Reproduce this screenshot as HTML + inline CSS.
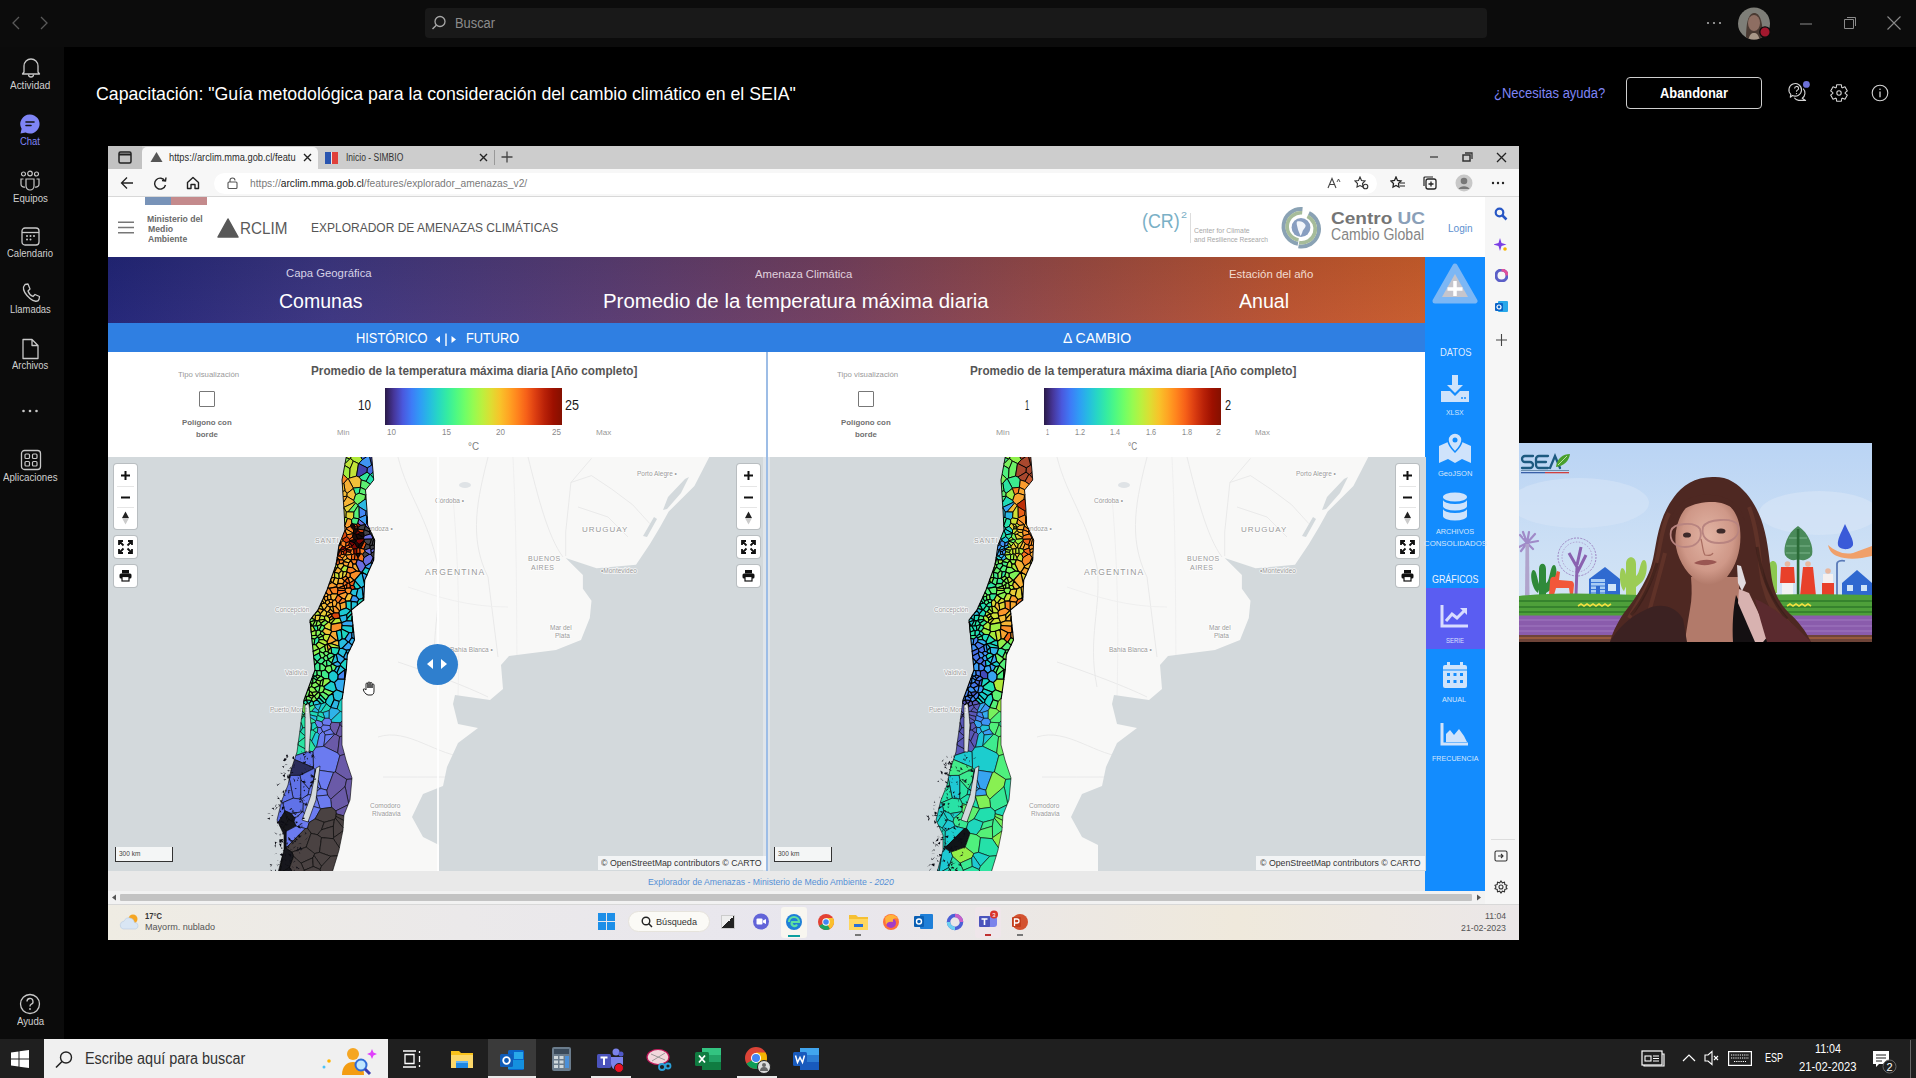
<!DOCTYPE html>
<html><head><meta charset="utf-8">
<style>
*{margin:0;padding:0;box-sizing:border-box}
html,body{width:1916px;height:1078px;overflow:hidden;background:#000;font-family:"Liberation Sans",sans-serif;position:relative}
.a{position:absolute}
#titlebar{left:0;top:0;width:1916px;height:47px;background:#0c0c0c}
#search{left:425px;top:8px;width:1062px;height:30px;background:#191919;border-radius:4px}
#rail{left:0;top:47px;width:64px;height:993px;background:#0b0b0b}
.ri{position:absolute;left:0;width:64px;text-align:center;color:#d6d6d6;font-size:10px}
#taskbar{left:0;top:1039px;width:1916px;height:39px;background:#1f1f1f}
#browser{left:108px;top:146px;width:1411px;height:794px;background:#fff}
#video{left:1519px;top:443px;width:353px;height:199px;overflow:hidden}
.legbar{background:linear-gradient(90deg,#2a1a48 0%,#463699 5%,#4a58dd 10%,#3e7bf7 15%,#2f9df5 20%,#26bce1 25%,#27d7c4 30%,#34eba3 35%,#4df884 40%,#6efe68 45%,#95fb51 50%,#bbf03f 55%,#dedd32 60%,#f8c32a 65%,#ffa423 70%,#ff821d 75%,#f65f18 80%,#db3d11 85%,#ba2208 90%,#9d1000 95%,#841000 100%)}
.tx{line-height:1;white-space:nowrap;transform-origin:0 0}
</style></head><body>
<div id="titlebar" class="a"></div>
<!-- nav arrows -->
<svg class="a" style="left:10px;top:15px" width="44" height="16" viewBox="0 0 44 16"><path d="M9 2 L3 8 L9 14" fill="none" stroke="#5a5a5a" stroke-width="1.3"/><path d="M31 2 L37 8 L31 14" fill="none" stroke="#5a5a5a" stroke-width="1.3"/></svg>
<div id="search" class="a"></div>
<svg class="a" style="left:1706px;top:21px" width="16" height="4"><circle cx="2" cy="2" r="1.1" fill="#aaa"/><circle cx="8" cy="2" r="1.1" fill="#aaa"/><circle cx="14" cy="2" r="1.1" fill="#aaa"/></svg>
<svg class="a" style="left:431px;top:15px" width="16" height="16" viewBox="0 0 16 16"><circle cx="9" cy="6.5" r="5" fill="none" stroke="#a8a8a8" stroke-width="1.3"/><path d="M5.3 10.2 L1.5 14" stroke="#a8a8a8" stroke-width="1.4"/></svg>
<svg class="a" style="left:1737px;top:6px" width="36" height="36" viewBox="0 0 36 36"><defs><clipPath id="avc"><circle cx="17" cy="17.5" r="16"/></clipPath></defs><g clip-path="url(#avc)"><rect width="36" height="36" fill="#7e7e78"/><path d="M9 36 C9 20 10 8 17 7 C24 7 26 18 26 36Z" fill="#4a3a32"/><ellipse cx="17" cy="17" rx="6" ry="8" fill="#8e6e62"/><path d="M11 36 C12 29 14 27 17 27 C20 27 22 29 23 36Z" fill="#a89888"/></g><circle cx="28" cy="26" r="5.2" fill="#a3182e" stroke="#0c0c0c" stroke-width="1.3"/></svg>

<svg class="a" style="left:1798px;top:16px" width="16" height="16"><path d="M2 8 H14" stroke="#8a8a8a" stroke-width="1"/></svg>
<svg class="a" style="left:1841px;top:14px" width="18" height="18"><path d="M3.5 5.5 h9 v9 h-9z M6 3.5 h8.5 v8.5" fill="none" stroke="#8a8a8a" stroke-width="1"/></svg>
<svg class="a" style="left:1886px;top:15px" width="16" height="16"><path d="M1.5 1.5 L14.5 14.5 M14.5 1.5 L1.5 14.5" stroke="#8a8a8a" stroke-width="1.1"/></svg>

<div id="rail" class="a"></div>
<!-- Actividad -->
<svg class="a" style="left:20px;top:57px" width="22" height="22" viewBox="0 0 22 22"><path d="M4 15 V9 a7 7 0 0 1 14 0 V15 L19.5 17 H2.5 Z" fill="none" stroke="#c8c8c8" stroke-width="1.3" stroke-linejoin="round"/><path d="M8.5 17.5 a2.5 2.5 0 0 0 5 0" fill="none" stroke="#c8c8c8" stroke-width="1.3"/></svg>
<!-- Chat -->
<svg class="a" style="left:19px;top:113px" width="22" height="22" viewBox="0 0 22 22"><path d="M11 1.5 a9.5 9.5 0 1 1 -4.4 17.9 L1.5 20.5 L2.6 15.8 A9.5 9.5 0 0 1 11 1.5z" fill="#7f85f5"/><path d="M7 9 H15 M7 12.5 H12" stroke="#141414" stroke-width="1.6" stroke-linecap="round"/></svg>
<!-- Equipos -->
<svg class="a" style="left:19px;top:170px" width="22" height="22" viewBox="0 0 22 22"><circle cx="4.5" cy="4" r="2" fill="none" stroke="#c8c8c8" stroke-width="1.2"/><circle cx="11" cy="3.5" r="2.3" fill="none" stroke="#c8c8c8" stroke-width="1.2"/><circle cx="17.5" cy="4" r="2" fill="none" stroke="#c8c8c8" stroke-width="1.2"/><path d="M7 9 h8 v7 a4 4 0 0 1 -8 0z" fill="none" stroke="#c8c8c8" stroke-width="1.2"/><path d="M4.5 9 H2 v5 a3 3 0 0 0 4 3 M17.5 9 H20 v5 a3 3 0 0 1 -4 3" fill="none" stroke="#c8c8c8" stroke-width="1.2"/></svg>
<!-- Calendario -->
<svg class="a" style="left:20px;top:226px" width="22" height="22" viewBox="0 0 22 22"><rect x="2" y="2" width="17" height="17" rx="3" fill="none" stroke="#c8c8c8" stroke-width="1.3"/><path d="M2 6.5 H19" stroke="#c8c8c8" stroke-width="1.3"/><g fill="#c8c8c8"><circle cx="7" cy="10" r="1"/><circle cx="10.5" cy="10" r="1"/><circle cx="14" cy="10" r="1"/><circle cx="7" cy="13.5" r="1"/><circle cx="10.5" cy="13.5" r="1"/></g></svg>
<!-- Llamadas -->
<svg class="a" style="left:20px;top:282px" width="22" height="22" viewBox="0 0 22 22"><path d="M5 2.5 L8 2 L10 7 L8 9 C9 12 10.5 13.5 13 14.5 L15 12.5 L19.5 14.5 L19 17.5 C18 20 14 20 10 16.5 C5 12 3 8 3.5 5 Z" fill="none" stroke="#c8c8c8" stroke-width="1.3" stroke-linejoin="round"/></svg>
<!-- Archivos -->
<svg class="a" style="left:21px;top:338px" width="20" height="22" viewBox="0 0 20 22"><path d="M2 1.5 H11 L17 7.5 V20.5 H2 Z M11 1.5 V7.5 H17" fill="none" stroke="#c8c8c8" stroke-width="1.3" stroke-linejoin="round"/></svg>
<svg class="a" style="left:21px;top:408px" width="20" height="6"><circle cx="2.5" cy="3" r="1.3" fill="#c8c8c8"/><circle cx="9" cy="3" r="1.3" fill="#c8c8c8"/><circle cx="15.5" cy="3" r="1.3" fill="#c8c8c8"/></svg>
<!-- Aplicaciones -->
<svg class="a" style="left:20px;top:449px" width="22" height="22" viewBox="0 0 22 22"><rect x="1.5" y="1.5" width="19" height="19" rx="3" fill="none" stroke="#c8c8c8" stroke-width="1.3"/><rect x="5" y="5" width="4.5" height="4.5" rx="1" fill="none" stroke="#c8c8c8" stroke-width="1.2"/><rect x="12.5" y="5" width="4.5" height="4.5" rx="1" fill="none" stroke="#c8c8c8" stroke-width="1.2"/><rect x="5" y="12.5" width="4.5" height="4.5" rx="1" fill="none" stroke="#c8c8c8" stroke-width="1.2"/><rect x="12.5" y="12.5" width="4.5" height="4.5" rx="1" fill="none" stroke="#c8c8c8" stroke-width="1.2"/></svg>
<!-- Ayuda -->
<svg class="a" style="left:19px;top:993px" width="22" height="22" viewBox="0 0 22 22"><circle cx="11" cy="11" r="9.5" fill="none" stroke="#c8c8c8" stroke-width="1.3"/><path d="M8 8.5 a3 3 0 1 1 4 2.8 c-1 0.5 -1 1 -1 2.2" fill="none" stroke="#c8c8c8" stroke-width="1.3"/><circle cx="11" cy="16" r="0.9" fill="#c8c8c8"/></svg>

<!-- meeting header -->
<div class="a" style="left:1626px;top:77px;width:136px;height:32px;border:1.5px solid #cfcfcf;border-radius:4px"></div>
<svg class="a" style="left:1786px;top:79px" width="26" height="26" viewBox="0 0 26 26"><path d="M6.5 16.5 L4.3 18.2 L4.8 15.3 A6.3 6.3 0 1 1 6.5 16.5Z" fill="none" stroke="#d4d4d4" stroke-width="1.1" stroke-linejoin="round"/><path d="M17.2 9.6 A6.3 6.3 0 0 1 16.2 19.2 L19.6 21.4 L12.6 21.4 A6.3 6.3 0 0 1 8.3 18.8" fill="none" stroke="#d4d4d4" stroke-width="1.1" stroke-linejoin="round"/><path d="M8.6 9.4 a2 2 0 1 1 2.7 1.9 c-0.6 0.3 -0.8 0.6 -0.8 1.4" fill="none" stroke="#d4d4d4" stroke-width="1.1"/><circle cx="10.5" cy="14.6" r="0.7" fill="#d4d4d4"/><circle cx="20.4" cy="5.4" r="3.4" fill="#6d71d8"/></svg>
<svg class="a" style="left:1828px;top:82px" width="22" height="22" viewBox="0 0 22 22"><path d="M8.63 2.73 L13.37 2.73 L13.72 5.43 L14.47 5.86 L16.97 4.81 L19.34 8.92 L17.18 10.57 L17.18 11.43 L19.34 13.08 L16.97 17.19 L14.47 16.14 L13.72 16.57 L13.37 19.27 L8.63 19.27 L8.28 16.57 L7.53 16.14 L5.03 17.19 L2.66 13.08 L4.82 11.43 L4.82 10.57 L2.66 8.92 L5.03 4.81 L7.53 5.86 L8.28 5.43Z" fill="none" stroke="#d4d4d4" stroke-width="1.1" stroke-linejoin="round"/><circle cx="11" cy="11" r="2.2" fill="none" stroke="#d4d4d4" stroke-width="1.1"/></svg>
<svg class="a" style="left:1871px;top:84px" width="18" height="18" viewBox="0 0 18 18"><circle cx="9" cy="9" r="7.8" fill="none" stroke="#d4d4d4" stroke-width="1.1"/><path d="M9 7.6 V13.2" stroke="#d4d4d4" stroke-width="1.3"/><circle cx="9" cy="5.3" r="0.8" fill="#d4d4d4"/></svg>
<div id="taskbar" class="a"></div>
<svg class="a" style="left:11px;top:1050px" width="18" height="18" viewBox="0 0 18 18"><g fill="#fff"><path d="M0 2.5 L7.5 1.4 V8.5 H0Z"/><path d="M8.5 1.2 L18 0 V8.5 H8.5Z"/><path d="M0 9.5 H7.5 V16.6 L0 15.5Z"/><path d="M8.5 9.5 H18 V18 L8.5 16.8Z"/></g></svg>
<div class="a" style="left:44px;top:1039px;width:344px;height:39px;background:#f0f0f0"></div>
<svg class="a" style="left:54px;top:1050px" width="20" height="20" viewBox="0 0 20 20"><circle cx="12" cy="7.5" r="5.5" fill="none" stroke="#222" stroke-width="1.4"/><path d="M8 11.5 L2 17.5" stroke="#222" stroke-width="1.6"/></svg>
<!-- search illustration -->
<svg class="a" style="left:320px;top:1043px" width="60" height="34" viewBox="0 0 60 34"><circle cx="4" cy="24" r="1.5" fill="#4fc3f7"/><circle cx="9" cy="18" r="1.8" fill="#ffb300"/><path d="M52 6 l1.5 3.5 3.5 1.5 -3.5 1.5 -1.5 3.5 -1.5 -3.5 -3.5 -1.5 3.5 -1.5z" fill="#e040fb"/><circle cx="33" cy="11" r="6" fill="#f5a623"/><path d="M22 32 c0 -9 5 -13 11 -13 s11 4 11 13z" fill="#f39c12"/><circle cx="41" cy="22" r="5.5" fill="#bfe6ff" stroke="#2f6bd8" stroke-width="2"/><path d="M45 26 L50 31" stroke="#3b3bb0" stroke-width="3"/></svg>
<!-- task view -->
<svg class="a" style="left:402px;top:1050px" width="20" height="18" viewBox="0 0 20 18"><path d="M1 1 H14 M1 17 H14 M3 4.5 H12 V13.5 H3Z" fill="none" stroke="#fff" stroke-width="1.3"/><path d="M17.5 1 V3 M17.5 6 V12 M17.5 15 V17" stroke="#fff" stroke-width="1.3"/></svg>
<!-- explorer -->
<svg class="a" style="left:451px;top:1049px" width="23" height="20" viewBox="0 0 23 20"><path d="M0 2 H8 L10 4 H22 V19 H0Z" fill="#f9c21b"/><path d="M0 6 H22 V19 H0Z" fill="#fcd86a"/><path d="M5 12 H17 V19 H5Z" fill="#1e88e5"/><path d="M5 12 H17 V14 H5Z" fill="#64b5f6"/></svg>
<!-- outlook active -->
<div class="a" style="left:488px;top:1039px;width:48px;height:39px;background:#3a3a3a"></div>
<div class="a" style="left:488px;top:1076px;width:48px;height:2px;background:#e8e8e8"></div>
<svg class="a" style="left:500px;top:1049px" width="25" height="22" viewBox="0 0 25 22"><rect x="8" y="1" width="16" height="20" rx="1.5" fill="#0a64c8"/><rect x="14" y="3" width="9" height="7" fill="#28a8ea"/><path d="M8 11 L24 11 V20 H8Z" fill="#1490df"/><rect x="0" y="5" width="13" height="13" rx="1.5" fill="#0f5cb8"/><circle cx="6.5" cy="11.5" r="3.3" fill="none" stroke="#fff" stroke-width="1.8"/></svg>
<!-- calculator -->
<svg class="a" style="left:552px;top:1047px" width="19" height="24" viewBox="0 0 19 24"><rect x="0" y="0" width="19" height="24" rx="2" fill="#6b7c8c"/><rect x="2" y="2" width="15" height="5" fill="#3a4a5a"/><g fill="#cfd8dc"><rect x="2" y="9" width="4" height="3"/><rect x="7.5" y="9" width="4" height="3"/><rect x="2" y="13.5" width="4" height="3"/><rect x="7.5" y="13.5" width="4" height="3"/><rect x="2" y="18" width="4" height="3"/><rect x="7.5" y="18" width="4" height="3"/></g><rect x="13" y="9" width="4" height="12" fill="#4a90d9"/></svg>
<!-- teams -->
<svg class="a" style="left:597px;top:1047px" width="28" height="26" viewBox="0 0 28 26"><circle cx="19" cy="5" r="3.5" fill="#7b83eb"/><circle cx="24" cy="7" r="2.5" fill="#5059c9"/><path d="M13 10 H26 V17 a6 6 0 0 1 -12 0z" fill="#7b83eb"/><rect x="0" y="7" width="14" height="14" rx="1.5" fill="#4b53bc"/><path d="M3.5 10.5 H10.5 M7 10.5 V18" stroke="#fff" stroke-width="2"/><circle cx="22" cy="21" r="4.5" fill="#e81123" stroke="#1f1f1f" stroke-width="1"/></svg>
<div class="a" style="left:591px;top:1076px;width:40px;height:2px;background:#e8e8e8"></div>
<!-- snip -->
<svg class="a" style="left:646px;top:1048px" width="26" height="24" viewBox="0 0 26 24"><ellipse cx="12" cy="9" rx="11" ry="7.5" fill="#f2d7dc" stroke="#c2185b" stroke-width="1.2"/><path d="M5 6 L19 12 M19 5 L6 13" stroke="#888" stroke-width="0.8"/><circle cx="16" cy="19" r="3" fill="none" stroke="#2a9fd8" stroke-width="1.8"/><circle cx="22" cy="18" r="2.5" fill="none" stroke="#2a9fd8" stroke-width="1.8"/></svg>
<!-- excel -->
<svg class="a" style="left:695px;top:1048px" width="26" height="22" viewBox="0 0 26 22"><rect x="7" y="0" width="19" height="22" rx="1.5" fill="#21a366"/><rect x="7" y="0" width="19" height="7" fill="#33c481"/><rect x="7" y="14" width="19" height="8" fill="#107c41"/><rect x="0" y="4" width="14" height="14" rx="1.5" fill="#107c41"/><path d="M4 7.5 L10 14.5 M10 7.5 L4 14.5" stroke="#fff" stroke-width="1.8"/></svg>
<!-- chrome -->
<svg class="a" style="left:744px;top:1046px" width="28" height="28" viewBox="0 0 28 28"><circle cx="12" cy="12" r="11" fill="#db4437"/><path d="M12 12 L2.5 17.5 A11 11 0 0 0 17.5 21.5Z" fill="#0f9d58"/><path d="M12 12 L17.5 21.5 A11 11 0 0 0 21.5 6.5 L12 6.5Z" fill="#f4b400"/><circle cx="12" cy="12" r="5" fill="#fff"/><circle cx="12" cy="12" r="4" fill="#4285f4"/><circle cx="20" cy="21" r="6.5" fill="#dcdcdc" stroke="#1f1f1f" stroke-width="1"/><circle cx="20" cy="19" r="2" fill="#666"/><path d="M16 25 a4 4 0 0 1 8 0" fill="#666"/></svg>
<div class="a" style="left:737px;top:1076px;width:40px;height:2px;background:#e8e8e8"></div>
<!-- word -->
<svg class="a" style="left:793px;top:1048px" width="26" height="22" viewBox="0 0 26 22"><rect x="7" y="0" width="19" height="22" rx="1.5" fill="#2b7cd3"/><rect x="7" y="0" width="19" height="7" fill="#41a5ee"/><rect x="7" y="14" width="19" height="8" fill="#185abd"/><rect x="0" y="4" width="14" height="14" rx="1.5" fill="#185abd"/><path d="M2.5 7.5 L4.5 14.5 L7 9.5 L9.5 14.5 L11.5 7.5" fill="none" stroke="#fff" stroke-width="1.5"/></svg>
<!-- tray -->
<svg class="a" style="left:1641px;top:1050px" width="24" height="17" viewBox="0 0 24 17"><rect x="1" y="1" width="20" height="14" fill="none" stroke="#fff" stroke-width="1.2"/><path d="M21 4 H23 V16 H3 V15" fill="none" stroke="#fff" stroke-width="1.2"/><rect x="4" y="6" width="6" height="5" fill="none" stroke="#fff" stroke-width="1.1"/><path d="M12 6 H18 M12 8.5 H18 M12 11 H18" stroke="#fff" stroke-width="1.1"/></svg>
<svg class="a" style="left:1682px;top:1053px" width="14" height="9"><path d="M1 8 L7 2 L13 8" fill="none" stroke="#fff" stroke-width="1.2"/></svg>
<svg class="a" style="left:1704px;top:1050px" width="16" height="16" viewBox="0 0 16 16"><path d="M1 5 H4 L8 1.5 V14.5 L4 11 H1Z" fill="none" stroke="#fff" stroke-width="1.1"/><path d="M10 6 L14 10 M14 6 L10 10" stroke="#fff" stroke-width="1.1"/></svg>
<svg class="a" style="left:1728px;top:1051px" width="24" height="15" viewBox="0 0 24 15"><rect x="0.6" y="0.6" width="22.8" height="13.8" fill="none" stroke="#fff" stroke-width="1.2"/><path d="M3 4 H21 M3 7 H21 M6 10.5 H18" stroke="#fff" stroke-width="1" stroke-dasharray="1.2 1"/></svg>
<svg class="a" style="left:1872px;top:1050px" width="26" height="24" viewBox="0 0 26 24"><path d="M1 1 H17 V14 H7 L4 17 V14 H1Z" fill="#fff"/><path d="M4 5 H14 M4 8 H14 M4 11 H10" stroke="#1f1f1f" stroke-width="1"/><circle cx="17.5" cy="16.5" r="6.5" fill="#1f1f1f" stroke="#666" stroke-width="1"/><text x="17.5" y="20.5" font-size="11" fill="#fff" text-anchor="middle" font-family="Liberation Sans">2</text></svg>
<div class="a" style="left:1910px;top:1040px;width:1px;height:38px;background:#666"></div>
<div id="browser" class="a"></div>
<!-- tab strip -->
<div class="a" style="left:108px;top:146px;width:1411px;height:23px;background:#cdcdcd"></div>
<div class="a" style="left:108px;top:146px;width:34px;height:23px;background:#c2c2c2"></div>
<svg class="a" style="left:118px;top:151px" width="14" height="13"><rect x="1" y="1" width="12" height="11" rx="1.5" fill="none" stroke="#222" stroke-width="1.5"/><path d="M1 3.5 H13" stroke="#222" stroke-width="2"/></svg>
<div class="a" style="left:142px;top:147px;width:176px;height:22px;background:#f7f7f7;border-radius:5px 5px 0 0"></div>
<svg class="a" style="left:150px;top:151px" width="13" height="12"><path d="M6.5 1 L12.5 11 H0.5Z" fill="#555"/></svg>
<svg class="a" style="left:303px;top:153px" width="9" height="9"><path d="M1 1 L8 8 M8 1 L1 8" stroke="#222" stroke-width="1.4"/></svg>
<div class="a" style="left:325px;top:152px;width:13px;height:12px;background:linear-gradient(90deg,#2a55b0 0 45%,#e8e8ee 45% 52%,#e0403a 52%)"></div>
<svg class="a" style="left:479px;top:153px" width="9" height="9"><path d="M1 1 L8 8 M8 1 L1 8" stroke="#222" stroke-width="1.4"/></svg>
<div class="a" style="left:494px;top:150px;width:1px;height:15px;background:#999"></div>
<svg class="a" style="left:501px;top:151px" width="12" height="12"><path d="M6 0.5 V11.5 M0.5 6 H11.5" stroke="#444" stroke-width="1.3"/></svg>
<svg class="a" style="left:1429px;top:153px" width="10" height="8"><path d="M1 4 H9" stroke="#333" stroke-width="1.2"/></svg>
<svg class="a" style="left:1462px;top:152px" width="11" height="10"><rect x="1" y="3" width="7" height="6" fill="none" stroke="#333" stroke-width="1.5"/><path d="M3 1 H10 V7" fill="none" stroke="#333" stroke-width="1.3"/></svg>
<svg class="a" style="left:1496px;top:152px" width="11" height="11"><path d="M1 1 L10 10 M10 1 L1 10" stroke="#222" stroke-width="1.3"/></svg>
<!-- toolbar -->
<div class="a" style="left:108px;top:169px;width:1411px;height:28px;background:#f7f7f7;border-bottom:1px solid #d8d8d8"></div>
<svg class="a" style="left:120px;top:176px" width="14" height="14"><path d="M7 1.5 L1.5 7 L7 12.5 M1.5 7 H13" fill="none" stroke="#222" stroke-width="1.3"/></svg>
<svg class="a" style="left:153px;top:176px" width="15" height="14"><path d="M12 5 A5.5 5.5 0 1 0 12.5 9" fill="none" stroke="#222" stroke-width="1.4"/><path d="M9 4.5 L12.5 5 L13 1.5" fill="none" stroke="#222" stroke-width="1.4"/></svg>
<svg class="a" style="left:186px;top:176px" width="14" height="14"><path d="M1.5 6.5 L7 1.5 L12.5 6.5 V12.5 H9 V8.5 H5 V12.5 H1.5Z" fill="none" stroke="#222" stroke-width="1.4" stroke-linejoin="round"/></svg>
<div class="a" style="left:214px;top:173px;width:1163px;height:21px;background:#fff;border-radius:11px"></div>
<svg class="a" style="left:227px;top:177px" width="11" height="12"><rect x="1" y="5" width="9" height="6.5" rx="1" fill="none" stroke="#555" stroke-width="1.1"/><path d="M3 5 V3.5 a2.5 2.5 0 0 1 5 0" fill="none" stroke="#555" stroke-width="1.1"/></svg>
<svg class="a" style="left:1354px;top:176px" width="15" height="14"><path d="M6 1 L7.5 4.5 L11 5 L8.5 7.5 L9 11 L6 9.5 L3 11 L3.5 7.5 L1 5 L4.5 4.5Z" fill="none" stroke="#333" stroke-width="1.1"/><circle cx="11.5" cy="10.5" r="2.3" fill="#f7f7f7" stroke="#333" stroke-width="1.1"/></svg>
<svg class="a" style="left:1390px;top:176px" width="16" height="14"><path d="M6 1 L7.5 4.5 L11 5 L8.5 7.5 L9 11 L6 9.5 L3 11 L3.5 7.5 L1 5 L4.5 4.5Z" fill="none" stroke="#222" stroke-width="1.3"/><path d="M10 7 H15 M10 10 H15" stroke="#222" stroke-width="1.2"/></svg>
<svg class="a" style="left:1423px;top:176px" width="15" height="15"><rect x="3" y="3" width="10" height="10" rx="2" fill="none" stroke="#222" stroke-width="1.3"/><path d="M1 10 V2 a1 1 0 0 1 1 -1 H10" fill="none" stroke="#222" stroke-width="1.2"/><path d="M8 5.5 V10.5 M5.5 8 H10.5" stroke="#222" stroke-width="1.3"/></svg>
<svg class="a" style="left:1455px;top:174px" width="18" height="18"><circle cx="9" cy="9" r="8.5" fill="#c8c8c8"/><circle cx="9" cy="7" r="3.3" fill="#777"/><path d="M3.5 15 a6 4.5 0 0 1 11 0" fill="#777"/></svg>
<svg class="a" style="left:1491px;top:181px" width="14" height="4"><circle cx="2" cy="2" r="1.2" fill="#222"/><circle cx="7" cy="2" r="1.2" fill="#222"/><circle cx="12" cy="2" r="1.2" fill="#222"/></svg>
<!-- edge sidebar -->
<div class="a" style="left:1485px;top:197px;width:34px;height:707px;background:#f6f6f6"></div>
<svg class="a" style="left:1494px;top:207px" width="14" height="14"><circle cx="5.5" cy="5.5" r="3.8" fill="none" stroke="#2857c5" stroke-width="2.2"/><path d="M8.5 8.5 L12.5 12.5" stroke="#2857c5" stroke-width="2.5"/></svg>
<svg class="a" style="left:1494px;top:238px" width="14" height="14"><path d="M6 0 L7.5 5 L12.5 6.5 L7.5 8 L6 13 L4.5 8 L-0.5 6.5 L4.5 5Z" fill="#7b3fe4"/><circle cx="11" cy="11" r="1.8" fill="#f5b400"/></svg>
<svg class="a" style="left:1495px;top:269px" width="13" height="13"><circle cx="6.5" cy="6.5" r="5.5" fill="none" stroke="#5b5fc7" stroke-width="3"/><path d="M6.5 1 A5.5 5.5 0 0 1 12 6.5" fill="none" stroke="#e0509a" stroke-width="3"/></svg>
<svg class="a" style="left:1495px;top:300px" width="13" height="13"><rect x="3" y="1" width="10" height="11" rx="1" fill="#28a8ea"/><rect x="0" y="3" width="8" height="8" rx="1" fill="#0a64c8"/><circle cx="4" cy="7" r="2" fill="none" stroke="#fff" stroke-width="1.2"/></svg>
<svg class="a" style="left:1496px;top:334px" width="11" height="12"><path d="M5.5 0 V12 M0 6 H11" stroke="#444" stroke-width="1.1"/></svg>
<div class="a" style="left:1491px;top:839px;width:24px;height:1px;background:#ddd"></div>
<svg class="a" style="left:1494px;top:850px" width="14" height="12"><rect x="1" y="1" width="12" height="10" rx="1.5" fill="none" stroke="#333" stroke-width="1.1"/><path d="M4 6 H9 M7 4 L9 6 L7 8" fill="none" stroke="#333" stroke-width="1.1"/></svg>
<svg class="a" style="left:1494px;top:880px" width="14" height="14"><path d="M7 1 L8.3 2.8 L10.5 2.2 L10.8 4.5 L13 5.3 L12 7 L13 8.7 L10.8 9.5 L10.5 11.8 L8.3 11.2 L7 13 L5.7 11.2 L3.5 11.8 L3.2 9.5 L1 8.7 L2 7 L1 5.3 L3.2 4.5 L3.5 2.2 L5.7 2.8Z" fill="none" stroke="#333" stroke-width="1.1"/><circle cx="7" cy="7" r="2" fill="none" stroke="#333" stroke-width="1.1"/></svg>

<!-- site header -->
<div class="a" style="left:108px;top:198px;width:1377px;height:59px;background:#fff"></div>
<div class="a" style="left:145px;top:197px;width:26px;height:8px;background:#7893b8"></div>
<div class="a" style="left:171px;top:197px;width:36px;height:8px;background:#c48a8c"></div>
<svg class="a" style="left:118px;top:221px" width="16" height="13"><path d="M0 1.2 H16 M0 6.5 H16 M0 11.8 H16" stroke="#777" stroke-width="1.6"/></svg>
<svg class="a" style="left:217px;top:218px" width="22" height="20"><path d="M11 1 L21 19 H1Z" fill="#585858" stroke="#585858" stroke-linejoin="round" stroke-width="1.5"/></svg>
<div class="a" style="left:1190px;top:213px;width:1px;height:30px;background:#ddd"></div>
<svg class="a" style="left:1280px;top:206px" width="42" height="44" viewBox="0 0 42 44">
<path d="M22.53 3.07 A17.50 17.50 0 0 0 17.96 37.73" fill="none" stroke="#8aa2b4" stroke-width="4"/><path d="M22.20 6.75 A13.80 13.80 0 0 0 18.60 34.09" fill="none" stroke="#a6bc9a" stroke-width="3.6"/>
<path d="M28.90 7.14 A17.50 17.50 0 0 1 18.46 40.23" fill="none" stroke="#8aa2b4" stroke-width="4"/><path d="M27.33 10.49 A13.80 13.80 0 0 1 19.10 36.59" fill="none" stroke="#a6bc9a" stroke-width="3.6"/>
<circle cx="21" cy="21.5" r="9.4" fill="#889ec0"/>
<path d="M17 15.5 C20 14.5 24 15.5 25.5 19 C26 21.5 23.5 23 22.5 25.5 C22 27.5 21 29 20.5 30 C19.5 27 18 24.5 17.5 21.5 C17 19 16.2 17 17 15.5Z" fill="#f2f5fa"/>
</svg>

<!-- gradient band -->
<div class="a" style="left:108px;top:257px;width:1317px;height:66px;background:linear-gradient(90deg,#24287a 0%,#403a84 17%,#5e4074 38%,#7a4460 55%,#a65040 75%,#c85a2e 90%,#d5632a 100%)"></div>
<div class="a" style="left:108px;top:257px;width:1317px;height:66px;background:linear-gradient(180deg,rgba(0,0,30,0.12),rgba(60,40,120,0.08))"></div>
<!-- blue bar -->
<div class="a" style="left:108px;top:323px;width:1317px;height:29px;background:#2f7fe2"></div>

<svg class="a" style="left:434px;top:332px" width="28" height="15"><path d="M6 4 L1.5 7.5 L6 11Z" fill="#fff"/><path d="M12 1.5 V14" stroke="#fff" stroke-width="1.4"/><path d="M17.5 4 L22 7.5 L17.5 11Z" fill="#fff"/></svg>
<svg class="a" style="left:1327px;top:177px" width="14" height="12"><path d="M1 11 L5 1.5 L9 11 M2.6 7.5 H7.4" fill="none" stroke="#444" stroke-width="1.1"/><path d="M10 5 L11.5 2 L13 5" fill="none" stroke="#444" stroke-width="0.9"/></svg>
<!-- blue right panel -->
<div class="a" style="left:1425px;top:257px;width:60px;height:634px;background:#138cfe"></div>
<div class="a" style="left:1425px;top:588px;width:60px;height:61px;background:#5a5df2"></div>
<svg class="a" style="left:1432px;top:263px" width="46" height="42" viewBox="0 0 46 42"><path d="M23 3 L43 38 H3Z" fill="#7cb7f5" stroke="#7cb7f5" stroke-width="5" stroke-linejoin="round"/><path d="M23 11 L36 34 H10Z" fill="#c5c5cc"/><path d="M23 18 V33 M15.5 26 H30.5" stroke="#fff" stroke-width="3.5"/></svg>
<svg class="a" style="left:1440px;top:374px" width="30" height="30" viewBox="0 0 30 30"><path d="M12 1 H18 V11 H23 L15 19 L7 11 H12Z" fill="#cfe3fb"/><path d="M1 17 H10 L15 22 L20 17 H29 V28 H1Z" fill="#cfe3fb"/><circle cx="22" cy="24" r="1" fill="#138cfe"/><circle cx="25" cy="24" r="1" fill="#138cfe"/></svg>
<svg class="a" style="left:1438px;top:432px" width="34" height="32" viewBox="0 0 34 32"><path d="M1 14 L10 10 L17 15 L24 10 L33 14 V31 L24 27 L17 31 L10 27 L1 31Z" fill="#cfe3fb"/><path d="M17 1 a7 7 0 0 1 7 7 c0 5 -7 12 -7 12 s-7 -7 -7 -12 a7 7 0 0 1 7 -7z" fill="#cfe3fb" stroke="#138cfe" stroke-width="1.5"/><circle cx="17" cy="8" r="2.5" fill="#138cfe"/></svg>
<svg class="a" style="left:1442px;top:492px" width="26" height="30" viewBox="0 0 26 30"><ellipse cx="13" cy="5" rx="12" ry="4.5" fill="#cfe3fb"/><path d="M1 7.5 a12 4.5 0 0 0 24 0 V14 a12 4.5 0 0 1 -24 0Z" fill="#cfe3fb"/><path d="M1 16.5 a12 4.5 0 0 0 24 0 V24 a12 4.5 0 0 1 -24 0Z" fill="#cfe3fb"/></svg>
<svg class="a" style="left:1440px;top:604px" width="30" height="24" viewBox="0 0 30 24"><path d="M2 1 V22 H28" fill="none" stroke="#d8dcff" stroke-width="3"/><path d="M6 17 L12 10 L17 14 L25 6" fill="none" stroke="#d8dcff" stroke-width="3"/><path d="M20 4 H27 V11Z" fill="#d8dcff"/></svg>
<svg class="a" style="left:1442px;top:661px" width="26" height="28" viewBox="0 0 26 28"><rect x="1" y="4" width="24" height="23" rx="2" fill="#cfe3fb"/><rect x="5" y="1" width="3" height="6" fill="#cfe3fb"/><rect x="18" y="1" width="3" height="6" fill="#cfe3fb"/><path d="M1 9 H25" stroke="#138cfe" stroke-width="1"/><g fill="#138cfe"><rect x="5" y="12" width="3" height="3"/><rect x="11.5" y="12" width="3" height="3"/><rect x="18" y="12" width="3" height="3"/><rect x="5" y="19" width="3" height="3"/><rect x="11.5" y="19" width="3" height="3"/><rect x="18" y="19" width="3" height="3"/></g></svg>
<svg class="a" style="left:1440px;top:722px" width="30" height="24" viewBox="0 0 30 24"><path d="M2 1 V22 H28" fill="none" stroke="#cfe3fb" stroke-width="3"/><path d="M6 20 V12 L10 8 L14 13 L19 7 L24 14 L27 20Z" fill="#cfe3fb"/></svg>

<!-- legend area -->
<div class="a" style="left:108px;top:352px;width:1317px;height:105px;background:#fff"></div>

<!-- left legend -->
<div class="a" style="left:199px;top:391px;width:16px;height:16px;border:1.5px solid #777;border-radius:1px"></div>
<div class="a legbar" style="left:385px;top:388px;width:177px;height:37px"></div>
<!-- right legend -->
<div class="a" style="left:858px;top:391px;width:16px;height:16px;border:1.5px solid #777;border-radius:1px"></div>
<div class="a legbar" style="left:1044px;top:388px;width:177px;height:37px"></div>

<!-- footer, scrollbar -->
<div class="a" style="left:108px;top:871px;width:1317px;height:20px;background:#e9e9e9"></div>
<div class="a" style="left:108px;top:891px;width:1377px;height:13px;background:#f2f2f2"></div>
<div class="a" style="left:120px;top:894px;width:1352px;height:7px;background:#c3c3c3;border-radius:1px"></div>
<svg class="a" style="left:111px;top:894px" width="6" height="7"><path d="M5 0.5 L1 3.5 L5 6.5Z" fill="#555"/></svg>
<svg class="a" style="left:1476px;top:894px" width="6" height="7"><path d="M1 0.5 L5 3.5 L1 6.5Z" fill="#555"/></svg>

<!-- inner win11 taskbar -->
<div class="a" style="left:108px;top:904px;width:1411px;height:36px;background:linear-gradient(90deg,#efece3 0%,#ebe9ea 25%,#e8e6ee 50%,#efe9dc 80%,#ebe7e8 100%);border-top:1px solid #d8d8d8"></div>
<svg class="a" style="left:119px;top:913px" width="22" height="17" viewBox="0 0 22 17"><circle cx="14" cy="6" r="4.5" fill="#f5a623"/><path d="M4 16 a4 4 0 0 1 1 -7.8 a5.5 5.5 0 0 1 10.5 1.3 a3.3 3.3 0 0 1 1 6.5Z" fill="#d9e6f4" stroke="#b8cbe0" stroke-width="0.6"/></svg>
<svg class="a" style="left:598px;top:913px" width="17" height="17"><g fill="#1d8fe8"><rect x="0" y="0" width="8" height="8"/><rect x="9" y="0" width="8" height="8"/><rect x="0" y="9" width="8" height="8"/><rect x="9" y="9" width="8" height="8"/></g></svg>
<div class="a" style="left:628px;top:911px;width:82px;height:21px;background:#fbfaf6;border-radius:11px;border:1px solid #e6e3dc"></div>
<svg class="a" style="left:641px;top:916px" width="12" height="12"><circle cx="5" cy="5" r="3.8" fill="none" stroke="#222" stroke-width="1.4"/><path d="M7.8 7.8 L11 11" stroke="#222" stroke-width="1.5"/></svg>
<div class="a" style="left:721px;top:915px;width:14px;height:14px;background:linear-gradient(135deg,#eee 50%,#222 50%);border:1px solid #ccc"></div>
<svg class="a" style="left:752px;top:913px" width="18" height="17"><circle cx="9" cy="8.5" r="8" fill="#6264d8"/><rect x="4.5" y="5.5" width="6" height="6" rx="1" fill="#fff"/><path d="M11 7.5 L14 6 V11 L11 9.5Z" fill="#fff"/></svg>
<div class="a" style="left:781px;top:907px;width:26px;height:31px;background:#f8f6f0;border-radius:3px"></div>
<svg class="a" style="left:785px;top:913px" width="18" height="18"><circle cx="9" cy="9" r="8" fill="#1e7fd8"/><path d="M4 9 a5 5 0 0 1 10 0 H7 a2.5 2.5 0 0 0 5 2.5" fill="none" stroke="#5ee0a0" stroke-width="2.2"/></svg>
<div class="a" style="left:788px;top:935px;width:12px;height:2px;background:#0b9fa0"></div>
<svg class="a" style="left:817px;top:913px" width="18" height="18"><circle cx="9" cy="9" r="8" fill="#e34133"/><path d="M9 9 L2.1 13 A8 8 0 0 0 13 15.9Z" fill="#1ea362"/><path d="M9 9 L13 15.9 A8 8 0 0 0 16 5 H9Z" fill="#fbc02d"/><circle cx="9" cy="9" r="3.7" fill="#fff"/><circle cx="9" cy="9" r="2.8" fill="#4285f4"/></svg>
<svg class="a" style="left:849px;top:914px" width="19" height="16"><path d="M0 1 H7 L9 3 H19 V16 H0Z" fill="#f6c033"/><path d="M0 5 H19 V16 H0Z" fill="#ffd75e"/><rect x="5" y="10" width="9" height="3" fill="#2a6fd6"/></svg>
<div class="a" style="left:855px;top:934px;width:6px;height:2px;background:#777"></div>
<svg class="a" style="left:882px;top:913px" width="18" height="18"><circle cx="9" cy="9" r="8" fill="#ff7139"/><circle cx="9" cy="10" r="5" fill="#a33cc8"/><path d="M3 5 C5 1 13 0 16 6 C13 4 10 6 11 9 C8 8 5 9 4 12Z" fill="#ffb23a"/></svg>
<svg class="a" style="left:914px;top:913px" width="19" height="17"><rect x="6" y="1" width="13" height="15" rx="1" fill="#1e7fd8"/><rect x="0" y="3" width="10" height="11" rx="1" fill="#0a5fb4"/><circle cx="5" cy="8.5" r="2.5" fill="none" stroke="#fff" stroke-width="1.4"/></svg>
<svg class="a" style="left:946px;top:913px" width="18" height="18"><circle cx="9" cy="9" r="6.5" fill="none" stroke="#4b5fd6" stroke-width="3.5"/><path d="M9 2.5 A6.5 6.5 0 0 1 15.5 9" fill="none" stroke="#c860c8" stroke-width="3.5"/><path d="M2.5 9 A6.5 6.5 0 0 0 9 15.5" fill="none" stroke="#6cd0f0" stroke-width="3.5"/></svg>
<div class="a" style="left:975px;top:907px;width:26px;height:31px;background:#efe6ea;border-radius:3px"></div>
<svg class="a" style="left:978px;top:910px" width="22" height="20"><rect x="8" y="6" width="11" height="11" rx="3" fill="#7b83eb"/><rect x="1" y="6" width="11" height="11" rx="1" fill="#4b53bc"/><path d="M3.5 9 H9.5 M6.5 9 V15" stroke="#fff" stroke-width="1.6"/><circle cx="16" cy="4.5" r="4" fill="#d9342b"/><text x="16" y="7" font-size="6" fill="#fff" text-anchor="middle" font-family="Liberation Sans">3</text></svg>
<div class="a" style="left:985px;top:934px;width:6px;height:2px;background:#c03030"></div>
<svg class="a" style="left:1011px;top:913px" width="18" height="18"><circle cx="9" cy="9" r="8" fill="#d35230"/><rect x="1" y="4" width="9" height="10" rx="1" fill="#c43e1c"/><path d="M3.5 13 V6 H6 a2 2 0 0 1 0 4 H3.5" fill="none" stroke="#fff" stroke-width="1.3"/></svg>
<div class="a" style="left:1017px;top:934px;width:6px;height:2px;background:#777"></div>
<svg class="a" style="left:108px;top:457px" width="659" height="414" viewBox="0 0 659 414">
<rect x="-1" y="-1" width="662" height="418" fill="#f8f8f7"/>
<g fill="none" stroke="#e8e8e8" stroke-width="0.9">
<path d="M290 0 C300 40 320 60 330 110 C335 150 320 180 330 230 M380 0 C370 40 360 80 380 120 L390 200 M483.5 1.4 L462.9 25.5 L457.7 75.1 L457.7 99 M462.9 25.5 L483.5 18.6 L504 32.3 L524.6 47.7 L541.8 66.6 M470 50 L500 60 L520 80 M290 205 C320 215 360 230 380 240 M270 280 C300 270 330 300 360 300 M275 320 C300 320 320 320 340 320 M420 0 C430 40 440 80 455 100"/>
<path d="M345 40 C350 100 352 160 350 240 M405 0 C410 100 408 200 410 300 M300 130 C330 140 360 150 400 150" stroke="#eeeeee"/>
</g>
<path d="M-1 -1 L238.6 -2.0 L234.0 23.0 L236.0 53.0 L237.0 73.0 L231.0 88.0 L228.0 108.0 L219.0 133.0 L210.0 153.0 L202.0 163.0 L205.0 193.0 L207.0 213.0 L196.0 243.0 L192.0 273.0 L189.0 295.0 L183.0 313.0 L180.0 328.0 L174.0 343.0 L169.0 363.0 L176.0 378.0 L176.0 393.0 L170.0 416.0 L-1 416Z" fill="#d3d9dc"/>
<path d="M601.8 -1.0 L586.4 28.9 L560.7 54.6 L552.1 70.0 L541.8 87.2 L528.0 107.8 L488.6 111.2 L457.7 101.0 L474.9 118.1 L474.9 131.8 L483.5 143.8 L481.8 161.0 L473.0 183.0 L448.0 193.0 L401.0 199.0 L393.0 208.0 L395.0 232.0 L382.0 243.0 L347.0 238.0 L345.0 247.0 L350.0 267.0 L370.0 271.0 L350.0 286.0 L339.0 310.0 L335.0 329.0 L315.0 337.0 L304.0 360.0 L315.0 380.0 L331.0 388.0 L331.0 416.0 L660 416 L660 -1Z" fill="#d3d9dc"/>
<path d="M577 22 L581 20 L573 36 L559 52 L555 53 L560 40Z M546 60 L549 62 L539 80 L535 79Z" fill="#d3d9dc"/>
<ellipse cx="357" cy="28" rx="6" ry="3" fill="#dfe3e6"/>
<circle cx="82" cy="89" r="1.3" fill="#222"/><circle cx="114" cy="87" r="1.3" fill="#222"/>
<path d="M-1 -1 L262.6 -2.0 L264.7 23.0 L256.5 33.0 L258.0 53.0 L258.6 68.0 L265.7 83.0 L264.7 103.0 L255.7 123.0 L254.7 143.0 L242.4 153.0 L245.5 183.0 L238.3 198.0 L237.3 213.0 L233.0 243.0 L233.0 273.0 L233.0 288.0 L237.0 303.0 L243.0 321.0 L241.0 343.0 L235.0 358.0 L234.0 373.0 L230.0 393.0 L223.0 416.0 L-1 416Z" fill="#d3d9dc"/>
<g font-family="Liberation Sans" fill="#9a9a9a" stroke="#ffffff" stroke-width="1.6" stroke-opacity="0.75" paint-order="stroke">
<text x="529" y="19" font-size="6.5" letter-spacing="0">Porto Alegre •</text>
<text x="327" y="46" font-size="6.5" letter-spacing="0">Córdoba •</text>
<text x="474" y="75" font-size="8" letter-spacing="1">URUGUAY</text>
<text x="317" y="118" font-size="8.5" letter-spacing="1.2">ARGENTINA</text>
<text x="420" y="104" font-size="7" letter-spacing="0.5">BUENOS</text>
<text x="423" y="113" font-size="7" letter-spacing="0.5">AIRES</text>
<text x="493" y="116" font-size="6.5" letter-spacing="0">•Montevideo</text>
<text x="442" y="173" font-size="6.5" letter-spacing="0">Mar del</text>
<text x="447" y="181" font-size="6.5" letter-spacing="0">Plata</text>
<text x="342" y="195" font-size="6.5" letter-spacing="0">Bahía Blanca •</text>
<text x="207" y="86" font-size="7" letter-spacing="0.8">SANTIAGO</text>
<text x="254" y="74" font-size="6.5" letter-spacing="0">Mendoza •</text>
<text x="167" y="155" font-size="6.5" letter-spacing="0">Concepción</text>
<text x="177" y="218" font-size="6.5" letter-spacing="0">Valdivia</text>
<text x="162" y="255" font-size="6.5" letter-spacing="0">Puerto Montt</text>
<text x="262" y="351" font-size="6.5" letter-spacing="0">Comodoro</text>
<text x="264" y="359" font-size="6.5" letter-spacing="0">Rivadavia</text>
</g>
<g stroke="#000" stroke-linejoin="round">
<path fill="#a0ed41" stroke-width="0.9" d="M243.2 -1.3 243.5 -2.0 242.0 -2.0Z"/>
<path fill="#bae639" stroke-width="0.9" d="M242.0 -2.0 238.6 -2.0 238.1 0.7 241.7 2.0 242.7 1.7 243.2 -1.3Z"/>
<path fill="#4677e9" stroke-width="0.9" d="M254.3 2.7 261.1 -1.9 261.1 -2.0 251.8 -2.0Z"/>
<path fill="#b0e93a" stroke-width="0.9" d="M243.2 -1.3 242.7 1.7 245.3 4.0 250.5 6.6 250.8 6.5 254.3 2.7 251.8 -2.0 243.5 -2.0Z"/>
<path fill="#88f052" stroke-width="0.9" d="M241.7 2.0 238.1 0.7 237.0 6.7Z"/>
<path fill="#434fbf" stroke-width="0.9" d="M261.1 -1.9 263.6 8.2 264.5 8.5 263.6 -2.0 261.1 -2.0Z"/>
<path fill="#3f94f3" stroke-width="0.9" d="M261.1 -1.9 254.3 2.7 250.8 6.5 259.4 10.9 263.6 8.2Z"/>
<path fill="#bfe438" stroke-width="0.9" d="M242.1 11.7 245.3 4.0 242.7 1.7 241.7 2.0 237.0 6.7 236.7 8.5Z"/>
<path fill="#a1ed40" stroke-width="0.9" d="M239.7 21.8 240.3 21.8 241.5 21.1 242.1 11.7 236.7 8.5 235.1 17.3Z"/>
<path fill="#c2e338" stroke-width="0.9" d="M250.5 6.6 245.3 4.0 242.1 11.7 241.5 21.1 248.5 19.1Z"/>
<path fill="#4242ae" stroke-width="0.9" d="M259.4 10.9 250.8 6.5 250.5 6.6 248.5 19.1 251.0 20.0 259.1 15.2Z"/>
<path fill="#466ce0" stroke-width="0.9" d="M263.6 8.2 259.4 10.9 259.1 15.2 261.9 17.4 262.4 17.5 265.1 15.4 264.5 8.5Z"/>
<path fill="#21dfae" stroke-width="0.9" d="M262.4 17.5 265.5 21.1 265.1 15.4Z"/>
<path fill="#33e69b" stroke-width="0.9" d="M258.1 24.4 261.9 17.4 259.1 15.2 251.0 20.0 253.3 23.0Z"/>
<path fill="#f88626" stroke-width="0.9" d="M239.7 21.8 235.1 17.3 234.0 23.0 234.3 26.9 235.8 26.3Z"/>
<path fill="#23e0ac" stroke-width="0.9" d="M262.4 17.5 261.9 17.4 258.1 24.4 262.2 27.3 265.7 23.0 265.5 21.1Z"/>
<path fill="#f2c039" stroke-width="0.9" d="M253.3 23.0 251.0 20.0 248.5 19.1 241.5 21.1 240.3 21.8 245.3 31.1 252.4 30.3Z"/>
<path fill="#5df072" stroke-width="0.9" d="M258.1 24.4 253.3 23.0 252.4 30.3 252.5 30.4 257.7 32.8 262.2 27.3Z"/>
<path fill="#f6af34" stroke-width="0.9" d="M245.3 31.5 245.3 31.1 240.3 21.8 239.7 21.8 235.8 26.3 237.0 33.6 239.0 36.5Z"/>
<path fill="#f3bf39" stroke-width="0.9" d="M235.8 26.3 234.3 26.9 234.8 34.6 237.0 33.6Z"/>
<path fill="#37e896" stroke-width="0.9" d="M251.2 36.2 252.5 30.4 252.4 30.3 245.3 31.1 245.3 31.5 247.6 37.8Z"/>
<path fill="#5bf074" stroke-width="0.9" d="M252.5 30.4 251.2 36.2 257.6 38.2 257.9 37.7 257.5 33.0 257.7 32.8Z"/>
<path fill="#f3bc38" stroke-width="0.9" d="M239.1 39.3 239.0 36.5 237.0 33.6 234.8 34.6 235.1 39.6Z"/>
<path fill="#f3bf39" stroke-width="0.9" d="M245.7 43.5 247.6 37.8 245.3 31.5 239.0 36.5 239.1 39.3 239.3 39.5Z"/>
<path fill="#6ef165" stroke-width="0.9" d="M245.7 43.5 246.5 45.3 247.5 46.1 249.6 47.7 257.1 42.2 257.6 38.2 251.2 36.2 247.6 37.8Z"/>
<path fill="#87f052" stroke-width="0.9" d="M257.1 42.2 258.2 42.8 257.9 37.7 257.6 38.2Z"/>
<path fill="#f7ab33" stroke-width="0.9" d="M239.3 39.5 239.1 39.3 235.1 39.6 235.5 45.4Z"/>
<path fill="#f5b335" stroke-width="0.9" d="M246.5 45.3 245.7 43.5 239.3 39.5 235.5 45.4 235.8 50.4Z"/>
<path fill="#2bb8e3" stroke-width="0.9" d="M257.1 42.2 249.6 47.7 250.0 48.8 251.1 49.8 258.1 54.2 259.0 53.8 259.0 53.0 258.2 42.8Z"/>
<path fill="#e2cf37" stroke-width="0.9" d="M238.3 55.1 240.0 54.9 247.5 46.1 246.5 45.3 235.8 50.4 235.8 50.7Z"/>
<path fill="#62f06e" stroke-width="0.9" d="M250.0 48.8 249.6 47.7 247.5 46.1 240.0 54.9 246.0 55.1Z"/>
<path fill="#dad736" stroke-width="0.9" d="M238.0 60.4 238.3 55.1 235.8 50.7 236.0 53.0 236.4 60.7Z"/>
<path fill="#e1d137" stroke-width="0.9" d="M238.0 60.4 239.5 61.4 243.5 62.6 245.6 61.0 246.0 55.1 240.0 54.9 238.3 55.1Z"/>
<path fill="#54f079" stroke-width="0.9" d="M250.5 61.7 251.3 60.9 251.1 49.8 250.0 48.8 246.0 55.1 245.6 61.0Z"/>
<path fill="#4488f4" stroke-width="0.9" d="M257.9 58.0 258.1 54.2 251.1 49.8 251.3 60.9Z"/>
<path fill="#3d98f2" stroke-width="0.9" d="M258.1 54.2 257.9 58.0 258.8 59.9 259.3 59.9 259.0 53.8Z"/>
<path fill="#3b9cf2" stroke-width="0.9" d="M257.5 67.6 258.5 66.8 258.8 59.9 257.9 58.0 251.3 60.9 250.5 61.7 250.7 62.1Z"/>
<path fill="#2fb2e8" stroke-width="1.0" d="M259.6 66.8 259.3 59.9 258.8 59.9 258.5 66.8Z"/>
<path fill="#a7ec3c" stroke-width="1.0" d="M236.8 68.8 239.5 61.4 238.0 60.4 236.4 60.7 236.8 68.8Z"/>
<path fill="#fa9f2f" stroke-width="1.0" d="M239.5 61.4 236.8 68.8 238.7 71.2 242.1 69.3 243.9 66.3 243.5 62.6Z"/>
<path fill="#49ee83" stroke-width="1.0" d="M243.9 66.3 245.6 67.1 248.3 67.4 249.9 66.4 250.7 62.1 250.5 61.7 245.6 61.0 243.5 62.6Z"/>
<path fill="#6a6ee0" stroke-width="1.0" d="M249.9 66.4 252.8 68.4 257.5 67.7 257.5 67.6 250.7 62.1Z"/>
<path fill="#e85b16" stroke-width="1.0" d="M245.6 67.1 247.0 69.8 250.1 70.4 250.2 70.3 248.3 67.4Z"/>
<path fill="#a82106" stroke-width="1.0" d="M248.3 67.4 250.2 70.3 252.8 68.4 249.9 66.4Z"/>
<path fill="#f57a22" stroke-width="1.0" d="M237.2 74.1 238.4 72.2 238.7 71.2 236.8 68.8 236.8 68.8 237.0 73.0 236.5 74.2Z"/>
<path fill="#1a0a08" stroke-width="1.0" d="M242.1 69.3 245.5 73.0 246.8 72.0 247.0 69.8 245.6 67.1 243.9 66.3Z"/>
<path fill="#ec6218" stroke-width="1.0" d="M250.0 71.8 250.1 70.4 247.0 69.8 246.8 72.0Z"/>
<path fill="#45444a" stroke-width="1.0" d="M250.2 72.2 256.2 73.0 256.3 72.8 257.4 68.9 257.5 67.7 252.8 68.4 250.2 70.3 250.1 70.4 250.0 71.8Z"/>
<path fill="#6a6ee0" stroke-width="1.0" d="M257.5 67.7 257.4 68.9 261.8 72.6 259.6 68.0 259.6 66.8 258.5 66.8 257.5 67.6Z"/>
<path fill="#f67e23" stroke-width="1.0" d="M238.4 72.2 245.5 76.3 245.5 73.0 242.1 69.3 238.7 71.2Z"/>
<path fill="#1a0a08" stroke-width="1.0" d="M250.2 72.2 250.0 71.8 246.8 72.0 245.5 73.0 245.5 76.3 245.6 76.5 247.0 76.7 249.9 73.7Z"/>
<path fill="#d43f0b" stroke-width="1.0" d="M252.0 75.4 255.7 75.5 256.2 73.0 250.2 72.2 249.9 73.7Z"/>
<path fill="#45444a" stroke-width="1.0" d="M257.4 68.9 256.3 72.8 261.4 74.9 262.0 73.2 261.8 72.6Z"/>
<path fill="#45444a" stroke-width="1.0" d="M261.4 74.9 262.1 77.1 263.2 77.5 263.8 76.8 262.0 73.2Z"/>
<path fill="#f9a12f" stroke-width="1.0" d="M237.2 74.1 238.8 77.8 245.4 76.7 245.6 76.5 245.5 76.3 238.4 72.2Z"/>
<path fill="#7a0403" stroke-width="1.0" d="M247.0 76.7 247.8 77.3 250.1 77.3 252.0 75.4 249.9 73.7Z"/>
<path fill="#1a0a08" stroke-width="1.0" d="M250.1 77.3 255.7 80.7 256.3 78.8 255.7 75.5 252.0 75.4Z"/>
<path fill="#45444a" stroke-width="1.0" d="M256.2 73.0 255.7 75.5 256.3 78.8 262.1 77.1 261.4 74.9 256.3 72.8Z"/>
<path fill="#45444a" stroke-width="1.0" d="M263.2 77.5 265.0 81.3 265.7 80.8 263.8 76.8Z"/>
<path fill="#db4a0f" stroke-width="1.0" d="M238.8 77.8 237.2 74.1 236.5 74.2 233.7 81.3 234.8 82.3 238.7 79.6Z"/>
<path fill="#f26c1d" stroke-width="1.0" d="M244.3 80.1 245.4 76.7 238.8 77.8 238.7 79.6 241.6 82.1Z"/>
<path fill="#1a0a08" stroke-width="1.0" d="M247.8 77.3 249.6 82.3 255.6 81.7 255.7 80.7 250.1 77.3Z"/>
<path fill="#6a6ee0" stroke-width="1.0" d="M265.0 81.3 263.2 77.5 262.1 77.1 256.3 78.8 255.7 80.7 255.6 81.7 255.9 82.3 263.6 82.1 265.0 81.5Z"/>
<path fill="#e65915" stroke-width="1.0" d="M247.0 82.5 244.3 80.1 241.6 82.1 241.8 83.7Z"/>
<path fill="#1a0a08" stroke-width="1.0" d="M247.0 76.7 245.6 76.5 245.4 76.7 244.3 80.1 247.0 82.5 248.4 83.3 249.6 82.3 247.8 77.3Z"/>
<path fill="#45444a" stroke-width="1.0" d="M265.0 81.3 265.0 81.5 265.6 82.3 266.6 83.2 266.7 83.2 266.7 83.0 265.7 80.8Z"/>
<path fill="#fb992d" stroke-width="1.0" d="M233.0 85.8 234.8 83.6 234.8 82.3 233.7 81.3 232.0 85.6Z"/>
<path fill="#c93609" stroke-width="1.0" d="M241.8 83.7 241.6 82.1 238.7 79.6 234.8 82.3 234.8 83.6 238.1 85.7 241.3 84.8 241.7 84.2Z"/>
<path fill="#1a0a08" stroke-width="1.0" d="M246.6 85.9 248.0 84.4 248.4 83.3 247.0 82.5 241.8 83.7 241.7 84.2Z"/>
<path fill="#45444a" stroke-width="1.0" d="M255.9 82.3 256.1 83.7 256.4 84.4 258.2 86.8 261.5 88.3 263.6 82.1Z"/>
<path fill="#1a0a08" stroke-width="1.0" d="M233.1 87.6 233.0 85.8 232.0 85.6 231.0 88.0 230.8 89.2Z"/>
<path fill="#f78425" stroke-width="1.0" d="M234.8 83.6 233.0 85.8 233.1 87.6 234.5 89.2 237.3 90.2 237.7 89.3 238.1 85.7Z"/>
<path fill="#ed6319" stroke-width="1.0" d="M241.3 84.8 238.1 85.7 237.7 89.3 240.7 88.2 241.5 85.7Z"/>
<path fill="#7a0403" stroke-width="1.0" d="M246.6 86.2 246.6 85.9 241.7 84.2 241.3 84.8 241.5 85.7 244.1 89.2Z"/>
<path fill="#1a0a08" stroke-width="1.0" d="M246.6 86.2 249.7 91.2 250.6 91.0 251.2 87.4 248.0 84.4 246.6 85.9Z"/>
<path fill="#7a0403" stroke-width="1.0" d="M248.0 84.4 251.2 87.4 256.1 83.7 255.9 82.3 255.6 81.7 249.6 82.3 248.4 83.3Z"/>
<path fill="#45444a" stroke-width="1.0" d="M265.0 81.5 263.6 82.1 261.5 88.3 262.1 89.0 264.1 88.3 265.6 82.3Z"/>
<path fill="#45444a" stroke-width="1.0" d="M265.6 82.3 264.1 88.3 266.4 88.3 266.7 83.4 266.6 83.2Z"/>
<path fill="#f1691b" stroke-width="1.0" d="M240.7 88.2 237.7 89.3 237.3 90.2 237.8 91.5 238.1 91.9 242.2 90.2Z"/>
<path fill="#a72006" stroke-width="1.0" d="M241.5 85.7 240.7 88.2 242.2 90.2 243.9 90.3 244.1 89.2Z"/>
<path fill="#840a03" stroke-width="1.0" d="M243.9 90.3 244.8 91.8 245.7 92.1 248.9 91.7 249.7 91.2 246.6 86.2 244.1 89.2Z"/>
<path fill="#1a0a08" stroke-width="1.0" d="M251.9 91.5 252.8 91.4 256.4 84.4 256.1 83.7 251.2 87.4 250.6 91.0Z"/>
<path fill="#e15212" stroke-width="1.0" d="M255.9 92.2 258.2 86.8 256.4 84.4 252.8 91.4Z"/>
<path fill="#f57921" stroke-width="1.0" d="M232.0 93.2 234.5 89.2 233.1 87.6 230.8 89.2 230.3 92.4Z"/>
<path fill="#7a0403" stroke-width="1.0" d="M234.5 89.2 232.0 93.2 232.1 93.3 232.5 93.5 237.8 91.5 237.3 90.2Z"/>
<path fill="#f57b22" stroke-width="1.0" d="M242.2 90.2 238.1 91.9 238.2 92.4 243.4 93.3 244.8 91.8 243.9 90.3Z"/>
<path fill="#45444a" stroke-width="1.0" d="M261.5 88.3 258.2 86.8 255.9 92.2 256.7 93.0 262.1 91.1 262.1 89.0Z"/>
<path fill="#45444a" stroke-width="1.0" d="M262.1 89.0 262.1 91.1 262.9 92.6 266.3 91.7 266.4 88.3 264.1 88.3Z"/>
<path fill="#1a0a08" stroke-width="1.0" d="M229.4 99.4 229.7 99.3 232.1 93.3 232.0 93.2 230.3 92.4 229.4 99.0Z"/>
<path fill="#d8450d" stroke-width="1.0" d="M237.8 91.5 232.5 93.5 233.1 94.2 235.0 94.7 238.2 92.5 238.2 92.4 238.1 91.9Z"/>
<path fill="#bb2d08" stroke-width="1.0" d="M237.5 98.0 237.7 98.0 238.7 94.8 238.2 92.5 235.0 94.7 236.2 97.6Z"/>
<path fill="#931405" stroke-width="1.0" d="M238.2 92.4 238.2 92.5 238.7 94.8 242.5 95.5 243.4 93.3Z"/>
<path fill="#f57a22" stroke-width="1.0" d="M243.7 97.8 246.1 96.9 245.7 92.1 244.8 91.8 243.4 93.3 242.5 95.5 243.3 97.5Z"/>
<path fill="#8c0f04" stroke-width="1.0" d="M248.2 97.1 248.8 96.5 248.9 91.7 245.7 92.1 246.1 96.9 247.2 97.1Z"/>
<path fill="#d6420c" stroke-width="1.0" d="M248.9 91.7 248.8 96.5 252.2 96.3 251.9 91.5 250.6 91.0 249.7 91.2Z"/>
<path fill="#f67d23" stroke-width="1.0" d="M252.2 96.3 252.7 96.8 254.6 97.3 256.9 94.5 256.7 93.0 255.9 92.2 252.8 91.4 251.9 91.5Z"/>
<path fill="#6a6ee0" stroke-width="1.0" d="M261.2 97.4 263.0 97.5 263.4 96.0 262.9 92.6 262.1 91.1 256.7 93.0 256.9 94.5Z"/>
<path fill="#6a6ee0" stroke-width="1.0" d="M263.4 96.0 266.1 94.7 266.3 91.7 262.9 92.6Z"/>
<path fill="#d13b09" stroke-width="1.0" d="M233.1 94.2 232.5 93.5 232.1 93.3 229.7 99.3 231.2 99.1 233.8 97.5Z"/>
<path fill="#f1681b" stroke-width="1.0" d="M235.0 94.7 233.1 94.2 233.8 97.5 236.2 97.6Z"/>
<path fill="#fb9b2e" stroke-width="1.0" d="M243.3 97.5 242.5 95.5 238.7 94.8 237.7 98.0 237.9 98.2Z"/>
<path fill="#45444a" stroke-width="1.0" d="M256.0 100.7 261.2 97.4 256.9 94.5 254.6 97.3Z"/>
<path fill="#45444a" stroke-width="1.0" d="M263.4 96.0 263.0 97.5 265.2 100.9 265.8 100.9 266.1 94.7Z"/>
<path fill="#f98e29" stroke-width="1.0" d="M233.8 97.5 231.2 99.1 234.6 101.2 237.5 98.0 236.2 97.6Z"/>
<path fill="#fa922a" stroke-width="1.0" d="M242.9 103.2 243.5 102.7 243.7 97.8 243.3 97.5 237.9 98.2 239.4 101.4Z"/>
<path fill="#ee6419" stroke-width="1.0" d="M243.5 102.7 246.4 102.6 247.2 97.1 246.1 96.9 243.7 97.8Z"/>
<path fill="#e85c16" stroke-width="1.0" d="M249.2 103.0 250.2 102.7 250.1 100.9 248.2 97.1 247.2 97.1 246.4 102.6Z"/>
<path fill="#1a0a08" stroke-width="1.0" d="M250.1 100.9 252.7 96.8 252.2 96.3 248.8 96.5 248.2 97.1Z"/>
<path fill="#f47520" stroke-width="1.0" d="M255.0 104.7 256.0 100.7 254.6 97.3 252.7 96.8 250.1 100.9 250.2 102.7Z"/>
<path fill="#f67c23" stroke-width="1.0" d="M229.8 101.4 231.1 102.9 235.0 103.0 234.6 101.2 231.2 99.1 229.7 99.3 229.4 99.4 229.3 99.5 229.2 100.2Z"/>
<path fill="#f6ae34" stroke-width="1.0" d="M237.9 98.2 237.7 98.0 237.5 98.0 234.6 101.2 235.0 103.0 235.6 103.9 239.4 101.4Z"/>
<path fill="#6a6ee0" stroke-width="1.0" d="M257.5 109.1 262.8 105.8 265.2 100.9 263.0 97.5 261.2 97.4 256.0 100.7 255.0 104.7Z"/>
<path fill="#f78124" stroke-width="1.1" d="M228.2 107.0 229.8 101.4 229.2 100.2 228.1 107.0Z"/>
<path fill="#ee641a" stroke-width="1.1" d="M231.6 106.6 231.1 102.9 229.8 101.4 228.2 107.0 229.7 108.1Z"/>
<path fill="#f88726" stroke-width="1.1" d="M234.8 106.4 235.6 104.6 235.6 103.9 235.0 103.0 231.1 102.9 231.6 106.6Z"/>
<path fill="#f3be39" stroke-width="1.1" d="M242.8 103.4 242.9 103.2 239.4 101.4 235.6 103.9 235.6 104.6 240.9 105.8Z"/>
<path fill="#f8a832" stroke-width="1.1" d="M240.9 105.8 235.6 104.6 234.8 106.4 236.0 108.4 239.7 109.6Z"/>
<path fill="#f78124" stroke-width="1.1" d="M245.0 107.1 247.9 107.0 249.2 103.0 246.4 102.6 243.5 102.7 242.9 103.2 242.8 103.4Z"/>
<path fill="#6a6ee0" stroke-width="1.1" d="M251.4 114.5 253.5 115.4 253.8 115.3 253.9 115.3 257.2 110.4 257.5 109.1 255.0 104.7 250.2 102.7 249.2 103.0 247.9 107.0Z"/>
<path fill="#6a6ee0" stroke-width="1.1" d="M265.2 100.9 262.8 105.8 264.1 106.5 265.7 103.0 265.8 100.9Z"/>
<path fill="#c9e137" stroke-width="1.1" d="M228.6 111.2 229.8 110.4 229.7 108.1 228.2 107.0 228.1 107.0 228.0 108.0 227.0 110.8Z"/>
<path fill="#eec439" stroke-width="1.1" d="M232.9 112.6 236.0 108.4 234.8 106.4 231.6 106.6 229.7 108.1 229.8 110.4Z"/>
<path fill="#fb9b2e" stroke-width="1.1" d="M244.7 110.7 245.0 107.1 242.8 103.4 240.9 105.8 239.7 109.6 239.9 110.1Z"/>
<path fill="#f7ab33" stroke-width="1.1" d="M248.6 114.1 251.4 114.5 247.9 107.0 245.0 107.1 244.7 110.7Z"/>
<path fill="#ddd437" stroke-width="1.1" d="M226.5 115.1 228.6 111.2 227.0 110.8 225.5 115.0Z"/>
<path fill="#b2e83a" stroke-width="1.1" d="M239.7 109.6 236.0 108.4 232.9 112.6 233.4 113.8 235.3 114.7 238.7 114.7 239.9 110.1Z"/>
<path fill="#3a9ef1" stroke-width="1.1" d="M262.8 105.8 257.5 109.1 257.2 110.4 261.5 112.3 264.1 106.5Z"/>
<path fill="#f6b135" stroke-width="1.1" d="M228.6 111.2 226.5 115.1 226.6 115.2 230.7 116.6 233.4 113.8 232.9 112.6 229.8 110.4Z"/>
<path fill="#f68024" stroke-width="1.1" d="M238.7 114.7 239.0 115.1 242.2 116.5 248.6 114.1 244.7 110.7 239.9 110.1Z"/>
<path fill="#e4ce38" stroke-width="1.1" d="M234.0 121.4 234.3 121.0 235.3 114.7 233.4 113.8 230.7 116.6 231.0 121.5Z"/>
<path fill="#1dd0c9" stroke-width="1.1" d="M253.9 115.3 259.0 117.9 261.5 112.3 257.2 110.4Z"/>
<path fill="#f3bb38" stroke-width="1.1" d="M223.8 120.5 226.7 120.6 226.6 115.2 226.5 115.1 225.5 115.0 223.6 120.3Z"/>
<path fill="#c8e137" stroke-width="1.1" d="M231.0 121.5 230.7 116.6 226.6 115.2 226.7 120.6 227.0 120.8 230.6 121.8Z"/>
<path fill="#e1d137" stroke-width="1.1" d="M237.8 119.2 239.0 115.1 238.7 114.7 235.3 114.7 234.3 121.0Z"/>
<path fill="#fb982d" stroke-width="1.1" d="M242.3 119.9 242.2 116.5 239.0 115.1 237.8 119.2 239.8 121.0 240.3 121.1Z"/>
<path fill="#fa8f29" stroke-width="1.1" d="M246.1 123.3 246.7 123.3 253.5 115.4 251.4 114.5 248.6 114.1 242.2 116.5 242.3 119.9Z"/>
<path fill="#f7ab33" stroke-width="1.1" d="M222.8 122.9 223.8 120.5 223.6 120.3 222.6 122.9Z"/>
<path fill="#f98c28" stroke-width="1.1" d="M236.7 124.1 239.8 121.0 237.8 119.2 234.3 121.0 234.0 121.4 236.6 124.0Z"/>
<path fill="#fb9c2e" stroke-width="1.1" d="M241.5 126.1 246.1 123.3 242.3 119.9 240.3 121.1Z"/>
<path fill="#39a0f1" stroke-width="1.1" d="M253.9 115.3 253.8 115.3 256.5 127.4 256.7 123.0 259.0 117.9Z"/>
<path fill="#f5b737" stroke-width="1.1" d="M223.6 125.6 222.8 122.9 222.6 122.9 221.1 127.2Z"/>
<path fill="#f4b937" stroke-width="1.1" d="M223.6 125.6 224.8 125.8 227.0 120.8 226.7 120.6 223.8 120.5 222.8 122.9Z"/>
<path fill="#f3bf39" stroke-width="1.1" d="M227.0 120.8 224.8 125.8 228.8 128.3 229.9 126.4 230.6 121.8Z"/>
<path fill="#f8a832" stroke-width="1.1" d="M234.0 121.4 231.0 121.5 230.6 121.8 229.9 126.4 234.9 126.6 236.6 124.0Z"/>
<path fill="#e95d17" stroke-width="1.1" d="M241.4 126.2 241.5 126.1 240.3 121.1 239.8 121.0 236.7 124.1 239.7 126.2Z"/>
<path fill="#26bedd" stroke-width="1.1" d="M253.8 115.3 253.5 115.4 246.7 123.3 246.9 123.8 252.8 130.5 254.1 130.5 256.4 129.0 256.5 127.4Z"/>
<path fill="#f4731f" stroke-width="1.1" d="M239.7 126.2 236.7 124.1 236.6 124.0 234.9 126.6 235.4 128.9 235.8 129.1 238.8 127.3Z"/>
<path fill="#ea5f17" stroke-width="1.1" d="M241.4 126.2 242.3 128.7 245.7 128.3 246.9 123.8 246.7 123.3 246.1 123.3 241.5 126.1Z"/>
<path fill="#fa9d2e" stroke-width="1.1" d="M224.8 125.8 223.6 125.6 221.1 127.2 219.8 130.8 221.3 131.4 228.8 129.9 228.8 128.3Z"/>
<path fill="#fb962c" stroke-width="1.1" d="M234.9 126.6 229.9 126.4 228.8 128.3 228.8 129.9 229.6 131.2 230.8 130.8 235.4 128.9Z"/>
<path fill="#f88726" stroke-width="1.1" d="M235.8 129.1 237.2 131.7 237.4 132.0 238.7 131.3 238.8 127.3Z"/>
<path fill="#f1691b" stroke-width="1.1" d="M238.7 131.3 242.3 130.9 242.3 128.7 241.4 126.2 239.7 126.2 238.8 127.3Z"/>
<path fill="#d33e0b" stroke-width="1.1" d="M242.3 128.7 242.3 130.9 243.8 132.8 247.6 131.9 245.7 128.3Z"/>
<path fill="#1dd1c8" stroke-width="1.1" d="M247.6 131.9 249.9 132.1 252.8 130.5 246.9 123.8 245.7 128.3Z"/>
<path fill="#f78425" stroke-width="1.1" d="M230.8 130.8 229.6 131.2 229.9 133.4 237.1 133.5 237.4 132.0 237.2 131.7Z"/>
<path fill="#f1691b" stroke-width="1.1" d="M235.4 128.9 230.8 130.8 237.2 131.7 235.8 129.1Z"/>
<path fill="#f78224" stroke-width="1.1" d="M229.9 133.4 229.6 131.2 228.8 129.9 221.3 131.4 224.3 136.6 229.3 137.0Z"/>
<path fill="#ef661a" stroke-width="1.1" d="M237.8 135.2 237.1 133.5 229.9 133.4 229.3 137.0 229.7 137.9 230.0 138.0Z"/>
<path fill="#f98e29" stroke-width="1.1" d="M237.4 132.0 237.1 133.5 237.8 135.2 239.6 137.0 242.3 136.4 243.8 132.8 242.3 130.9 238.7 131.3Z"/>
<path fill="#f88726" stroke-width="1.1" d="M220.2 138.0 222.5 138.0 224.3 136.6 221.3 131.4 219.8 130.8 219.0 133.0 217.9 135.4Z"/>
<path fill="#fa9e2f" stroke-width="1.1" d="M234.2 141.2 237.0 142.2 239.6 137.0 237.8 135.2 230.0 138.0Z"/>
<path fill="#24c0db" stroke-width="1.1" d="M243.8 132.8 242.3 136.4 244.5 138.4 248.2 139.2 249.9 132.1 247.6 131.9Z"/>
<path fill="#29bae1" stroke-width="1.1" d="M250.9 142.5 254.6 141.5 255.4 140.1 254.1 130.5 252.8 130.5 249.9 132.1 248.2 139.2Z"/>
<path fill="#38a3f1" stroke-width="1.1" d="M255.4 140.1 255.9 140.0 256.4 129.0 254.1 130.5Z"/>
<path fill="#f9a130" stroke-width="1.1" d="M215.6 141.5 216.0 141.5 216.5 140.0 216.2 139.2 215.3 141.2Z"/>
<path fill="#f7ad33" stroke-width="1.1" d="M220.2 138.0 217.9 135.4 216.2 139.2 216.5 140.0 219.5 139.3Z"/>
<path fill="#f5b536" stroke-width="1.1" d="M229.3 137.0 224.3 136.6 222.5 138.0 223.0 142.3 225.2 143.5 227.2 142.8 229.7 137.9Z"/>
<path fill="#f9a531" stroke-width="1.1" d="M219.5 139.3 216.5 140.0 216.0 141.5 217.7 144.2 219.9 142.7Z"/>
<path fill="#f6af34" stroke-width="1.1" d="M220.8 142.7 223.0 142.3 222.5 138.0 220.2 138.0 219.5 139.3 219.9 142.7Z"/>
<path fill="#f0c239" stroke-width="1.1" d="M238.0 144.2 242.4 143.9 244.5 138.4 242.3 136.4 239.6 137.0 237.0 142.2Z"/>
<path fill="#3d99f2" stroke-width="1.1" d="M243.3 144.4 249.4 145.2 250.9 142.5 248.2 139.2 244.5 138.4 242.4 143.9Z"/>
<path fill="#1fc8d4" stroke-width="1.1" d="M254.6 141.5 255.7 142.9 255.9 140.0 255.4 140.1Z"/>
<path fill="#f3bf39" stroke-width="1.1" d="M213.5 147.0 216.2 146.2 214.3 143.4 212.9 146.5Z"/>
<path fill="#f0c239" stroke-width="1.1" d="M216.2 146.2 217.2 146.0 217.7 144.2 216.0 141.5 215.6 141.5 215.1 141.7 214.3 143.4Z"/>
<path fill="#f5b536" stroke-width="1.1" d="M221.8 145.9 220.8 142.7 219.9 142.7 217.7 144.2 217.2 146.0 219.1 148.1Z"/>
<path fill="#faa02f" stroke-width="1.1" d="M224.4 145.2 225.2 143.5 223.0 142.3 220.8 142.7 221.8 145.9Z"/>
<path fill="#f57821" stroke-width="1.1" d="M229.7 137.9 227.2 142.8 229.2 145.7 230.6 145.8 234.2 141.2 230.0 138.0Z"/>
<path fill="#f67e23" stroke-width="1.1" d="M237.8 144.7 238.0 144.2 237.0 142.2 234.2 141.2 230.6 145.8 232.0 146.8Z"/>
<path fill="#f7ad34" stroke-width="1.1" d="M219.3 148.8 222.2 150.3 224.8 149.3 224.4 145.2 221.8 145.9 219.1 148.1Z"/>
<path fill="#f7aa32" stroke-width="1.1" d="M224.9 149.3 227.7 149.6 229.2 145.7 227.2 142.8 225.2 143.5 224.4 145.2 224.8 149.3Z"/>
<path fill="#1dd1c7" stroke-width="1.1" d="M243.3 144.4 242.4 143.9 238.0 144.2 237.8 144.7 238.2 150.9 242.9 153.7 243.3 153.8Z"/>
<path fill="#23c2da" stroke-width="1.1" d="M249.4 145.2 243.3 144.4 243.3 153.8 243.5 153.8 243.4 153.0 249.4 148.1Z"/>
<path fill="#1fd8bc" stroke-width="1.1" d="M254.6 141.5 250.9 142.5 249.4 145.2 249.4 148.1 255.7 143.0 255.7 142.9Z"/>
<path fill="#f6b135" stroke-width="1.1" d="M213.2 148.2 213.5 147.0 212.9 146.5 211.4 149.8Z"/>
<path fill="#f3bc38" stroke-width="1.1" d="M217.2 146.0 216.2 146.2 213.5 147.0 213.2 148.2 215.6 152.9 215.7 152.9 216.4 152.9 219.3 148.8 219.1 148.1Z"/>
<path fill="#f9a531" stroke-width="1.1" d="M231.6 153.9 232.8 153.0 232.0 146.8 230.6 145.8 229.2 145.7 227.7 149.6Z"/>
<path fill="#f8a932" stroke-width="1.1" d="M232.8 153.0 238.2 150.9 237.8 144.7 232.0 146.8Z"/>
<path fill="#d9d836" stroke-width="1.1" d="M215.6 152.9 213.2 148.2 211.4 149.8 210.7 151.5Z"/>
<path fill="#f5b636" stroke-width="1.1" d="M216.4 152.9 218.8 155.2 220.3 154.7 222.2 152.2 222.2 150.3 219.3 148.8Z"/>
<path fill="#e7ca38" stroke-width="1.1" d="M222.2 152.2 225.9 155.7 224.9 149.3 224.8 149.3 222.2 150.3Z"/>
<path fill="#fb982d" stroke-width="1.1" d="M225.9 155.7 226.1 155.8 230.8 156.0 231.6 153.9 227.7 149.6 224.9 149.3Z"/>
<path fill="#b6e739" stroke-width="1.1" d="M209.9 153.8 209.7 153.3 207.6 156.1Z"/>
<path fill="#f5b235" stroke-width="1.1" d="M209.9 153.8 212.4 156.8 215.7 152.9 215.6 152.9 210.7 151.5 210.0 153.0 209.7 153.3Z"/>
<path fill="#f9a230" stroke-width="1.1" d="M222.2 152.2 220.3 154.7 223.0 156.9 224.1 157.1 226.1 155.8 225.9 155.7Z"/>
<path fill="#bae639" stroke-width="1.1" d="M207.6 158.5 212.4 158.1 212.4 156.8 209.9 153.8 207.6 156.1 206.3 157.6Z"/>
<path fill="#e5cd38" stroke-width="1.1" d="M212.4 158.1 212.6 158.4 216.4 159.6 218.1 158.7 218.8 155.2 216.4 152.9 215.7 152.9 212.4 156.8Z"/>
<path fill="#e5cd38" stroke-width="1.1" d="M218.8 155.2 218.1 158.7 219.2 159.1 223.0 156.9 220.3 154.7Z"/>
<path fill="#1dcad2" stroke-width="1.1" d="M238.2 150.9 232.8 153.0 231.6 153.9 230.8 156.0 231.7 159.3 238.7 157.7 242.9 153.7Z"/>
<path fill="#cce036" stroke-width="1.1" d="M203.9 161.2 205.2 159.0 203.4 161.3Z"/>
<path fill="#fb942b" stroke-width="1.1" d="M223.8 159.2 224.1 157.1 223.0 156.9 219.2 159.1 221.4 161.0Z"/>
<path fill="#d9460d" stroke-width="1.1" d="M231.7 159.3 230.8 156.0 226.1 155.8 224.1 157.1 223.8 159.2 225.6 161.2 227.2 161.7 231.7 161.1Z"/>
<path fill="#2bb7e4" stroke-width="1.1" d="M238.7 157.7 231.7 159.3 231.7 161.1 233.5 165.6 233.6 165.8 238.8 163.7 239.2 161.6Z"/>
<path fill="#1ed3c4" stroke-width="1.1" d="M243.3 153.8 242.9 153.7 238.7 157.7 239.2 161.6 243.8 156.6 243.5 153.8Z"/>
<path fill="#ddd437" stroke-width="1.1" d="M207.6 158.5 206.3 157.6 205.2 159.0 203.9 161.2 207.1 162.9Z"/>
<path fill="#e7cb38" stroke-width="1.1" d="M207.3 163.2 207.6 163.5 209.3 163.9 210.9 163.8 211.1 163.1 212.6 158.4 212.4 158.1 207.6 158.5 207.1 162.9Z"/>
<path fill="#b9e639" stroke-width="1.1" d="M216.8 162.3 216.4 159.6 212.6 158.4 211.1 163.1Z"/>
<path fill="#cbe037" stroke-width="1.1" d="M219.2 159.1 218.1 158.7 216.4 159.6 216.8 162.3 217.0 163.2 220.2 165.3 221.3 165.3 221.7 163.5 221.4 161.0Z"/>
<path fill="#fb962c" stroke-width="1.1" d="M221.7 163.5 225.6 161.2 223.8 159.2 221.4 161.0Z"/>
<path fill="#1ed4c2" stroke-width="1.1" d="M239.2 161.6 238.8 163.7 243.7 164.0 244.1 159.5 243.8 156.6Z"/>
<path fill="#39e894" stroke-width="1.1" d="M243.7 164.0 244.6 165.0 244.1 159.5Z"/>
<path fill="#74f160" stroke-width="1.1" d="M207.3 163.2 207.1 162.9 203.9 161.2 203.4 161.3 202.0 163.0 202.2 165.1Z"/>
<path fill="#8fef4c" stroke-width="1.1" d="M203.8 168.9 204.4 169.0 207.6 163.5 207.3 163.2 202.2 165.1 202.2 165.2Z"/>
<path fill="#c2e338" stroke-width="1.1" d="M210.9 163.8 213.0 166.3 217.0 163.2 216.8 162.3 211.1 163.1Z"/>
<path fill="#bde539" stroke-width="1.1" d="M221.3 165.3 222.9 166.7 227.2 161.7 225.6 161.2 221.7 163.5Z"/>
<path fill="#bae639" stroke-width="1.1" d="M227.2 161.7 222.9 166.7 223.3 167.4 233.5 165.6 231.7 161.1Z"/>
<path fill="#93ef4a" stroke-width="1.1" d="M202.7 169.7 203.8 168.9 202.2 165.2 202.7 169.7Z"/>
<path fill="#84f154" stroke-width="1.1" d="M204.9 169.3 208.0 168.7 209.3 163.9 207.6 163.5 204.4 169.0Z"/>
<path fill="#91ef4b" stroke-width="1.1" d="M209.3 163.9 208.0 168.7 209.4 169.1 213.2 167.5 213.0 166.3 210.9 163.8Z"/>
<path fill="#7ff158" stroke-width="1.1" d="M213.2 167.5 213.6 167.9 215.8 169.1 220.2 165.3 217.0 163.2 213.0 166.3Z"/>
<path fill="#36a6f0" stroke-width="1.1" d="M234.0 168.5 244.4 169.3 244.9 167.9 244.6 165.0 243.7 164.0 238.8 163.7 233.6 165.8Z"/>
<path fill="#dad836" stroke-width="1.1" d="M221.3 165.3 220.2 165.3 215.8 169.1 216.7 171.0 223.0 173.6 223.3 167.4 222.9 166.7Z"/>
<path fill="#fa912a" stroke-width="1.1" d="M233.1 172.6 233.6 172.1 234.0 168.5 233.6 165.8 233.5 165.6 223.3 167.4 223.0 173.6 223.6 174.7 228.5 174.3Z"/>
<path fill="#1dd1c8" stroke-width="1.1" d="M244.4 169.3 244.9 175.0 245.7 175.1 244.9 167.9Z"/>
<path fill="#2fe59f" stroke-width="1.1" d="M209.4 169.1 208.0 168.7 204.9 169.3 207.2 173.5 208.2 174.1 210.0 173.3Z"/>
<path fill="#73f161" stroke-width="1.1" d="M213.6 167.9 213.2 167.5 209.4 169.1 210.0 173.3 211.1 173.3Z"/>
<path fill="#5bf074" stroke-width="1.1" d="M214.2 174.3 216.7 171.0 215.8 169.1 213.6 167.9 211.1 173.3 213.1 174.4Z"/>
<path fill="#1ecad2" stroke-width="1.1" d="M244.9 175.0 244.4 169.3 234.0 168.5 233.6 172.1 241.1 175.7 243.9 175.7Z"/>
<path fill="#90ef4c" stroke-width="1.1" d="M202.7 169.7 202.7 169.7 203.2 175.2 203.4 175.0Z"/>
<path fill="#bce539" stroke-width="1.1" d="M203.8 168.9 202.7 169.7 203.4 175.0 207.2 173.5 204.9 169.3 204.4 169.0Z"/>
<path fill="#f2c039" stroke-width="1.1" d="M223.0 173.6 216.7 171.0 214.2 174.3 217.0 177.2 222.1 177.7 223.6 174.7Z"/>
<path fill="#99ee46" stroke-width="1.1" d="M208.1 178.2 208.2 174.1 207.2 173.5 203.4 175.0 203.2 175.2 203.6 178.7Z"/>
<path fill="#80f157" stroke-width="1.1" d="M213.1 174.4 211.1 173.3 210.0 173.3 208.2 174.1 208.1 178.2 209.4 179.6 212.4 176.8Z"/>
<path fill="#83f155" stroke-width="1.1" d="M214.9 178.9 217.0 177.2 214.2 174.3 213.1 174.4 212.4 176.8 214.7 178.9Z"/>
<path fill="#88f051" stroke-width="1.1" d="M214.7 178.9 212.4 176.8 209.4 179.6 209.5 179.8 210.5 180.9Z"/>
<path fill="#bfe438" stroke-width="1.1" d="M222.1 178.1 222.1 177.7 217.0 177.2 214.9 178.9 215.8 182.8 219.2 184.7Z"/>
<path fill="#f7aa33" stroke-width="1.1" d="M223.6 174.7 222.1 177.7 222.1 178.1 228.3 183.4 230.2 183.9 228.5 174.3Z"/>
<path fill="#1cccd0" stroke-width="1.1" d="M230.2 183.9 230.7 184.2 234.3 181.7 233.1 172.6 228.5 174.3Z"/>
<path fill="#1ed5c1" stroke-width="1.1" d="M234.3 181.7 236.9 182.1 241.1 175.7 233.6 172.1 233.1 172.6Z"/>
<path fill="#85f154" stroke-width="1.1" d="M208.1 178.2 203.6 178.7 203.8 181.4 206.8 182.2 209.5 179.8 209.4 179.6Z"/>
<path fill="#88f052" stroke-width="1.1" d="M214.9 178.9 214.7 178.9 210.5 180.9 211.2 182.6 215.8 182.8Z"/>
<path fill="#39a0f1" stroke-width="1.1" d="M241.1 175.7 236.9 182.1 240.1 185.2 240.8 185.2 243.9 180.5 243.9 175.7Z"/>
<path fill="#35aaf0" stroke-width="1.1" d="M244.9 175.0 243.9 175.7 243.9 180.5 246.4 182.1 245.7 175.1Z"/>
<path fill="#6df166" stroke-width="1.1" d="M206.8 182.2 203.8 181.4 204.4 187.4 204.6 187.6 206.1 187.5Z"/>
<path fill="#2ee4a0" stroke-width="1.1" d="M210.5 180.9 209.5 179.8 206.8 182.2 206.1 187.5 207.8 187.8 210.6 184.9 211.2 182.6Z"/>
<path fill="#b1e93a" stroke-width="1.1" d="M219.4 186.8 219.2 184.7 215.8 182.8 211.2 182.6 210.6 184.9 217.4 188.2 219.0 187.2Z"/>
<path fill="#f8a832" stroke-width="1.1" d="M219.7 186.9 222.7 186.4 228.3 183.4 222.1 178.1 219.2 184.7 219.4 186.8Z"/>
<path fill="#31b0eb" stroke-width="1.1" d="M243.9 180.5 240.8 185.2 244.0 188.2 246.5 183.0 246.4 182.1Z"/>
<path fill="#a7ec3c" stroke-width="1.1" d="M210.6 184.9 207.8 187.8 210.8 191.7 211.5 192.1 216.8 188.9 217.4 188.2Z"/>
<path fill="#f4ba38" stroke-width="1.1" d="M228.3 183.4 222.7 186.4 231.0 189.3 230.7 184.2 230.2 183.9Z"/>
<path fill="#27bdde" stroke-width="1.1" d="M231.7 191.5 234.1 191.3 240.1 185.2 236.9 182.1 234.3 181.7 230.7 184.2 231.0 189.3 231.5 191.2Z"/>
<path fill="#b5e73a" stroke-width="1.1" d="M231.5 191.2 231.0 189.3 222.7 186.4 219.7 186.9 222.8 190.2Z"/>
<path fill="#37a5f0" stroke-width="1.1" d="M240.1 185.2 234.1 191.3 238.4 193.3 241.9 192.6 244.0 188.2 240.8 185.2Z"/>
<path fill="#91ef4b" stroke-width="1.1" d="M210.8 191.7 207.8 187.8 206.1 187.5 204.6 187.6 204.5 187.8 205.0 193.0 205.1 194.4Z"/>
<path fill="#fa9f2f" stroke-width="1.1" d="M220.2 194.0 222.9 190.7 222.8 190.2 219.7 186.9 219.4 186.8 219.0 187.2Z"/>
<path fill="#1fd9ba" stroke-width="1.1" d="M228.2 197.7 229.9 196.5 231.7 191.5 231.5 191.2 222.8 190.2 222.9 190.7 223.7 196.4 226.9 197.9Z"/>
<path fill="#8af050" stroke-width="1.1" d="M211.3 196.1 212.0 194.8 211.5 192.1 210.8 191.7 205.1 194.4 205.6 199.1Z"/>
<path fill="#75f160" stroke-width="1.1" d="M216.8 188.9 211.5 192.1 212.0 194.8 215.2 195.9 217.7 194.2Z"/>
<path fill="#b7e639" stroke-width="1.1" d="M220.2 194.0 219.0 187.2 217.4 188.2 216.8 188.9 217.7 194.2 220.3 195.2Z"/>
<path fill="#84f154" stroke-width="1.1" d="M221.4 196.4 223.7 196.4 222.9 190.7 220.2 194.0 220.3 195.2Z"/>
<path fill="#67f16a" stroke-width="1.1" d="M217.7 194.2 215.2 195.9 217.2 198.6 219.0 198.6 221.4 196.4 220.3 195.2Z"/>
<path fill="#26bedd" stroke-width="1.1" d="M235.6 200.6 238.5 194.5 238.4 193.3 234.1 191.3 231.7 191.5 229.9 196.5Z"/>
<path fill="#35a9f0" stroke-width="1.1" d="M238.5 194.5 235.6 200.6 236.9 202.1 239.0 202.4 239.3 198.0 239.7 197.1Z"/>
<path fill="#2fb2e9" stroke-width="1.1" d="M238.4 193.3 238.5 194.5 239.7 197.1 241.9 192.6Z"/>
<path fill="#2ce4a2" stroke-width="1.1" d="M209.1 204.9 212.9 200.8 211.3 196.1 205.6 199.1 205.8 201.0Z"/>
<path fill="#6af168" stroke-width="1.1" d="M215.2 195.9 212.0 194.8 211.3 196.1 212.9 200.8 215.2 201.0 217.2 198.6Z"/>
<path fill="#4bef80" stroke-width="1.1" d="M219.0 198.6 220.3 202.5 226.8 198.1 226.9 197.9 223.7 196.4 221.4 196.4Z"/>
<path fill="#59f075" stroke-width="1.1" d="M217.2 198.6 215.2 201.0 216.7 203.6 218.5 203.7 220.2 203.1 220.3 202.5 219.0 198.6Z"/>
<path fill="#63f06e" stroke-width="1.1" d="M220.3 202.5 220.2 203.1 223.7 206.2 226.8 198.1Z"/>
<path fill="#34abef" stroke-width="1.1" d="M232.5 206.9 236.9 202.1 235.6 200.6 229.9 196.5 228.2 197.7 229.7 204.4Z"/>
<path fill="#56f077" stroke-width="1.1" d="M205.8 201.0 206.5 208.3 209.2 205.3 209.1 204.9Z"/>
<path fill="#42ec8a" stroke-width="1.1" d="M209.1 204.9 209.2 205.3 211.9 206.8 214.2 206.9 216.7 203.6 215.2 201.0 212.9 200.8Z"/>
<path fill="#23c2d9" stroke-width="1.1" d="M223.7 206.2 224.0 206.9 224.0 206.9 229.7 204.4 228.2 197.7 226.9 197.9 226.8 198.1Z"/>
<path fill="#50f07c" stroke-width="1.1" d="M218.5 203.7 216.7 203.6 214.2 206.9 217.8 210.0 219.0 209.3Z"/>
<path fill="#40eb8c" stroke-width="1.1" d="M223.7 206.2 220.2 203.1 218.5 203.7 219.0 209.3 222.9 208.4 224.0 206.9Z"/>
<path fill="#33aded" stroke-width="1.1" d="M232.5 208.7 232.5 206.9 229.7 204.4 224.0 206.9 228.7 209.6 231.9 209.0Z"/>
<path fill="#1dd2c5" stroke-width="1.1" d="M236.9 202.1 232.5 206.9 232.5 208.7 237.0 212.6 237.0 212.6 238.3 212.4 239.0 202.4Z"/>
<path fill="#39e993" stroke-width="1.1" d="M208.9 213.8 212.0 213.5 211.9 206.8 209.2 205.3 206.5 208.3 207.0 213.0 206.9 213.2Z"/>
<path fill="#5af075" stroke-width="1.1" d="M214.2 206.9 211.9 206.8 212.0 213.5 213.4 214.2 217.1 212.9 217.8 210.0Z"/>
<path fill="#71f163" stroke-width="1.1" d="M222.9 208.4 219.0 209.3 217.8 210.0 217.1 212.9 220.7 216.5 224.3 213.6Z"/>
<path fill="#5bf073" stroke-width="1.1" d="M224.0 206.9 224.0 206.9 222.9 208.4 224.3 213.6 226.3 213.9 228.7 209.6Z"/>
<path fill="#2cb6e5" stroke-width="1.1" d="M228.7 209.6 226.3 213.9 228.9 216.0 231.9 209.0Z"/>
<path fill="#23c2d9" stroke-width="1.1" d="M228.9 216.0 230.2 218.2 237.0 212.6 232.5 208.7 231.9 209.0Z"/>
<path fill="#47ee84" stroke-width="1.1" d="M206.2 219.2 207.7 219.2 209.2 217.9 208.9 213.8 206.9 213.2 205.2 217.8Z"/>
<path fill="#53f07a" stroke-width="1.1" d="M212.0 213.5 208.9 213.8 209.2 217.9 212.6 219.4 213.5 219.3 213.4 214.2Z"/>
<path fill="#41ec8b" stroke-width="1.1" d="M217.1 212.9 213.4 214.2 213.5 219.3 216.0 221.5 220.7 221.8 220.7 216.5Z"/>
<path fill="#1ccbd1" stroke-width="1.1" d="M226.3 213.9 224.3 213.6 220.7 216.5 220.7 221.8 222.8 224.2 226.4 225.7 229.9 222.1 230.2 218.2 228.9 216.0Z"/>
<path fill="#49ef82" stroke-width="1.1" d="M204.9 221.6 205.6 221.1 206.2 219.2 205.2 217.8 203.9 221.5Z"/>
<path fill="#80f157" stroke-width="1.1" d="M209.2 217.9 207.7 219.2 209.5 221.7 212.6 219.4Z"/>
<path fill="#4586f4" stroke-width="1.1" d="M229.9 222.1 236.4 222.3 237.0 212.6 237.0 212.6 230.2 218.2Z"/>
<path fill="#2cb5e5" stroke-width="1.1" d="M236.4 222.3 236.9 222.5 238.3 213.0 238.3 212.4 237.0 212.6Z"/>
<path fill="#3feb8e" stroke-width="1.1" d="M209.5 221.7 207.7 219.2 206.2 219.2 205.6 221.1 208.7 223.3 209.1 223.0Z"/>
<path fill="#70f164" stroke-width="1.1" d="M216.0 221.5 213.5 219.3 212.6 219.4 209.5 221.7 209.1 223.0 212.6 224.3 215.7 221.8Z"/>
<path fill="#4bef80" stroke-width="1.1" d="M204.1 227.0 204.7 226.5 204.9 221.6 203.9 221.5 202.5 225.2Z"/>
<path fill="#64f06d" stroke-width="1.1" d="M208.7 223.3 205.6 221.1 204.9 221.6 204.7 226.5 207.7 225.3Z"/>
<path fill="#94ee49" stroke-width="1.1" d="M212.6 224.3 209.1 223.0 208.7 223.3 207.7 225.3 211.5 228.4 211.9 228.5Z"/>
<path fill="#78f15d" stroke-width="1.1" d="M202.5 225.2 200.6 230.5 201.3 230.9 203.4 229.6 204.1 227.0Z"/>
<path fill="#87f053" stroke-width="1.1" d="M214.3 229.0 215.7 221.8 212.6 224.3 211.9 228.5 212.2 228.7Z"/>
<path fill="#92ef4a" stroke-width="1.1" d="M220.7 221.8 216.0 221.5 215.7 221.8 214.3 229.0 216.1 229.5 222.8 224.2Z"/>
<path fill="#34abef" stroke-width="1.1" d="M236.4 222.3 229.9 222.1 226.4 225.7 228.4 232.8 235.1 235.5 236.9 222.5Z"/>
<path fill="#7ef159" stroke-width="1.1" d="M207.7 225.3 204.7 226.5 204.1 227.0 203.4 229.6 206.3 230.9 211.5 228.4Z"/>
<path fill="#72f162" stroke-width="1.1" d="M201.3 230.9 200.6 230.5 199.5 233.5 201.0 232.6Z"/>
<path fill="#5cf073" stroke-width="1.1" d="M211.9 228.5 211.5 228.4 206.3 230.9 208.8 234.7 210.0 235.6 210.8 235.6 212.2 228.7Z"/>
<path fill="#7cf15a" stroke-width="1.1" d="M214.3 229.0 212.2 228.7 210.8 235.6 211.8 236.2 215.0 235.0 216.5 231.8 216.1 229.5Z"/>
<path fill="#1ccecc" stroke-width="1.1" d="M222.8 224.2 216.1 229.5 216.5 231.8 225.6 235.2 228.4 232.8 226.4 225.7Z"/>
<path fill="#8cf04f" stroke-width="1.1" d="M203.8 235.5 208.8 234.7 206.3 230.9 203.4 229.6 201.3 230.9 201.0 232.6 201.7 234.3Z"/>
<path fill="#77f15e" stroke-width="1.1" d="M215.0 235.0 220.9 238.7 224.7 236.3 225.6 235.2 216.5 231.8Z"/>
<path fill="#6ff164" stroke-width="1.1" d="M201.0 232.6 199.5 233.5 197.4 239.2 198.4 240.0 200.3 239.0 200.9 238.1 201.7 234.3Z"/>
<path fill="#9fed41" stroke-width="1.1" d="M200.9 238.1 205.5 238.9 203.8 235.5 201.7 234.3Z"/>
<path fill="#8fef4d" stroke-width="1.1" d="M205.5 238.9 205.8 239.2 206.4 239.2 210.0 235.6 208.8 234.7 203.8 235.5Z"/>
<path fill="#99ee46" stroke-width="1.1" d="M200.3 239.0 203.8 241.6 205.8 239.2 205.5 238.9 200.9 238.1Z"/>
<path fill="#7bf15b" stroke-width="1.1" d="M210.8 235.6 210.0 235.6 206.4 239.2 208.8 242.7 211.0 240.5 212.1 237.5 211.8 236.2Z"/>
<path fill="#5ff070" stroke-width="1.1" d="M212.1 237.5 218.0 243.3 220.9 238.7 215.0 235.0 211.8 236.2Z"/>
<path fill="#76f15f" stroke-width="1.1" d="M198.3 243.1 198.3 243.0 198.4 240.0 197.4 239.2 196.0 243.0 195.8 244.2Z"/>
<path fill="#75f160" stroke-width="1.1" d="M198.4 240.0 198.3 243.0 203.5 243.5 203.8 241.6 200.3 239.0Z"/>
<path fill="#82f155" stroke-width="1.1" d="M206.4 239.2 205.8 239.2 203.8 241.6 203.5 243.5 203.7 243.7 205.3 245.1 208.8 242.8 208.8 242.7Z"/>
<path fill="#20dbb5" stroke-width="1.1" d="M208.8 242.7 208.8 242.8 212.8 246.7 213.4 246.8 216.3 246.0 211.0 240.5Z"/>
<path fill="#2ae3a4" stroke-width="1.1" d="M211.0 240.5 216.3 246.0 217.5 245.9 218.0 243.3 212.1 237.5Z"/>
<path fill="#25bfdc" stroke-width="1.1" d="M228.4 232.8 225.6 235.2 224.7 236.3 226.1 242.8 231.4 244.5 234.2 241.3 235.1 235.5Z"/>
<path fill="#20dbb6" stroke-width="1.1" d="M203.7 243.7 203.5 243.5 198.3 243.0 198.3 243.1 199.4 245.8 200.3 246.3 201.0 246.0 201.1 246.6Z"/>
<path fill="#1ec8d3" stroke-width="1.1" d="M217.5 245.9 218.4 246.9 222.6 250.4 226.1 242.8 224.7 236.3 220.9 238.7 218.0 243.3Z"/>
<path fill="#2db5e6" stroke-width="1.1" d="M222.6 250.4 222.8 250.7 229.2 251.9 231.4 244.5 226.1 242.8Z"/>
<path fill="#22e0ad" stroke-width="1.1" d="M199.4 245.8 198.3 243.1 195.8 244.2 195.6 246.0 197.4 247.8 198.7 247.2Z"/>
<path fill="#31e59d" stroke-width="0.6" d="M202.3 249.4 201.1 247.0 201.4 250.6ZM199.4 245.8 198.7 247.2 200.3 246.3Z"/>
<path fill="#24e1aa" stroke-width="1.1" d="M202.3 249.4 205.6 248.0 205.3 245.1 203.7 243.7 201.1 246.6 201.1 247.0Z"/>
<path fill="#23c2d9" stroke-width="1.1" d="M208.8 242.8 205.3 245.1 205.6 248.0 206.3 248.3 212.8 246.7Z"/>
<path fill="#1dd2c5" stroke-width="0.6" d="M231.4 244.5 229.2 251.9 232.3 254.4 234.0 255.1 234.0 243.0 234.2 241.3Z"/>
<path fill="#7af15c" stroke-width="0.6" d="M195.6 246.0 194.5 254.2 196.7 256.9 196.7 256.9 197.0 256.7 197.0 248.0 197.4 247.8Z"/>
<path fill="#2ab9e2" stroke-width="0.6" d="M206.3 248.3 207.0 250.4 210.5 253.7 213.4 246.8 212.8 246.7Z"/>
<path fill="#40eb8c" stroke-width="0.6" d="M207.0 250.4 206.3 248.3 205.6 248.0 202.3 249.4 201.4 250.6 201.8 254.7 203.7 254.4Z"/>
<path fill="#1ccecc" stroke-width="0.6" d="M218.4 246.9 217.5 245.9 216.3 246.0 213.4 246.8 210.5 253.7 210.8 255.2 212.6 255.2Z"/>
<path fill="#20dab8" stroke-width="0.6" d="M221.3 253.5 222.8 250.7 222.6 250.4 218.4 246.9 212.6 255.2 214.8 255.6Z"/>
<path fill="#2de4a1" stroke-width="0.6" d="M196.2 257.7 196.7 256.9 194.5 254.2 194.1 257.2Z"/>
<path fill="#2ab8e3" stroke-width="0.6" d="M210.8 255.2 210.5 253.7 207.0 250.4 203.7 254.4 210.4 255.8Z"/>
<path fill="#4ff07d" stroke-width="0.6" d="M195.4 259.3 195.8 258.9 196.2 257.7 194.1 257.2 193.8 259.3Z"/>
<path fill="#20d9b8" stroke-width="0.6" d="M203.7 254.4 201.8 254.7 202.1 257.9 209.1 259.6 209.8 258.5 210.4 255.8Z"/>
<path fill="#2ab9e2" stroke-width="0.6" d="M221.2 261.3 221.3 253.5 214.8 255.6 216.8 261.3Z"/>
<path fill="#1fd8bb" stroke-width="0.6" d="M216.8 261.3 214.8 255.6 212.6 255.2 210.8 255.2 210.4 255.8 209.8 258.5 216.7 261.4Z"/>
<path fill="#2fb2e9" stroke-width="0.6" d="M223.0 263.3 232.3 254.4 229.2 251.9 222.8 250.7 221.3 253.5 221.2 261.3Z"/>
<path fill="#26e1a9" stroke-width="0.6" d="M195.4 259.3 193.8 259.3 193.4 262.5Z"/>
<path fill="#31e59c" stroke-width="0.6" d="M202.3 260.4 202.8 266.1 203.8 266.3 207.0 265.4 207.9 263.9ZM196.7 256.9 196.7 256.9 196.2 257.7 195.8 258.9 197.0 260.4 197.0 257.1Z"/>
<path fill="#27bdde" stroke-width="0.6" d="M207.9 263.9 208.6 263.2 209.1 259.6 202.1 257.9 202.3 260.4ZM196.7 256.9 197.0 257.1 197.0 256.7Z"/>
<path fill="#20dbb6" stroke-width="0.6" d="M209.8 258.5 209.1 259.6 208.6 263.2 213.9 264.9 216.7 261.4Z"/>
<path fill="#21c6d6" stroke-width="0.6" d="M234.0 264.2 234.0 255.1 232.3 254.4 223.0 263.3 223.6 265.3 232.1 265.8Z"/>
<path fill="#6b7bf0" stroke-width="0.6" d="M213.9 264.9 215.0 268.1 222.0 268.6 223.6 265.3 223.0 263.3 221.2 261.3 216.8 261.3 216.7 261.4Z"/>
<path fill="#29e2a5" stroke-width="0.6" d="M195.8 258.9 195.4 259.3 193.4 262.5 193.0 265.5 194.7 270.9 197.0 270.6 197.0 260.4Z"/>
<path fill="#6b7bf0" stroke-width="0.6" d="M208.6 263.2 207.9 263.9 207.0 265.4 209.2 270.1 209.8 270.4 213.0 270.7 215.0 268.1 213.9 264.9Z"/>
<path fill="#1dd1c8" stroke-width="0.6" d="M191.9 275.0 192.4 274.9 194.7 270.9 193.0 265.5 192.0 273.0 191.7 275.0Z"/>
<path fill="#21ddb2" stroke-width="0.6" d="M202.8 266.1 203.0 268.0 202.6 273.8 202.6 273.8 203.4 273.3 203.8 266.3Z"/>
<path fill="#1ed3c4" stroke-width="0.6" d="M207.0 265.4 203.8 266.3 203.4 273.3 204.8 273.1 209.2 270.1Z"/>
<path fill="#6a5aa8" stroke-width="0.6" d="M222.5 272.0 226.2 277.0 226.5 277.3 228.2 277.6 232.0 267.5 232.1 265.8 223.6 265.3 222.0 268.6Z"/>
<path fill="#6a5aa8" stroke-width="0.6" d="M234.0 270.0 234.0 264.2 232.1 265.8 232.0 267.5Z"/>
<path fill="#6b7bf0" stroke-width="0.6" d="M214.5 274.7 215.7 275.0 222.5 272.0 222.0 268.6 215.0 268.1 213.0 270.7Z"/>
<path fill="#6a5aa8" stroke-width="0.6" d="M232.0 267.5 228.2 277.6 231.6 279.8 234.0 279.2 234.0 273.0 234.0 270.0Z"/>
<path fill="#21ddb2" stroke-width="0.6" d="M202.6 273.8 202.6 273.8 202.6 274.0ZM194.7 270.9 192.4 274.9 197.0 278.8 197.0 270.6Z"/>
<path fill="#23e0ac" stroke-width="0.6" d="M204.8 273.1 207.7 275.3 209.4 275.5 209.8 270.4 209.2 270.1Z"/>
<path fill="#6b7bf0" stroke-width="0.6" d="M209.4 275.5 211.4 277.5 214.5 274.7 213.0 270.7 209.8 270.4Z"/>
<path fill="#21deb0" stroke-width="0.6" d="M202.6 273.8 202.6 274.0 202.0 282.0 203.6 284.2 207.7 275.3 204.8 273.1 203.4 273.3Z"/>
<path fill="#23c3d9" stroke-width="0.6" d="M207.7 275.3 203.6 284.2 207.6 290.8 208.6 290.3 211.4 277.5 209.4 275.5Z"/>
<path fill="#6b7bf0" stroke-width="0.6" d="M217.2 278.0 226.2 277.0 222.5 272.0 215.7 275.0Z"/>
<path fill="#6b7bf0" stroke-width="0.6" d="M211.4 277.5 208.6 290.3 215.7 289.3 215.9 288.8 217.2 278.0 215.7 275.0 214.5 274.7Z"/>
<path fill="#6b7bf0" stroke-width="0.6" d="M217.2 278.0 215.9 288.8 226.5 277.3 226.2 277.0Z"/>
<path fill="#25e1aa" stroke-width="0.6" d="M190.4 285.3 197.0 280.3 197.0 278.8 192.4 274.9 191.9 275.0 191.7 275.5 190.3 285.2Z"/>
<path fill="#27bdde" stroke-width="0.6" d="M190.2 288.1 190.4 285.3 190.3 285.2 189.9 288.3Z"/>
<path fill="#2ce4a2" stroke-width="0.6" d="M197.0 291.8 197.0 280.3 190.4 285.3 190.2 288.1ZM201.2 294.1 204.9 294.8 207.6 290.8 203.6 284.2 202.0 282.0 201.1 294.0Z"/>
<path fill="#6a5aa8" stroke-width="0.6" d="M226.5 277.3 215.9 288.8 215.7 289.3 229.7 296.0 231.6 279.8 228.2 277.6Z"/>
<path fill="#6a5aa8" stroke-width="0.6" d="M231.6 279.8 229.7 296.0 231.8 298.8 236.5 297.3 234.0 288.0 234.0 279.2Z"/>
<path fill="#29e2a6" stroke-width="0.6" d="M190.2 288.1 189.9 288.3 189.0 295.0 187.8 298.5 198.4 295.0 197.0 295.0 197.0 291.8ZM201.2 294.1 201.1 294.0 201.1 294.1Z"/>
<path fill="#6b7bf0" stroke-width="0.6" d="M225.6 315.4 227.4 315.0 231.8 298.8 229.7 296.0 215.7 289.3 208.6 290.3 207.6 290.8 204.9 294.8 205.5 310.5 205.8 311.6 207.2 312.6 207.7 312.7 208.0 311.0 212.0 309.0 211.5 313.3Z"/>
<path fill="#6072e8" stroke-width="0.6" d="M205.5 310.5 204.9 294.8 201.2 294.1 201.1 294.1 201.0 295.0 198.4 295.0 187.8 298.5 186.5 302.5Z"/>
<path fill="#6a5aa8" stroke-width="0.6" d="M231.8 298.8 227.4 315.0 238.7 322.4 243.9 322.0 244.0 321.0 238.0 303.0 236.5 297.3Z"/>
<path fill="#2a2c5a" stroke-width="0.6" d="M192.0 318.4 205.8 311.6 205.5 310.5 186.5 302.5 183.0 313.0 181.9 318.5Z"/>
<path fill="#6072e8" stroke-width="0.6" d="M207.2 312.6 205.8 311.6 192.0 318.4 192.9 322.9 201.3 332.4 205.3 324.3 207.1 313.5Z"/>
<path fill="#6072e8" stroke-width="0.6" d="M185.2 341.2 192.8 342.1 192.9 322.9 192.0 318.4 181.9 318.5 181.3 321.5Z"/>
<path fill="#6072e8" stroke-width="0.6" d="M201.3 332.4 192.9 322.9 192.8 342.1 193.2 342.3 200.1 337.7Z"/>
<path fill="#6b7bf0" stroke-width="0.6" d="M213.3 331.7 210.3 323.1 209.5 329.9 211.9 331.9ZM207.1 313.5 205.3 324.3 205.5 324.6 207.4 314.3Z"/>
<path fill="#6b7bf0" stroke-width="0.6" d="M207.2 312.6 207.1 313.5 207.4 314.3 207.7 312.7ZM213.3 331.7 218.9 333.2 225.6 315.4 211.5 313.3 210.3 323.1Z"/>
<path fill="#6072e8" stroke-width="0.6" d="M174.7 345.7 185.2 341.2 181.3 321.5 180.0 328.0 174.0 343.0 173.4 345.3Z"/>
<path fill="#6b7bf0" stroke-width="0.6" d="M205.3 324.3 201.3 332.4 200.1 337.7 203.0 337.8 205.5 324.6Z"/>
<path fill="#6b7bf0" stroke-width="0.6" d="M211.9 331.9 209.5 329.9 209.0 334.2Z"/>
<path fill="#6b7bf0" stroke-width="0.6" d="M219.6 338.1 218.9 333.2 213.3 331.7 211.9 331.9 209.0 334.2 208.5 339.1Z"/>
<path fill="#6a5aa8" stroke-width="0.6" d="M219.6 338.1 222.6 342.3 237.1 329.6 238.7 322.4 227.4 315.0 225.6 315.4 218.9 333.2Z"/>
<path fill="#6a5aa8" stroke-width="0.6" d="M240.6 346.4 242.0 343.0 243.9 322.0 238.7 322.4 237.1 329.6Z"/>
<path fill="#6a5aa8" stroke-width="0.6" d="M223.6 350.3 227.9 353.9 240.0 347.9 240.6 346.4 237.1 329.6 222.6 342.3Z"/>
<path fill="#6b7bf0" stroke-width="0.6" d="M212.0 351.3 212.7 351.8 223.6 350.3 222.6 342.3 219.6 338.1 208.5 339.1 208.4 339.7Z"/>
<path fill="#6b7bf0" stroke-width="0.6" d="M200.1 337.7 193.2 342.3 195.3 346.7 199.5 347.8 203.0 338.0 203.0 337.8ZM212.0 351.3 208.4 339.7 208.0 343.0 205.6 349.5Z"/>
<path fill="#6072e8" stroke-width="0.6" d="M193.2 342.3 192.8 342.1 185.2 341.2 174.7 345.7 176.6 353.6 183.3 356.6 194.8 354.7 195.1 354.5 195.3 346.7Z"/>
<path fill="#6b7bf0" stroke-width="0.6" d="M201.1 365.5 207.1 361.8 212.7 351.8 212.0 351.3 205.6 349.5 200.3 364.1ZM195.3 346.7 195.1 354.5 196.3 356.7 199.5 347.8Z"/>
<path fill="#6072e8" stroke-width="0.6" d="M176.4 355.2 176.6 353.6 174.7 345.7 173.4 345.3 169.0 363.0 170.2 365.6Z"/>
<path fill="#6b7bf0" stroke-width="0.6" d="M194.8 354.7 183.3 356.6 186.8 361.6Z"/>
<path fill="#6a5aa8" stroke-width="0.6" d="M228.2 356.8 235.9 358.9 236.0 358.0 240.0 347.9 227.9 353.9Z"/>
<path fill="#16161c" stroke-width="0.6" d="M186.8 361.6 183.3 356.6 176.6 353.6 176.4 355.2 180.7 362.8 186.1 365.1Z"/>
<path fill="#6b7bf0" stroke-width="0.6" d="M195.1 354.5 194.8 354.7 186.8 361.6 186.1 365.1 188.0 369.1 197.3 371.5 199.5 371.3 201.1 365.5 200.3 364.1 200.0 365.0 194.0 363.0 196.3 356.7Z"/>
<path fill="#4a4242" stroke-width="0.6" d="M216.2 365.3 226.5 362.5 227.4 361.2 228.0 359.5 228.2 356.8 227.9 353.9 223.6 350.3 212.7 351.8 207.1 361.8Z"/>
<path fill="#4a4242" stroke-width="0.6" d="M228.2 356.8 228.0 359.5 235.6 363.4 235.9 358.9Z"/>
<path fill="#16161c" stroke-width="0.6" d="M175.3 371.1 180.7 362.8 176.4 355.2 170.2 365.6 171.8 369.0Z"/>
<path fill="#16161c" stroke-width="0.6" d="M180.7 362.8 175.3 371.1 178.3 374.3 188.0 369.1 186.1 365.1Z"/>
<path fill="#4a4242" stroke-width="0.6" d="M216.2 365.3 207.1 361.8 201.1 365.5 199.5 371.3 203.1 376.3 209.4 377.8 213.5 372.8Z"/>
<path fill="#4a4242" stroke-width="0.6" d="M225.3 369.2 226.5 362.5 216.2 365.3 213.5 372.8Z"/>
<path fill="#4a4242" stroke-width="0.6" d="M228.0 359.5 227.4 361.2 235.1 370.8 235.6 363.4Z"/>
<path fill="#4a4242" stroke-width="0.6" d="M225.6 380.7 234.8 374.1 235.0 373.0 235.1 370.8 227.4 361.2 226.5 362.5 225.3 369.2Z"/>
<path fill="#4a4242" stroke-width="0.6" d="M209.4 377.8 213.5 380.7 225.3 381.7 225.6 380.7 225.3 369.2 213.5 372.8Z"/>
<path fill="#16161c" stroke-width="0.6" d="M178.0 391.3 178.2 390.8 178.3 374.3 175.3 371.1 171.8 369.0 176.0 378.0 176.0 391.7Z"/>
<path fill="#6b7bf0" stroke-width="0.6" d="M178.3 374.3 178.2 390.8 197.3 371.5 188.0 369.1Z"/>
<path fill="#4a4242" stroke-width="0.6" d="M225.6 380.7 225.3 381.7 231.4 390.8 234.8 374.1Z"/>
<path fill="#4a4242" stroke-width="0.6" d="M199.5 371.3 197.3 371.5 178.2 390.8 178.0 391.3 184.0 395.1 198.2 390.1 203.1 376.3Z"/>
<path fill="#4a4242" stroke-width="0.6" d="M203.1 376.3 198.2 390.1 206.7 396.6 211.5 395.3 213.5 380.7 209.4 377.8Z"/>
<path fill="#4a4242" stroke-width="0.6" d="M225.3 381.7 213.5 380.7 211.5 395.3 222.7 399.3 229.3 398.7 231.0 393.0 231.4 390.8Z"/>
<path fill="#4a4242" stroke-width="0.6" d="M206.7 396.6 198.2 390.1 184.0 395.1 185.6 399.5 193.1 406.1 204.7 400.9 206.1 398.6Z"/>
<path fill="#4a4242" stroke-width="0.6" d="M213.5 409.3 222.7 399.3 211.5 395.3 206.7 396.6 206.1 398.6Z"/>
<path fill="#16161c" stroke-width="0.6" d="M174.8 397.4 170.0 416.0 172.0 416.0Z"/>
<path fill="#4a4242" stroke-width="0.6" d="M193.1 406.1 196.2 413.4 205.3 409.5 204.7 400.9Z"/>
<path fill="#4a4242" stroke-width="0.6" d="M204.7 400.9 205.3 409.5 212.1 412.5 213.5 409.3 206.1 398.6Z"/>
<path fill="#16161c" stroke-width="0.6" d="M178.0 391.3 176.0 391.7 176.0 393.0 174.8 397.4 172.0 416.0 172.1 416.0 181.6 410.7 185.6 399.5 184.0 395.1Z"/>
<path fill="#4a4242" stroke-width="0.6" d="M181.6 410.7 184.4 414.8 196.0 415.2 196.2 413.4 193.1 406.1 185.6 399.5Z"/>
<path fill="#4a4242" stroke-width="0.6" d="M213.5 409.3 212.1 412.5 213.1 416.0 224.0 416.0 229.3 398.7 222.7 399.3Z"/>
<path fill="#4a4242" stroke-width="0.6" d="M212.1 412.5 205.3 409.5 196.2 413.4 196.0 415.2 196.1 416.0 213.1 416.0Z"/>
<path fill="#16161c" stroke-width="0.6" d="M184.4 414.8 181.6 410.7 172.1 416.0 184.3 416.0Z"/>
<path fill="#4a4242" stroke-width="0.6" d="M184.3 416.0 196.1 416.0 196.0 415.2 184.4 414.8Z"/>
</g>
<path fill="#0c0c14" d="M202.6 323.7 203.3 323.9 204.7 323.4 205.7 326.7ZM192.8 294.3 194.1 295.1 194.4 297.2 193.4 294.0ZM198.7 377.1 195.0 377.4 197.5 377.1 196.5 374.2ZM188.5 388.8 185.7 391.3 185.2 392.1 185.7 390.6ZM174.0 346.5 177.3 346.3 175.9 346.2 175.6 345.5ZM171.0 405.7 174.1 403.6 173.5 404.8 174.2 401.9ZM179.1 403.6 179.9 402.5 178.4 404.6 180.8 401.0ZM193.9 345.6 191.1 345.3 193.1 341.6 191.0 342.2ZM196.4 305.1 195.4 305.9 198.1 305.5 197.7 304.1ZM202.9 318.3 202.8 316.4 205.3 319.9 204.2 319.5ZM183.0 397.2 180.2 396.8 179.6 396.3 182.8 399.9ZM199.8 302.7 198.6 301.8 199.5 300.7 199.7 300.5ZM203.6 297.9 203.4 297.1 203.7 301.1 206.2 298.8ZM202.6 297.3 202.7 293.9 200.8 297.1 201.5 294.3ZM172.5 345.4 173.3 346.3 171.7 343.2 175.1 343.8ZM179.6 389.0 179.2 387.5 180.3 385.3 178.3 386.2ZM198.9 294.6 198.2 293.3 198.2 296.8 196.6 296.0ZM172.4 376.6 173.6 377.4 171.6 377.0 172.1 380.1ZM178.4 368.6 180.6 367.7 176.5 366.9 176.3 366.9ZM171.7 369.3 168.5 368.6 170.9 369.5 168.8 368.5ZM173.4 336.8 174.4 334.5 176.1 336.4 176.2 332.7ZM183.9 415.8 183.9 416.2 182.8 412.8 182.9 412.4ZM175.8 338.4 178.4 338.8 177.3 338.2 175.1 336.3ZM180.7 390.7 179.5 391.0 181.7 387.6 180.4 391.3ZM169.1 327.7 168.8 325.5 169.0 328.9 172.6 325.9ZM182.3 363.7 185.2 362.8 184.1 363.3 185.6 361.1ZM205.4 323.1 207.4 324.4 206.6 324.8 206.9 324.2ZM186.9 415.9 183.4 416.6 186.6 412.6 186.4 415.3ZM172.3 353.3 171.6 355.4 173.0 355.0 173.8 356.6ZM180.8 402.2 182.3 404.3 179.7 402.6 184.0 405.3ZM173.3 403.9 173.1 401.5 173.4 404.3 172.9 405.4ZM162.9 407.4 162.9 409.0 162.4 408.7 162.6 408.6ZM203.5 307.4 201.1 306.6 200.4 306.1 202.1 307.2ZM192.6 352.7 195.5 350.8 192.0 352.9 194.9 351.4ZM171.8 406.8 170.3 407.4 169.1 405.3 170.8 408.2ZM168.4 384.9 167.3 388.6 166.8 384.8 169.7 385.3ZM171.6 366.7 171.0 363.9 169.1 367.2 168.8 363.9ZM173.8 396.3 171.7 397.7 174.0 398.9 175.3 397.8ZM177.9 376.8 174.1 376.2 174.6 378.1 174.6 377.2ZM195.2 333.3 195.2 333.1 196.8 334.5 197.0 332.7ZM185.5 393.4 181.3 391.7 182.4 392.1 181.8 391.5ZM183.7 387.5 186.4 385.4 182.8 385.9 184.1 385.9ZM167.6 406.7 169.4 407.8 169.5 409.7 168.7 407.2ZM168.1 402.4 169.4 403.3 170.0 404.2 170.3 403.7ZM167.7 387.9 167.9 387.4 167.4 390.7 166.5 388.6ZM177.7 403.7 176.3 402.3 178.8 404.1 176.8 403.5ZM168.5 415.3 167.3 411.9 167.0 414.6 167.9 414.9ZM159.1 356.6 161.3 357.1 162.7 355.9 161.6 356.5ZM185.6 315.6 183.5 314.7 183.4 317.0 183.6 316.2ZM174.8 314.7 178.3 317.1 177.0 316.9 177.5 317.3ZM179.5 321.5 182.4 321.3 182.5 317.9 179.0 318.5ZM180.2 333.1 180.8 335.3 182.0 333.1 182.8 333.5ZM195.3 344.8 196.2 343.3 194.9 343.8 196.9 343.1ZM204.4 318.0 206.6 319.9 203.8 320.5 202.4 318.2ZM176.7 407.4 180.4 408.7 180.2 408.1 178.9 408.1ZM192.4 396.8 191.5 395.0 190.8 397.9 191.4 395.9ZM197.5 297.2 194.9 296.6 195.1 298.7 197.1 297.5ZM200.4 379.3 196.4 383.7 197.8 382.5 197.8 382.8ZM176.7 382.9 173.7 385.1 177.5 387.2 173.7 384.3ZM202.3 310.1 202.4 310.4 202.8 309.1 200.9 309.9ZM204.0 311.4 204.6 311.8 203.9 310.0 206.4 307.6ZM179.0 360.3 177.7 358.8 178.6 362.9 178.9 362.2ZM175.5 383.7 173.4 387.0 174.5 384.4 172.6 385.7ZM169.3 341.8 170.1 340.8 168.6 338.6 172.0 342.3ZM185.9 353.8 183.3 352.0 186.2 355.5 183.2 355.4ZM204.0 297.3 206.2 298.3 204.2 298.8 203.8 296.3ZM192.9 390.4 194.5 392.8 190.9 392.1 192.7 389.4ZM168.9 377.0 169.8 375.5 168.4 377.4 166.1 375.1ZM191.4 369.1 193.9 366.7 191.1 367.8 192.3 369.0ZM203.6 318.1 203.2 317.8 202.8 320.2 203.1 320.7ZM177.9 375.4 178.8 374.2 176.2 375.3 177.5 376.3ZM174.2 403.6 176.1 402.7 173.7 403.3 175.2 401.3ZM196.6 323.8 196.5 325.0 194.3 325.0 193.6 324.2ZM188.9 356.8 185.6 354.8 188.3 358.1 185.8 357.7ZM183.4 354.9 187.4 353.8 184.2 354.9 185.4 353.3ZM192.2 303.1 193.4 303.1 196.3 303.0 195.1 302.9ZM184.9 406.2 186.4 403.7 187.8 404.7 187.1 404.0ZM176.7 349.8 174.0 349.8 173.8 353.0 175.0 352.5ZM194.8 354.2 193.7 355.2 193.2 356.3 192.9 355.5ZM194.3 362.0 194.7 360.8 196.2 360.5 196.7 362.0ZM190.3 340.8 193.4 341.0 193.7 340.4 191.7 340.5ZM187.2 380.8 190.0 383.1 188.5 383.2 185.9 380.6ZM177.1 398.9 177.9 399.3 177.7 396.3 177.2 398.2ZM194.1 342.9 194.8 342.8 196.4 342.6 193.5 343.9ZM187.3 306.6 185.6 308.7 186.6 310.2 185.4 310.6ZM175.9 310.9 176.3 307.7 176.3 309.1 173.9 309.3ZM190.2 390.4 190.6 391.5 189.1 389.8 189.3 391.9ZM192.0 367.1 195.2 367.0 193.6 366.4 194.2 366.1ZM177.4 394.7 175.4 392.7 174.6 393.3 176.2 394.0ZM181.6 311.3 181.5 311.7 182.4 311.7 183.5 309.5ZM180.4 389.4 180.3 389.5 177.2 389.2 177.1 390.6ZM169.0 395.7 168.5 396.5 166.9 397.3 165.7 398.0ZM196.5 348.4 196.7 348.4 198.9 348.5 198.6 345.0ZM197.9 306.5 197.6 307.0 195.8 304.2 194.8 306.5ZM196.8 324.8 196.2 322.0 197.7 325.8 194.4 325.9ZM192.9 371.6 190.9 371.0 189.2 369.7 190.9 368.1ZM191.0 391.4 189.4 394.4 189.5 390.4 190.6 394.4ZM178.4 299.8 180.5 299.0 178.9 301.5 178.2 298.9ZM190.8 396.4 189.6 393.1 187.0 393.9 190.0 394.3ZM206.1 299.4 207.9 302.4 205.8 299.7 207.8 299.4ZM184.7 383.0 184.5 384.2 182.1 384.5 182.4 383.2ZM190.8 321.2 189.0 323.6 190.1 323.9 189.8 319.6ZM183.4 411.8 180.0 413.5 184.0 411.9 180.3 411.4ZM161.7 407.1 163.4 410.0 162.3 409.6 164.4 407.7ZM189.3 360.4 190.2 358.1 189.6 359.1 191.6 358.3ZM165.3 358.4 162.9 358.7 165.3 357.9 164.8 358.8ZM163.5 350.9 166.3 352.9 165.7 351.5 166.4 350.7ZM177.3 407.9 177.1 406.5 177.4 408.0 178.8 404.1ZM172.8 383.1 173.4 383.7 172.8 383.3 170.4 382.7ZM193.9 368.6 194.6 370.0 194.6 368.4 192.4 370.7ZM185.4 384.3 187.8 385.2 187.7 383.7 188.2 383.1ZM162.8 412.5 165.2 415.6 163.2 414.1 162.7 413.5ZM192.8 386.6 189.6 387.2 192.8 385.9 193.7 387.4ZM159.0 361.8 161.3 362.2 161.8 363.1 161.9 360.5ZM180.6 337.8 179.9 334.6 181.8 334.9 180.6 336.1ZM193.2 393.8 192.6 390.6 193.3 393.4 191.0 392.3ZM198.2 312.8 197.1 312.0 197.6 312.4 196.1 310.8ZM195.4 329.2 196.5 329.3 196.9 328.3 195.8 331.2ZM182.6 311.2 184.4 311.5 182.7 313.9 184.0 313.2ZM173.8 360.1 172.0 360.1 173.4 362.5 173.2 364.0ZM191.0 412.2 191.4 411.5 189.3 410.7 189.7 411.5ZM174.6 391.2 173.1 391.9 173.7 389.9 175.2 391.9ZM186.7 331.1 187.6 332.3 188.8 330.9 186.3 331.3ZM182.0 361.0 181.1 363.2 181.0 361.0 181.3 363.2ZM182.3 381.8 183.2 383.8 180.7 383.3 180.1 379.8ZM171.4 382.5 175.5 382.1 172.9 385.8 171.3 385.4ZM193.6 315.3 194.9 316.1 195.3 317.4 193.8 317.9ZM186.0 410.8 183.8 409.8 185.8 409.7 184.8 409.8ZM184.2 387.2 185.5 384.7 185.8 387.5 186.0 385.6ZM192.6 299.7 192.4 300.5 191.8 303.0 192.3 302.2ZM176.5 366.6 176.3 365.1 173.6 364.1 173.7 365.4ZM186.2 362.5 185.8 362.4 187.9 359.5 185.9 359.9ZM202.1 325.4 202.4 326.3 204.8 326.2 203.5 324.0ZM168.1 349.0 168.2 348.1 168.3 346.7 166.8 350.5ZM173.9 316.1 172.2 315.8 175.4 317.1 172.3 316.4ZM174.1 363.6 172.0 364.3 174.6 364.1 171.7 366.2ZM182.8 313.5 179.0 313.8 180.8 312.7 180.3 314.5ZM206.9 320.5 207.3 323.3 205.4 321.8 208.0 322.6ZM199.0 339.5 199.6 337.9 196.5 339.5 199.9 338.4ZM179.5 317.0 183.0 319.8 181.4 316.7 181.0 319.8ZM187.1 401.3 187.3 400.3 188.0 402.3 187.3 401.0ZM172.4 386.9 173.4 386.3 173.0 390.4 170.9 386.5ZM172.5 367.4 175.0 368.3 175.9 368.5 173.9 366.9ZM168.7 350.1 169.7 350.2 166.4 353.4 167.8 351.5ZM204.1 327.2 201.3 329.3 204.2 329.5 204.0 328.8ZM171.9 349.3 170.1 349.9 172.7 347.8 169.9 347.5ZM190.8 381.1 194.1 378.4 193.5 378.7 190.4 378.5ZM177.5 334.0 177.2 334.5 177.7 332.3 179.0 334.5ZM179.9 307.2 178.2 307.5 177.0 308.3 177.9 306.9ZM187.4 360.0 186.5 361.0 187.7 360.5 188.9 363.1ZM176.7 320.5 177.1 317.0 174.5 318.6 173.8 317.7ZM193.3 338.6 192.5 337.6 191.5 339.4 192.3 337.0ZM182.6 403.6 182.1 403.0 182.3 403.5 181.0 405.9ZM192.0 353.3 193.3 353.1 193.5 355.0 192.0 352.4ZM191.0 392.4 191.2 392.1 191.2 391.7 188.4 393.1ZM186.0 302.5 184.4 301.6 184.5 300.1 186.0 299.1ZM187.8 366.7 187.6 364.5 187.0 364.2 190.1 365.0ZM182.9 352.7 184.1 350.9 183.2 351.0 181.2 353.0ZM187.8 409.3 189.9 410.8 189.6 409.8 188.7 411.8ZM179.2 383.5 176.0 381.1 178.3 381.2 176.2 382.6ZM176.7 321.8 176.6 323.8 175.5 322.4 178.5 322.8ZM180.1 299.1 179.3 297.6 178.1 297.9 178.2 299.4ZM186.9 323.0 185.1 321.1 186.7 325.0 187.0 324.9ZM193.1 381.0 192.3 380.8 191.5 377.2 189.6 379.1ZM176.7 301.0 175.0 303.7 177.0 304.2 178.8 302.0ZM184.6 326.9 182.5 326.9 183.8 325.7 181.0 327.6ZM185.3 356.9 185.9 355.4 188.9 355.3 188.0 356.4ZM181.7 409.8 182.6 412.2 182.6 412.5 181.9 411.9ZM197.4 302.6 195.9 299.7 198.4 298.5 195.8 302.2ZM183.6 384.3 181.8 383.1 185.1 384.6 183.8 386.1Z"/>
</svg>
<svg class="a" style="left:767px;top:457px" width="659" height="414" viewBox="0 0 659 414">
<rect x="-1" y="-1" width="662" height="418" fill="#f8f8f7"/>
<g fill="none" stroke="#e8e8e8" stroke-width="0.9">
<path d="M290 0 C300 40 320 60 330 110 C335 150 320 180 330 230 M380 0 C370 40 360 80 380 120 L390 200 M483.5 1.4 L462.9 25.5 L457.7 75.1 L457.7 99 M462.9 25.5 L483.5 18.6 L504 32.3 L524.6 47.7 L541.8 66.6 M470 50 L500 60 L520 80 M290 205 C320 215 360 230 380 240 M270 280 C300 270 330 300 360 300 M275 320 C300 320 320 320 340 320 M420 0 C430 40 440 80 455 100"/>
<path d="M345 40 C350 100 352 160 350 240 M405 0 C410 100 408 200 410 300 M300 130 C330 140 360 150 400 150" stroke="#eeeeee"/>
</g>
<path d="M-1 -1 L238.6 -2.0 L234.0 23.0 L236.0 53.0 L237.0 73.0 L231.0 88.0 L228.0 108.0 L219.0 133.0 L210.0 153.0 L202.0 163.0 L205.0 193.0 L207.0 213.0 L196.0 243.0 L192.0 273.0 L189.0 295.0 L183.0 313.0 L180.0 328.0 L174.0 343.0 L169.0 363.0 L176.0 378.0 L176.0 393.0 L170.0 416.0 L-1 416Z" fill="#d3d9dc"/>
<path d="M601.8 -1.0 L586.4 28.9 L560.7 54.6 L552.1 70.0 L541.8 87.2 L528.0 107.8 L488.6 111.2 L457.7 101.0 L474.9 118.1 L474.9 131.8 L483.5 143.8 L481.8 161.0 L473.0 183.0 L448.0 193.0 L401.0 199.0 L393.0 208.0 L395.0 232.0 L382.0 243.0 L347.0 238.0 L345.0 247.0 L350.0 267.0 L370.0 271.0 L350.0 286.0 L339.0 310.0 L335.0 329.0 L315.0 337.0 L304.0 360.0 L315.0 380.0 L331.0 388.0 L331.0 416.0 L660 416 L660 -1Z" fill="#d3d9dc"/>
<path d="M577 22 L581 20 L573 36 L559 52 L555 53 L560 40Z M546 60 L549 62 L539 80 L535 79Z" fill="#d3d9dc"/>
<ellipse cx="357" cy="28" rx="6" ry="3" fill="#dfe3e6"/>
<circle cx="82" cy="89" r="1.3" fill="#222"/><circle cx="114" cy="87" r="1.3" fill="#222"/>
<path d="M-1 -1 L262.6 -2.0 L264.7 23.0 L256.5 33.0 L258.0 53.0 L258.6 68.0 L265.7 83.0 L264.7 103.0 L255.7 123.0 L254.7 143.0 L242.4 153.0 L245.5 183.0 L238.3 198.0 L237.3 213.0 L233.0 243.0 L233.0 273.0 L233.0 288.0 L237.0 303.0 L243.0 321.0 L241.0 343.0 L235.0 358.0 L234.0 373.0 L230.0 393.0 L223.0 416.0 L-1 416Z" fill="#d3d9dc"/>
<g font-family="Liberation Sans" fill="#9a9a9a" stroke="#ffffff" stroke-width="1.6" stroke-opacity="0.75" paint-order="stroke">
<text x="529" y="19" font-size="6.5" letter-spacing="0">Porto Alegre •</text>
<text x="327" y="46" font-size="6.5" letter-spacing="0">Córdoba •</text>
<text x="474" y="75" font-size="8" letter-spacing="1">URUGUAY</text>
<text x="317" y="118" font-size="8.5" letter-spacing="1.2">ARGENTINA</text>
<text x="420" y="104" font-size="7" letter-spacing="0.5">BUENOS</text>
<text x="423" y="113" font-size="7" letter-spacing="0.5">AIRES</text>
<text x="493" y="116" font-size="6.5" letter-spacing="0">•Montevideo</text>
<text x="442" y="173" font-size="6.5" letter-spacing="0">Mar del</text>
<text x="447" y="181" font-size="6.5" letter-spacing="0">Plata</text>
<text x="342" y="195" font-size="6.5" letter-spacing="0">Bahía Blanca •</text>
<text x="207" y="86" font-size="7" letter-spacing="0.8">SANTIAGO</text>
<text x="254" y="74" font-size="6.5" letter-spacing="0">Mendoza •</text>
<text x="167" y="155" font-size="6.5" letter-spacing="0">Concepción</text>
<text x="177" y="218" font-size="6.5" letter-spacing="0">Valdivia</text>
<text x="162" y="255" font-size="6.5" letter-spacing="0">Puerto Montt</text>
<text x="262" y="351" font-size="6.5" letter-spacing="0">Comodoro</text>
<text x="264" y="359" font-size="6.5" letter-spacing="0">Rivadavia</text>
</g>
<g stroke="#000" stroke-linejoin="round">
<path fill="#97ee47" stroke-width="0.9" d="M243.2 -1.3 243.5 -2.0 242.0 -2.0Z"/>
<path fill="#90ef4c" stroke-width="0.9" d="M242.0 -2.0 238.6 -2.0 238.1 0.7 241.7 2.0 242.7 1.7 243.2 -1.3Z"/>
<path fill="#a8482e" stroke-width="0.9" d="M254.3 2.7 261.1 -1.9 261.1 -2.0 251.8 -2.0Z"/>
<path fill="#8fef4c" stroke-width="0.9" d="M243.2 -1.3 242.7 1.7 245.3 4.0 250.5 6.6 250.8 6.5 254.3 2.7 251.8 -2.0 243.5 -2.0Z"/>
<path fill="#44ed88" stroke-width="0.9" d="M241.7 2.0 238.1 0.7 237.0 6.7Z"/>
<path fill="#a8482e" stroke-width="0.9" d="M261.1 -1.9 263.6 8.2 264.5 8.5 263.6 -2.0 261.1 -2.0Z"/>
<path fill="#a8482e" stroke-width="0.9" d="M261.1 -1.9 254.3 2.7 250.8 6.5 259.4 10.9 263.6 8.2Z"/>
<path fill="#7af15c" stroke-width="0.9" d="M242.1 11.7 245.3 4.0 242.7 1.7 241.7 2.0 237.0 6.7 236.7 8.5Z"/>
<path fill="#4ff07d" stroke-width="0.9" d="M239.7 21.8 240.3 21.8 241.5 21.1 242.1 11.7 236.7 8.5 235.1 17.3Z"/>
<path fill="#6bf167" stroke-width="0.9" d="M250.5 6.6 245.3 4.0 242.1 11.7 241.5 21.1 248.5 19.1Z"/>
<path fill="#a8482e" stroke-width="0.9" d="M259.4 10.9 250.8 6.5 250.5 6.6 248.5 19.1 251.0 20.0 259.1 15.2Z"/>
<path fill="#a8482e" stroke-width="0.9" d="M263.6 8.2 259.4 10.9 259.1 15.2 261.9 17.4 262.4 17.5 265.1 15.4 264.5 8.5Z"/>
<path fill="#a8482e" stroke-width="0.9" d="M262.4 17.5 265.5 21.1 265.1 15.4Z"/>
<path fill="#a8482e" stroke-width="0.9" d="M258.1 24.4 261.9 17.4 259.1 15.2 251.0 20.0 253.3 23.0Z"/>
<path fill="#7cf15a" stroke-width="0.9" d="M239.7 21.8 235.1 17.3 234.0 23.0 234.3 26.9 235.8 26.3Z"/>
<path fill="#c85a30" stroke-width="0.9" d="M262.4 17.5 261.9 17.4 258.1 24.4 262.2 27.3 265.7 23.0 265.5 21.1Z"/>
<path fill="#3cea90" stroke-width="0.9" d="M253.3 23.0 251.0 20.0 248.5 19.1 241.5 21.1 240.3 21.8 245.3 31.1 252.4 30.3Z"/>
<path fill="#fa9c2e" stroke-width="0.9" d="M258.1 24.4 253.3 23.0 252.4 30.3 252.5 30.4 257.7 32.8 262.2 27.3Z"/>
<path fill="#2ce4a2" stroke-width="0.9" d="M245.3 31.5 245.3 31.1 240.3 21.8 239.7 21.8 235.8 26.3 237.0 33.6 239.0 36.5Z"/>
<path fill="#5ff071" stroke-width="0.9" d="M235.8 26.3 234.3 26.9 234.8 34.6 237.0 33.6Z"/>
<path fill="#f68024" stroke-width="0.9" d="M251.2 36.2 252.5 30.4 252.4 30.3 245.3 31.1 245.3 31.5 247.6 37.8Z"/>
<path fill="#f8a732" stroke-width="0.9" d="M252.5 30.4 251.2 36.2 257.6 38.2 257.9 37.7 257.5 33.0 257.7 32.8Z"/>
<path fill="#61f06f" stroke-width="0.9" d="M239.1 39.3 239.0 36.5 237.0 33.6 234.8 34.6 235.1 39.6Z"/>
<path fill="#97ee47" stroke-width="0.9" d="M245.7 43.5 247.6 37.8 245.3 31.5 239.0 36.5 239.1 39.3 239.3 39.5Z"/>
<path fill="#f9a431" stroke-width="0.9" d="M245.7 43.5 246.5 45.3 247.5 46.1 249.6 47.7 257.1 42.2 257.6 38.2 251.2 36.2 247.6 37.8Z"/>
<path fill="#fa9f2f" stroke-width="0.9" d="M257.1 42.2 258.2 42.8 257.9 37.7 257.6 38.2Z"/>
<path fill="#4ef07d" stroke-width="0.9" d="M239.3 39.5 239.1 39.3 235.1 39.6 235.5 45.4Z"/>
<path fill="#20dbb6" stroke-width="0.9" d="M246.5 45.3 245.7 43.5 239.3 39.5 235.5 45.4 235.8 50.4Z"/>
<path fill="#bd2e08" stroke-width="0.9" d="M257.1 42.2 249.6 47.7 250.0 48.8 251.1 49.8 258.1 54.2 259.0 53.8 259.0 53.0 258.2 42.8Z"/>
<path fill="#37a5f0" stroke-width="0.9" d="M238.3 55.1 240.0 54.9 247.5 46.1 246.5 45.3 235.8 50.4 235.8 50.7Z"/>
<path fill="#f4b737" stroke-width="0.9" d="M250.0 48.8 249.6 47.7 247.5 46.1 240.0 54.9 246.0 55.1Z"/>
<path fill="#24c1db" stroke-width="0.9" d="M238.0 60.4 238.3 55.1 235.8 50.7 236.0 53.0 236.4 60.7Z"/>
<path fill="#2bb8e3" stroke-width="0.9" d="M238.0 60.4 239.5 61.4 243.5 62.6 245.6 61.0 246.0 55.1 240.0 54.9 238.3 55.1Z"/>
<path fill="#d0df36" stroke-width="0.9" d="M250.5 61.7 251.3 60.9 251.1 49.8 250.0 48.8 246.0 55.1 245.6 61.0Z"/>
<path fill="#eb6018" stroke-width="0.9" d="M257.9 58.0 258.1 54.2 251.1 49.8 251.3 60.9Z"/>
<path fill="#faa02f" stroke-width="0.9" d="M258.1 54.2 257.9 58.0 258.8 59.9 259.3 59.9 259.0 53.8Z"/>
<path fill="#fb932b" stroke-width="0.9" d="M257.5 67.6 258.5 66.8 258.8 59.9 257.9 58.0 251.3 60.9 250.5 61.7 250.7 62.1Z"/>
<path fill="#fa8f29" stroke-width="1.0" d="M259.6 66.8 259.3 59.9 258.8 59.9 258.5 66.8Z"/>
<path fill="#3ae993" stroke-width="1.0" d="M236.8 68.8 239.5 61.4 238.0 60.4 236.4 60.7 236.8 68.8Z"/>
<path fill="#25e1aa" stroke-width="1.0" d="M239.5 61.4 236.8 68.8 238.7 71.2 242.1 69.3 243.9 66.3 243.5 62.6Z"/>
<path fill="#cbe037" stroke-width="1.0" d="M243.9 66.3 245.6 67.1 248.3 67.4 249.9 66.4 250.7 62.1 250.5 61.7 245.6 61.0 243.5 62.6Z"/>
<path fill="#fb982d" stroke-width="1.0" d="M249.9 66.4 252.8 68.4 257.5 67.7 257.5 67.6 250.7 62.1Z"/>
<path fill="#efc339" stroke-width="1.0" d="M245.6 67.1 247.0 69.8 250.1 70.4 250.2 70.3 248.3 67.4Z"/>
<path fill="#bde539" stroke-width="1.0" d="M248.3 67.4 250.2 70.3 252.8 68.4 249.9 66.4Z"/>
<path fill="#1dd1c7" stroke-width="1.0" d="M237.2 74.1 238.4 72.2 238.7 71.2 236.8 68.8 236.8 68.8 237.0 73.0 236.5 74.2Z"/>
<path fill="#ddd437" stroke-width="1.0" d="M242.1 69.3 245.5 73.0 246.8 72.0 247.0 69.8 245.6 67.1 243.9 66.3Z"/>
<path fill="#aee93b" stroke-width="1.0" d="M250.0 71.8 250.1 70.4 247.0 69.8 246.8 72.0Z"/>
<path fill="#f5b235" stroke-width="1.0" d="M250.2 72.2 256.2 73.0 256.3 72.8 257.4 68.9 257.5 67.7 252.8 68.4 250.2 70.3 250.1 70.4 250.0 71.8Z"/>
<path fill="#f4b937" stroke-width="1.0" d="M257.5 67.7 257.4 68.9 261.8 72.6 259.6 68.0 259.6 66.8 258.5 66.8 257.5 67.6Z"/>
<path fill="#1dd1c7" stroke-width="1.0" d="M238.4 72.2 245.5 76.3 245.5 73.0 242.1 69.3 238.7 71.2Z"/>
<path fill="#c6e237" stroke-width="1.0" d="M250.2 72.2 250.0 71.8 246.8 72.0 245.5 73.0 245.5 76.3 245.6 76.5 247.0 76.7 249.9 73.7Z"/>
<path fill="#f3bd39" stroke-width="1.0" d="M252.0 75.4 255.7 75.5 256.2 73.0 250.2 72.2 249.9 73.7Z"/>
<path fill="#f88626" stroke-width="1.0" d="M257.4 68.9 256.3 72.8 261.4 74.9 262.0 73.2 261.8 72.6Z"/>
<path fill="#f26d1d" stroke-width="1.0" d="M261.4 74.9 262.1 77.1 263.2 77.5 263.8 76.8 262.0 73.2Z"/>
<path fill="#1ccece" stroke-width="1.0" d="M237.2 74.1 238.8 77.8 245.4 76.7 245.6 76.5 245.5 76.3 238.4 72.2Z"/>
<path fill="#eac838" stroke-width="1.0" d="M247.0 76.7 247.8 77.3 250.1 77.3 252.0 75.4 249.9 73.7Z"/>
<path fill="#ebc739" stroke-width="1.0" d="M250.1 77.3 255.7 80.7 256.3 78.8 255.7 75.5 252.0 75.4Z"/>
<path fill="#fb962c" stroke-width="1.0" d="M256.2 73.0 255.7 75.5 256.3 78.8 262.1 77.1 261.4 74.9 256.3 72.8Z"/>
<path fill="#e45714" stroke-width="1.0" d="M263.2 77.5 265.0 81.3 265.7 80.8 263.8 76.8Z"/>
<path fill="#23e0ac" stroke-width="1.0" d="M238.8 77.8 237.2 74.1 236.5 74.2 233.7 81.3 234.8 82.3 238.7 79.6Z"/>
<path fill="#2ee4a0" stroke-width="1.0" d="M244.3 80.1 245.4 76.7 238.8 77.8 238.7 79.6 241.6 82.1Z"/>
<path fill="#e9c838" stroke-width="1.0" d="M247.8 77.3 249.6 82.3 255.6 81.7 255.7 80.7 250.1 77.3Z"/>
<path fill="#f57b22" stroke-width="1.0" d="M265.0 81.3 263.2 77.5 262.1 77.1 256.3 78.8 255.7 80.7 255.6 81.7 255.9 82.3 263.6 82.1 265.0 81.5Z"/>
<path fill="#b5e73a" stroke-width="1.0" d="M247.0 82.5 244.3 80.1 241.6 82.1 241.8 83.7Z"/>
<path fill="#7ef158" stroke-width="1.0" d="M247.0 76.7 245.6 76.5 245.4 76.7 244.3 80.1 247.0 82.5 248.4 83.3 249.6 82.3 247.8 77.3Z"/>
<path fill="#fa9e2f" stroke-width="1.0" d="M265.0 81.3 265.0 81.5 265.6 82.3 266.6 83.2 266.7 83.2 266.7 83.0 265.7 80.8Z"/>
<path fill="#33acee" stroke-width="1.0" d="M233.0 85.8 234.8 83.6 234.8 82.3 233.7 81.3 232.0 85.6Z"/>
<path fill="#23c2d9" stroke-width="1.0" d="M241.8 83.7 241.6 82.1 238.7 79.6 234.8 82.3 234.8 83.6 238.1 85.7 241.3 84.8 241.7 84.2Z"/>
<path fill="#60f070" stroke-width="1.0" d="M246.6 85.9 248.0 84.4 248.4 83.3 247.0 82.5 241.8 83.7 241.7 84.2Z"/>
<path fill="#ee651a" stroke-width="1.0" d="M255.9 82.3 256.1 83.7 256.4 84.4 258.2 86.8 261.5 88.3 263.6 82.1Z"/>
<path fill="#3c9af2" stroke-width="1.0" d="M233.1 87.6 233.0 85.8 232.0 85.6 231.0 88.0 230.8 89.2Z"/>
<path fill="#4092f3" stroke-width="1.0" d="M234.8 83.6 233.0 85.8 233.1 87.6 234.5 89.2 237.3 90.2 237.7 89.3 238.1 85.7Z"/>
<path fill="#4489f4" stroke-width="1.0" d="M241.3 84.8 238.1 85.7 237.7 89.3 240.7 88.2 241.5 85.7Z"/>
<path fill="#a5ec3d" stroke-width="1.0" d="M246.6 86.2 246.6 85.9 241.7 84.2 241.3 84.8 241.5 85.7 244.1 89.2Z"/>
<path fill="#d2de36" stroke-width="1.0" d="M246.6 86.2 249.7 91.2 250.6 91.0 251.2 87.4 248.0 84.4 246.6 85.9Z"/>
<path fill="#9ded43" stroke-width="1.0" d="M248.0 84.4 251.2 87.4 256.1 83.7 255.9 82.3 255.6 81.7 249.6 82.3 248.4 83.3Z"/>
<path fill="#f98c28" stroke-width="1.0" d="M265.0 81.5 263.6 82.1 261.5 88.3 262.1 89.0 264.1 88.3 265.6 82.3Z"/>
<path fill="#fa9e2f" stroke-width="1.0" d="M265.6 82.3 264.1 88.3 266.4 88.3 266.7 83.4 266.6 83.2Z"/>
<path fill="#2fb2e9" stroke-width="1.0" d="M240.7 88.2 237.7 89.3 237.3 90.2 237.8 91.5 238.1 91.9 242.2 90.2Z"/>
<path fill="#93ef4a" stroke-width="1.0" d="M241.5 85.7 240.7 88.2 242.2 90.2 243.9 90.3 244.1 89.2Z"/>
<path fill="#e5cc38" stroke-width="1.0" d="M243.9 90.3 244.8 91.8 245.7 92.1 248.9 91.7 249.7 91.2 246.6 86.2 244.1 89.2Z"/>
<path fill="#e4ce38" stroke-width="1.0" d="M251.9 91.5 252.8 91.4 256.4 84.4 256.1 83.7 251.2 87.4 250.6 91.0Z"/>
<path fill="#f5b536" stroke-width="1.0" d="M255.9 92.2 258.2 86.8 256.4 84.4 252.8 91.4Z"/>
<path fill="#3e96f2" stroke-width="1.0" d="M232.0 93.2 234.5 89.2 233.1 87.6 230.8 89.2 230.3 92.4Z"/>
<path fill="#30b1e9" stroke-width="1.0" d="M234.5 89.2 232.0 93.2 232.1 93.3 232.5 93.5 237.8 91.5 237.3 90.2Z"/>
<path fill="#bee438" stroke-width="1.0" d="M242.2 90.2 238.1 91.9 238.2 92.4 243.4 93.3 244.8 91.8 243.9 90.3Z"/>
<path fill="#fb9c2e" stroke-width="1.0" d="M261.5 88.3 258.2 86.8 255.9 92.2 256.7 93.0 262.1 91.1 262.1 89.0Z"/>
<path fill="#fb962c" stroke-width="1.0" d="M262.1 89.0 262.1 91.1 262.9 92.6 266.3 91.7 266.4 88.3 264.1 88.3Z"/>
<path fill="#39a0f1" stroke-width="1.0" d="M229.4 99.4 229.7 99.3 232.1 93.3 232.0 93.2 230.3 92.4 229.4 99.0Z"/>
<path fill="#428df4" stroke-width="1.0" d="M237.8 91.5 232.5 93.5 233.1 94.2 235.0 94.7 238.2 92.5 238.2 92.4 238.1 91.9Z"/>
<path fill="#3f93f3" stroke-width="1.0" d="M237.5 98.0 237.7 98.0 238.7 94.8 238.2 92.5 235.0 94.7 236.2 97.6Z"/>
<path fill="#95ee48" stroke-width="1.0" d="M238.2 92.4 238.2 92.5 238.7 94.8 242.5 95.5 243.4 93.3Z"/>
<path fill="#b6e739" stroke-width="1.0" d="M243.7 97.8 246.1 96.9 245.7 92.1 244.8 91.8 243.4 93.3 242.5 95.5 243.3 97.5Z"/>
<path fill="#d3de36" stroke-width="1.0" d="M248.2 97.1 248.8 96.5 248.9 91.7 245.7 92.1 246.1 96.9 247.2 97.1Z"/>
<path fill="#c0e438" stroke-width="1.0" d="M248.9 91.7 248.8 96.5 252.2 96.3 251.9 91.5 250.6 91.0 249.7 91.2Z"/>
<path fill="#b0e93a" stroke-width="1.0" d="M252.2 96.3 252.7 96.8 254.6 97.3 256.9 94.5 256.7 93.0 255.9 92.2 252.8 91.4 251.9 91.5Z"/>
<path fill="#f1691b" stroke-width="1.0" d="M261.2 97.4 263.0 97.5 263.4 96.0 262.9 92.6 262.1 91.1 256.7 93.0 256.9 94.5Z"/>
<path fill="#fa9f2f" stroke-width="1.0" d="M263.4 96.0 266.1 94.7 266.3 91.7 262.9 92.6Z"/>
<path fill="#35a9f0" stroke-width="1.0" d="M233.1 94.2 232.5 93.5 232.1 93.3 229.7 99.3 231.2 99.1 233.8 97.5Z"/>
<path fill="#39a1f1" stroke-width="1.0" d="M235.0 94.7 233.1 94.2 233.8 97.5 236.2 97.6Z"/>
<path fill="#afe93b" stroke-width="1.0" d="M243.3 97.5 242.5 95.5 238.7 94.8 237.7 98.0 237.9 98.2Z"/>
<path fill="#f4731f" stroke-width="1.0" d="M256.0 100.7 261.2 97.4 256.9 94.5 254.6 97.3Z"/>
<path fill="#f8a631" stroke-width="1.0" d="M263.4 96.0 263.0 97.5 265.2 100.9 265.8 100.9 266.1 94.7Z"/>
<path fill="#35aaf0" stroke-width="1.0" d="M233.8 97.5 231.2 99.1 234.6 101.2 237.5 98.0 236.2 97.6Z"/>
<path fill="#9aed45" stroke-width="1.0" d="M242.9 103.2 243.5 102.7 243.7 97.8 243.3 97.5 237.9 98.2 239.4 101.4Z"/>
<path fill="#98ee46" stroke-width="1.0" d="M243.5 102.7 246.4 102.6 247.2 97.1 246.1 96.9 243.7 97.8Z"/>
<path fill="#b6e739" stroke-width="1.0" d="M249.2 103.0 250.2 102.7 250.1 100.9 248.2 97.1 247.2 97.1 246.4 102.6Z"/>
<path fill="#f3be39" stroke-width="1.0" d="M250.1 100.9 252.7 96.8 252.2 96.3 248.8 96.5 248.2 97.1Z"/>
<path fill="#c6e237" stroke-width="1.0" d="M255.0 104.7 256.0 100.7 254.6 97.3 252.7 96.8 250.1 100.9 250.2 102.7Z"/>
<path fill="#1dd2c5" stroke-width="1.0" d="M229.8 101.4 231.1 102.9 235.0 103.0 234.6 101.2 231.2 99.1 229.7 99.3 229.4 99.4 229.3 99.5 229.2 100.2Z"/>
<path fill="#2eb3e7" stroke-width="1.0" d="M237.9 98.2 237.7 98.0 237.5 98.0 234.6 101.2 235.0 103.0 235.6 103.9 239.4 101.4Z"/>
<path fill="#f88927" stroke-width="1.0" d="M257.5 109.1 262.8 105.8 265.2 100.9 263.0 97.5 261.2 97.4 256.0 100.7 255.0 104.7Z"/>
<path fill="#54f079" stroke-width="1.1" d="M228.2 107.0 229.8 101.4 229.2 100.2 228.1 107.0Z"/>
<path fill="#6bf168" stroke-width="1.1" d="M231.6 106.6 231.1 102.9 229.8 101.4 228.2 107.0 229.7 108.1Z"/>
<path fill="#9aee45" stroke-width="1.1" d="M234.8 106.4 235.6 104.6 235.6 103.9 235.0 103.0 231.1 102.9 231.6 106.6Z"/>
<path fill="#83f155" stroke-width="1.1" d="M242.8 103.4 242.9 103.2 239.4 101.4 235.6 103.9 235.6 104.6 240.9 105.8Z"/>
<path fill="#44ec88" stroke-width="1.1" d="M240.9 105.8 235.6 104.6 234.8 106.4 236.0 108.4 239.7 109.6Z"/>
<path fill="#8cf04f" stroke-width="1.1" d="M245.0 107.1 247.9 107.0 249.2 103.0 246.4 102.6 243.5 102.7 242.9 103.2 242.8 103.4Z"/>
<path fill="#f6b235" stroke-width="1.1" d="M251.4 114.5 253.5 115.4 253.8 115.3 253.9 115.3 257.2 110.4 257.5 109.1 255.0 104.7 250.2 102.7 249.2 103.0 247.9 107.0Z"/>
<path fill="#e1d037" stroke-width="1.1" d="M265.2 100.9 262.8 105.8 264.1 106.5 265.7 103.0 265.8 100.9Z"/>
<path fill="#87f052" stroke-width="1.1" d="M228.6 111.2 229.8 110.4 229.7 108.1 228.2 107.0 228.1 107.0 228.0 108.0 227.0 110.8Z"/>
<path fill="#48ee83" stroke-width="1.1" d="M232.9 112.6 236.0 108.4 234.8 106.4 231.6 106.6 229.7 108.1 229.8 110.4Z"/>
<path fill="#9ced43" stroke-width="1.1" d="M244.7 110.7 245.0 107.1 242.8 103.4 240.9 105.8 239.7 109.6 239.9 110.1Z"/>
<path fill="#a6ec3d" stroke-width="1.1" d="M248.6 114.1 251.4 114.5 247.9 107.0 245.0 107.1 244.7 110.7Z"/>
<path fill="#84f154" stroke-width="1.1" d="M226.5 115.1 228.6 111.2 227.0 110.8 225.5 115.0Z"/>
<path fill="#50f07c" stroke-width="1.1" d="M239.7 109.6 236.0 108.4 232.9 112.6 233.4 113.8 235.3 114.7 238.7 114.7 239.9 110.1Z"/>
<path fill="#f2c039" stroke-width="1.1" d="M262.8 105.8 257.5 109.1 257.2 110.4 261.5 112.3 264.1 106.5Z"/>
<path fill="#64f06d" stroke-width="1.1" d="M228.6 111.2 226.5 115.1 226.6 115.2 230.7 116.6 233.4 113.8 232.9 112.6 229.8 110.4Z"/>
<path fill="#77f15e" stroke-width="1.1" d="M238.7 114.7 239.0 115.1 242.2 116.5 248.6 114.1 244.7 110.7 239.9 110.1Z"/>
<path fill="#73f161" stroke-width="1.1" d="M234.0 121.4 234.3 121.0 235.3 114.7 233.4 113.8 230.7 116.6 231.0 121.5Z"/>
<path fill="#f8a631" stroke-width="1.1" d="M253.9 115.3 259.0 117.9 261.5 112.3 257.2 110.4Z"/>
<path fill="#75f15f" stroke-width="1.1" d="M223.8 120.5 226.7 120.6 226.6 115.2 226.5 115.1 225.5 115.0 223.6 120.3Z"/>
<path fill="#3cea90" stroke-width="1.1" d="M231.0 121.5 230.7 116.6 226.6 115.2 226.7 120.6 227.0 120.8 230.6 121.8Z"/>
<path fill="#2de4a1" stroke-width="1.1" d="M237.8 119.2 239.0 115.1 238.7 114.7 235.3 114.7 234.3 121.0Z"/>
<path fill="#7cf15a" stroke-width="1.1" d="M242.3 119.9 242.2 116.5 239.0 115.1 237.8 119.2 239.8 121.0 240.3 121.1Z"/>
<path fill="#7ff158" stroke-width="1.1" d="M246.1 123.3 246.7 123.3 253.5 115.4 251.4 114.5 248.6 114.1 242.2 116.5 242.3 119.9Z"/>
<path fill="#3ce991" stroke-width="1.1" d="M222.8 122.9 223.8 120.5 223.6 120.3 222.6 122.9Z"/>
<path fill="#8def4e" stroke-width="1.1" d="M236.7 124.1 239.8 121.0 237.8 119.2 234.3 121.0 234.0 121.4 236.6 124.0Z"/>
<path fill="#b8e639" stroke-width="1.1" d="M241.5 126.1 246.1 123.3 242.3 119.9 240.3 121.1Z"/>
<path fill="#ded337" stroke-width="1.1" d="M253.9 115.3 253.8 115.3 256.5 127.4 256.7 123.0 259.0 117.9Z"/>
<path fill="#64f06c" stroke-width="1.1" d="M223.6 125.6 222.8 122.9 222.6 122.9 221.1 127.2Z"/>
<path fill="#92ef4a" stroke-width="1.1" d="M223.6 125.6 224.8 125.8 227.0 120.8 226.7 120.6 223.8 120.5 222.8 122.9Z"/>
<path fill="#4bef80" stroke-width="1.1" d="M227.0 120.8 224.8 125.8 228.8 128.3 229.9 126.4 230.6 121.8Z"/>
<path fill="#38e894" stroke-width="1.1" d="M234.0 121.4 231.0 121.5 230.6 121.8 229.9 126.4 234.9 126.6 236.6 124.0Z"/>
<path fill="#7ff158" stroke-width="1.1" d="M241.4 126.2 241.5 126.1 240.3 121.1 239.8 121.0 236.7 124.1 239.7 126.2Z"/>
<path fill="#f6af34" stroke-width="1.1" d="M253.8 115.3 253.5 115.4 246.7 123.3 246.9 123.8 252.8 130.5 254.1 130.5 256.4 129.0 256.5 127.4Z"/>
<path fill="#79f15c" stroke-width="1.1" d="M239.7 126.2 236.7 124.1 236.6 124.0 234.9 126.6 235.4 128.9 235.8 129.1 238.8 127.3Z"/>
<path fill="#a2ec3f" stroke-width="1.1" d="M241.4 126.2 242.3 128.7 245.7 128.3 246.9 123.8 246.7 123.3 246.1 123.3 241.5 126.1Z"/>
<path fill="#2be3a3" stroke-width="1.1" d="M224.8 125.8 223.6 125.6 221.1 127.2 219.8 130.8 221.3 131.4 228.8 129.9 228.8 128.3Z"/>
<path fill="#5ff070" stroke-width="1.1" d="M234.9 126.6 229.9 126.4 228.8 128.3 228.8 129.9 229.6 131.2 230.8 130.8 235.4 128.9Z"/>
<path fill="#96ee48" stroke-width="1.1" d="M235.8 129.1 237.2 131.7 237.4 132.0 238.7 131.3 238.8 127.3Z"/>
<path fill="#88f051" stroke-width="1.1" d="M238.7 131.3 242.3 130.9 242.3 128.7 241.4 126.2 239.7 126.2 238.8 127.3Z"/>
<path fill="#a5ec3d" stroke-width="1.1" d="M242.3 128.7 242.3 130.9 243.8 132.8 247.6 131.9 245.7 128.3Z"/>
<path fill="#f3bb38" stroke-width="1.1" d="M247.6 131.9 249.9 132.1 252.8 130.5 246.9 123.8 245.7 128.3Z"/>
<path fill="#bbe539" stroke-width="1.1" d="M230.8 130.8 229.6 131.2 229.9 133.4 237.1 133.5 237.4 132.0 237.2 131.7Z"/>
<path fill="#89f051" stroke-width="1.1" d="M235.4 128.9 230.8 130.8 237.2 131.7 235.8 129.1Z"/>
<path fill="#5df072" stroke-width="1.1" d="M229.9 133.4 229.6 131.2 228.8 129.9 221.3 131.4 224.3 136.6 229.3 137.0Z"/>
<path fill="#85f154" stroke-width="1.1" d="M237.8 135.2 237.1 133.5 229.9 133.4 229.3 137.0 229.7 137.9 230.0 138.0Z"/>
<path fill="#85f154" stroke-width="1.1" d="M237.4 132.0 237.1 133.5 237.8 135.2 239.6 137.0 242.3 136.4 243.8 132.8 242.3 130.9 238.7 131.3Z"/>
<path fill="#52f07b" stroke-width="1.1" d="M220.2 138.0 222.5 138.0 224.3 136.6 221.3 131.4 219.8 130.8 219.0 133.0 217.9 135.4Z"/>
<path fill="#8af050" stroke-width="1.1" d="M234.2 141.2 237.0 142.2 239.6 137.0 237.8 135.2 230.0 138.0Z"/>
<path fill="#e8ca38" stroke-width="1.1" d="M243.8 132.8 242.3 136.4 244.5 138.4 248.2 139.2 249.9 132.1 247.6 131.9Z"/>
<path fill="#e2d037" stroke-width="1.1" d="M250.9 142.5 254.6 141.5 255.4 140.1 254.1 130.5 252.8 130.5 249.9 132.1 248.2 139.2Z"/>
<path fill="#f3be39" stroke-width="1.1" d="M255.4 140.1 255.9 140.0 256.4 129.0 254.1 130.5Z"/>
<path fill="#50f07c" stroke-width="1.1" d="M215.6 141.5 216.0 141.5 216.5 140.0 216.2 139.2 215.3 141.2Z"/>
<path fill="#73f161" stroke-width="1.1" d="M220.2 138.0 217.9 135.4 216.2 139.2 216.5 140.0 219.5 139.3Z"/>
<path fill="#34e699" stroke-width="1.1" d="M229.3 137.0 224.3 136.6 222.5 138.0 223.0 142.3 225.2 143.5 227.2 142.8 229.7 137.9Z"/>
<path fill="#49ee83" stroke-width="1.1" d="M219.5 139.3 216.5 140.0 216.0 141.5 217.7 144.2 219.9 142.7Z"/>
<path fill="#79f15d" stroke-width="1.1" d="M220.8 142.7 223.0 142.3 222.5 138.0 220.2 138.0 219.5 139.3 219.9 142.7Z"/>
<path fill="#cce037" stroke-width="1.1" d="M238.0 144.2 242.4 143.9 244.5 138.4 242.3 136.4 239.6 137.0 237.0 142.2Z"/>
<path fill="#fa9f2f" stroke-width="1.1" d="M243.3 144.4 249.4 145.2 250.9 142.5 248.2 139.2 244.5 138.4 242.4 143.9Z"/>
<path fill="#dbd637" stroke-width="1.1" d="M254.6 141.5 255.7 142.9 255.9 140.0 255.4 140.1Z"/>
<path fill="#1fd9b9" stroke-width="1.1" d="M213.5 147.0 216.2 146.2 214.3 143.4 212.9 146.5Z"/>
<path fill="#31e59c" stroke-width="1.1" d="M216.2 146.2 217.2 146.0 217.7 144.2 216.0 141.5 215.6 141.5 215.1 141.7 214.3 143.4Z"/>
<path fill="#45ed87" stroke-width="1.1" d="M221.8 145.9 220.8 142.7 219.9 142.7 217.7 144.2 217.2 146.0 219.1 148.1Z"/>
<path fill="#43ec89" stroke-width="1.1" d="M224.4 145.2 225.2 143.5 223.0 142.3 220.8 142.7 221.8 145.9Z"/>
<path fill="#c1e338" stroke-width="1.1" d="M229.7 137.9 227.2 142.8 229.2 145.7 230.6 145.8 234.2 141.2 230.0 138.0Z"/>
<path fill="#d6db36" stroke-width="1.1" d="M237.8 144.7 238.0 144.2 237.0 142.2 234.2 141.2 230.6 145.8 232.0 146.8Z"/>
<path fill="#2ce4a2" stroke-width="1.1" d="M219.3 148.8 222.2 150.3 224.8 149.3 224.4 145.2 221.8 145.9 219.1 148.1Z"/>
<path fill="#d8d936" stroke-width="1.1" d="M224.9 149.3 227.7 149.6 229.2 145.7 227.2 142.8 225.2 143.5 224.4 145.2 224.8 149.3Z"/>
<path fill="#f88827" stroke-width="1.1" d="M243.3 144.4 242.4 143.9 238.0 144.2 237.8 144.7 238.2 150.9 242.9 153.7 243.3 153.8Z"/>
<path fill="#f7a932" stroke-width="1.1" d="M249.4 145.2 243.3 144.4 243.3 153.8 243.5 153.8 243.4 153.0 249.4 148.1Z"/>
<path fill="#f3711e" stroke-width="1.1" d="M254.6 141.5 250.9 142.5 249.4 145.2 249.4 148.1 255.7 143.0 255.7 142.9Z"/>
<path fill="#32aeed" stroke-width="1.1" d="M213.2 148.2 213.5 147.0 212.9 146.5 211.4 149.8Z"/>
<path fill="#20dcb4" stroke-width="1.1" d="M217.2 146.0 216.2 146.2 213.5 147.0 213.2 148.2 215.6 152.9 215.7 152.9 216.4 152.9 219.3 148.8 219.1 148.1Z"/>
<path fill="#f4b938" stroke-width="1.1" d="M231.6 153.9 232.8 153.0 232.0 146.8 230.6 145.8 229.2 145.7 227.7 149.6Z"/>
<path fill="#dad736" stroke-width="1.1" d="M232.8 153.0 238.2 150.9 237.8 144.7 232.0 146.8Z"/>
<path fill="#3be991" stroke-width="1.1" d="M215.6 152.9 213.2 148.2 211.4 149.8 210.7 151.5Z"/>
<path fill="#37e896" stroke-width="1.1" d="M216.4 152.9 218.8 155.2 220.3 154.7 222.2 152.2 222.2 150.3 219.3 148.8Z"/>
<path fill="#b2e83a" stroke-width="1.1" d="M222.2 152.2 225.9 155.7 224.9 149.3 224.8 149.3 222.2 150.3Z"/>
<path fill="#c5e237" stroke-width="1.1" d="M225.9 155.7 226.1 155.8 230.8 156.0 231.6 153.9 227.7 149.6 224.9 149.3Z"/>
<path fill="#39e894" stroke-width="1.1" d="M209.9 153.8 209.7 153.3 207.6 156.1Z"/>
<path fill="#25c0db" stroke-width="1.1" d="M209.9 153.8 212.4 156.8 215.7 152.9 215.6 152.9 210.7 151.5 210.0 153.0 209.7 153.3Z"/>
<path fill="#b2e83a" stroke-width="1.1" d="M222.2 152.2 220.3 154.7 223.0 156.9 224.1 157.1 226.1 155.8 225.9 155.7Z"/>
<path fill="#25c0db" stroke-width="1.1" d="M207.6 158.5 212.4 158.1 212.4 156.8 209.9 153.8 207.6 156.1 206.3 157.6Z"/>
<path fill="#20dab7" stroke-width="1.1" d="M212.4 158.1 212.6 158.4 216.4 159.6 218.1 158.7 218.8 155.2 216.4 152.9 215.7 152.9 212.4 156.8Z"/>
<path fill="#b2e83a" stroke-width="1.1" d="M218.8 155.2 218.1 158.7 219.2 159.1 223.0 156.9 220.3 154.7Z"/>
<path fill="#fb972c" stroke-width="1.1" d="M238.2 150.9 232.8 153.0 231.6 153.9 230.8 156.0 231.7 159.3 238.7 157.7 242.9 153.7Z"/>
<path fill="#1dd3c5" stroke-width="1.1" d="M203.9 161.2 205.2 159.0 203.4 161.3Z"/>
<path fill="#e7cb38" stroke-width="1.1" d="M223.8 159.2 224.1 157.1 223.0 156.9 219.2 159.1 221.4 161.0Z"/>
<path fill="#cfdf36" stroke-width="1.1" d="M231.7 159.3 230.8 156.0 226.1 155.8 224.1 157.1 223.8 159.2 225.6 161.2 227.2 161.7 231.7 161.1Z"/>
<path fill="#f3be39" stroke-width="1.1" d="M238.7 157.7 231.7 159.3 231.7 161.1 233.5 165.6 233.6 165.8 238.8 163.7 239.2 161.6Z"/>
<path fill="#e5cd38" stroke-width="1.1" d="M243.3 153.8 242.9 153.7 238.7 157.7 239.2 161.6 243.8 156.6 243.5 153.8Z"/>
<path fill="#1fc7d4" stroke-width="1.1" d="M207.6 158.5 206.3 157.6 205.2 159.0 203.9 161.2 207.1 162.9Z"/>
<path fill="#20dcb4" stroke-width="1.1" d="M207.3 163.2 207.6 163.5 209.3 163.9 210.9 163.8 211.1 163.1 212.6 158.4 212.4 158.1 207.6 158.5 207.1 162.9Z"/>
<path fill="#50f07c" stroke-width="1.1" d="M216.8 162.3 216.4 159.6 212.6 158.4 211.1 163.1Z"/>
<path fill="#b0e93a" stroke-width="1.1" d="M219.2 159.1 218.1 158.7 216.4 159.6 216.8 162.3 217.0 163.2 220.2 165.3 221.3 165.3 221.7 163.5 221.4 161.0Z"/>
<path fill="#a2ec3f" stroke-width="1.1" d="M221.7 163.5 225.6 161.2 223.8 159.2 221.4 161.0Z"/>
<path fill="#f4ba38" stroke-width="1.1" d="M239.2 161.6 238.8 163.7 243.7 164.0 244.1 159.5 243.8 156.6Z"/>
<path fill="#f3bc38" stroke-width="1.1" d="M243.7 164.0 244.6 165.0 244.1 159.5Z"/>
<path fill="#1dd3c4" stroke-width="1.1" d="M207.3 163.2 207.1 162.9 203.9 161.2 203.4 161.3 202.0 163.0 202.2 165.1Z"/>
<path fill="#1fc8d4" stroke-width="1.1" d="M203.8 168.9 204.4 169.0 207.6 163.5 207.3 163.2 202.2 165.1 202.2 165.2Z"/>
<path fill="#21deb0" stroke-width="1.1" d="M210.9 163.8 213.0 166.3 217.0 163.2 216.8 162.3 211.1 163.1Z"/>
<path fill="#d9d936" stroke-width="1.1" d="M221.3 165.3 222.9 166.7 227.2 161.7 225.6 161.2 221.7 163.5Z"/>
<path fill="#c9e137" stroke-width="1.1" d="M227.2 161.7 222.9 166.7 223.3 167.4 233.5 165.6 231.7 161.1Z"/>
<path fill="#3eea8e" stroke-width="1.1" d="M202.7 169.7 203.8 168.9 202.2 165.2 202.7 169.7Z"/>
<path fill="#26e1a9" stroke-width="1.1" d="M204.9 169.3 208.0 168.7 209.3 163.9 207.6 163.5 204.4 169.0Z"/>
<path fill="#2be3a4" stroke-width="1.1" d="M209.3 163.9 208.0 168.7 209.4 169.1 213.2 167.5 213.0 166.3 210.9 163.8Z"/>
<path fill="#3be991" stroke-width="1.1" d="M213.2 167.5 213.6 167.9 215.8 169.1 220.2 165.3 217.0 163.2 213.0 166.3Z"/>
<path fill="#f5b436" stroke-width="1.1" d="M234.0 168.5 244.4 169.3 244.9 167.9 244.6 165.0 243.7 164.0 238.8 163.7 233.6 165.8Z"/>
<path fill="#aee93b" stroke-width="1.1" d="M221.3 165.3 220.2 165.3 215.8 169.1 216.7 171.0 223.0 173.6 223.3 167.4 222.9 166.7Z"/>
<path fill="#9eed42" stroke-width="1.1" d="M233.1 172.6 233.6 172.1 234.0 168.5 233.6 165.8 233.5 165.6 223.3 167.4 223.0 173.6 223.6 174.7 228.5 174.3Z"/>
<path fill="#f78124" stroke-width="1.1" d="M244.4 169.3 244.9 175.0 245.7 175.1 244.9 167.9Z"/>
<path fill="#1fd9ba" stroke-width="1.1" d="M209.4 169.1 208.0 168.7 204.9 169.3 207.2 173.5 208.2 174.1 210.0 173.3Z"/>
<path fill="#32e69c" stroke-width="1.1" d="M213.6 167.9 213.2 167.5 209.4 169.1 210.0 173.3 211.1 173.3Z"/>
<path fill="#33e69b" stroke-width="1.1" d="M214.2 174.3 216.7 171.0 215.8 169.1 213.6 167.9 211.1 173.3 213.1 174.4Z"/>
<path fill="#fa8f29" stroke-width="1.1" d="M244.9 175.0 244.4 169.3 234.0 168.5 233.6 172.1 241.1 175.7 243.9 175.7Z"/>
<path fill="#47ee85" stroke-width="1.1" d="M202.7 169.7 202.7 169.7 203.2 175.2 203.4 175.0Z"/>
<path fill="#25e1a9" stroke-width="1.1" d="M203.8 168.9 202.7 169.7 203.4 175.0 207.2 173.5 204.9 169.3 204.4 169.0Z"/>
<path fill="#95ee48" stroke-width="1.1" d="M223.0 173.6 216.7 171.0 214.2 174.3 217.0 177.2 222.1 177.7 223.6 174.7Z"/>
<path fill="#2ae3a4" stroke-width="1.1" d="M208.1 178.2 208.2 174.1 207.2 173.5 203.4 175.0 203.2 175.2 203.6 178.7Z"/>
<path fill="#20dcb3" stroke-width="1.1" d="M213.1 174.4 211.1 173.3 210.0 173.3 208.2 174.1 208.1 178.2 209.4 179.6 212.4 176.8Z"/>
<path fill="#1dd0ca" stroke-width="1.1" d="M214.9 178.9 217.0 177.2 214.2 174.3 213.1 174.4 212.4 176.8 214.7 178.9Z"/>
<path fill="#1fd9ba" stroke-width="1.1" d="M214.7 178.9 212.4 176.8 209.4 179.6 209.5 179.8 210.5 180.9Z"/>
<path fill="#1fd8bb" stroke-width="1.1" d="M222.1 178.1 222.1 177.7 217.0 177.2 214.9 178.9 215.8 182.8 219.2 184.7Z"/>
<path fill="#a7ec3c" stroke-width="1.1" d="M223.6 174.7 222.1 177.7 222.1 178.1 228.3 183.4 230.2 183.9 228.5 174.3Z"/>
<path fill="#cde036" stroke-width="1.1" d="M230.2 183.9 230.7 184.2 234.3 181.7 233.1 172.6 228.5 174.3Z"/>
<path fill="#f9a330" stroke-width="1.1" d="M234.3 181.7 236.9 182.1 241.1 175.7 233.6 172.1 233.1 172.6Z"/>
<path fill="#39e894" stroke-width="1.1" d="M208.1 178.2 203.6 178.7 203.8 181.4 206.8 182.2 209.5 179.8 209.4 179.6Z"/>
<path fill="#3eea8e" stroke-width="1.1" d="M214.9 178.9 214.7 178.9 210.5 180.9 211.2 182.6 215.8 182.8Z"/>
<path fill="#f26a1c" stroke-width="1.1" d="M241.1 175.7 236.9 182.1 240.1 185.2 240.8 185.2 243.9 180.5 243.9 175.7Z"/>
<path fill="#fb9b2e" stroke-width="1.1" d="M244.9 175.0 243.9 175.7 243.9 180.5 246.4 182.1 245.7 175.1Z"/>
<path fill="#39a1f1" stroke-width="1.1" d="M206.8 182.2 203.8 181.4 204.4 187.4 204.6 187.6 206.1 187.5Z"/>
<path fill="#4684f3" stroke-width="1.1" d="M210.5 180.9 209.5 179.8 206.8 182.2 206.1 187.5 207.8 187.8 210.6 184.9 211.2 182.6Z"/>
<path fill="#32aeed" stroke-width="1.1" d="M219.4 186.8 219.2 184.7 215.8 182.8 211.2 182.6 210.6 184.9 217.4 188.2 219.0 187.2Z"/>
<path fill="#21ddb1" stroke-width="1.1" d="M219.7 186.9 222.7 186.4 228.3 183.4 222.1 178.1 219.2 184.7 219.4 186.8Z"/>
<path fill="#81f157" stroke-width="1.1" d="M243.9 180.5 240.8 185.2 244.0 188.2 246.5 183.0 246.4 182.1Z"/>
<path fill="#4678e9" stroke-width="1.1" d="M210.6 184.9 207.8 187.8 210.8 191.7 211.5 192.1 216.8 188.9 217.4 188.2Z"/>
<path fill="#1ed4c3" stroke-width="1.1" d="M228.3 183.4 222.7 186.4 231.0 189.3 230.7 184.2 230.2 183.9Z"/>
<path fill="#91ef4b" stroke-width="1.1" d="M231.7 191.5 234.1 191.3 240.1 185.2 236.9 182.1 234.3 181.7 230.7 184.2 231.0 189.3 231.5 191.2Z"/>
<path fill="#1fd7be" stroke-width="1.1" d="M231.5 191.2 231.0 189.3 222.7 186.4 219.7 186.9 222.8 190.2Z"/>
<path fill="#55f078" stroke-width="1.1" d="M240.1 185.2 234.1 191.3 238.4 193.3 241.9 192.6 244.0 188.2 240.8 185.2Z"/>
<path fill="#418ff3" stroke-width="1.1" d="M210.8 191.7 207.8 187.8 206.1 187.5 204.6 187.6 204.5 187.8 205.0 193.0 205.1 194.4Z"/>
<path fill="#2bb8e3" stroke-width="1.1" d="M220.2 194.0 222.9 190.7 222.8 190.2 219.7 186.9 219.4 186.8 219.0 187.2Z"/>
<path fill="#30b1e9" stroke-width="1.1" d="M228.2 197.7 229.9 196.5 231.7 191.5 231.5 191.2 222.8 190.2 222.9 190.7 223.7 196.4 226.9 197.9Z"/>
<path fill="#466bdf" stroke-width="1.1" d="M211.3 196.1 212.0 194.8 211.5 192.1 210.8 191.7 205.1 194.4 205.6 199.1Z"/>
<path fill="#4670e3" stroke-width="1.1" d="M216.8 188.9 211.5 192.1 212.0 194.8 215.2 195.9 217.7 194.2Z"/>
<path fill="#3f93f3" stroke-width="1.1" d="M220.2 194.0 219.0 187.2 217.4 188.2 216.8 188.9 217.7 194.2 220.3 195.2Z"/>
<path fill="#20c7d5" stroke-width="1.1" d="M221.4 196.4 223.7 196.4 222.9 190.7 220.2 194.0 220.3 195.2Z"/>
<path fill="#4092f3" stroke-width="1.1" d="M217.7 194.2 215.2 195.9 217.2 198.6 219.0 198.6 221.4 196.4 220.3 195.2Z"/>
<path fill="#30e59e" stroke-width="1.1" d="M235.6 200.6 238.5 194.5 238.4 193.3 234.1 191.3 231.7 191.5 229.9 196.5Z"/>
<path fill="#80f157" stroke-width="1.1" d="M238.5 194.5 235.6 200.6 236.9 202.1 239.0 202.4 239.3 198.0 239.7 197.1Z"/>
<path fill="#5ef071" stroke-width="1.1" d="M238.4 193.3 238.5 194.5 239.7 197.1 241.9 192.6Z"/>
<path fill="#4671e4" stroke-width="1.1" d="M209.1 204.9 212.9 200.8 211.3 196.1 205.6 199.1 205.8 201.0Z"/>
<path fill="#4190f3" stroke-width="1.1" d="M215.2 195.9 212.0 194.8 211.3 196.1 212.9 200.8 215.2 201.0 217.2 198.6Z"/>
<path fill="#20dcb3" stroke-width="1.1" d="M219.0 198.6 220.3 202.5 226.8 198.1 226.9 197.9 223.7 196.4 221.4 196.4Z"/>
<path fill="#3a9ff1" stroke-width="1.1" d="M217.2 198.6 215.2 201.0 216.7 203.6 218.5 203.7 220.2 203.1 220.3 202.5 219.0 198.6Z"/>
<path fill="#23c2d9" stroke-width="1.1" d="M220.3 202.5 220.2 203.1 223.7 206.2 226.8 198.1Z"/>
<path fill="#73f161" stroke-width="1.1" d="M232.5 206.9 236.9 202.1 235.6 200.6 229.9 196.5 228.2 197.7 229.7 204.4Z"/>
<path fill="#3e97f2" stroke-width="1.1" d="M205.8 201.0 206.5 208.3 209.2 205.3 209.1 204.9Z"/>
<path fill="#466ade" stroke-width="1.1" d="M209.1 204.9 209.2 205.3 211.9 206.8 214.2 206.9 216.7 203.6 215.2 201.0 212.9 200.8Z"/>
<path fill="#39a0f1" stroke-width="1.1" d="M223.7 206.2 224.0 206.9 224.0 206.9 229.7 204.4 228.2 197.7 226.9 197.9 226.8 198.1Z"/>
<path fill="#4670e4" stroke-width="1.1" d="M218.5 203.7 216.7 203.6 214.2 206.9 217.8 210.0 219.0 209.3Z"/>
<path fill="#1ccbd1" stroke-width="1.1" d="M223.7 206.2 220.2 203.1 218.5 203.7 219.0 209.3 222.9 208.4 224.0 206.9Z"/>
<path fill="#1dd0c9" stroke-width="1.1" d="M232.5 208.7 232.5 206.9 229.7 204.4 224.0 206.9 228.7 209.6 231.9 209.0Z"/>
<path fill="#54f079" stroke-width="1.1" d="M236.9 202.1 232.5 206.9 232.5 208.7 237.0 212.6 237.0 212.6 238.3 212.4 239.0 202.4Z"/>
<path fill="#3b9cf2" stroke-width="1.1" d="M208.9 213.8 212.0 213.5 211.9 206.8 209.2 205.3 206.5 208.3 207.0 213.0 206.9 213.2Z"/>
<path fill="#4587f4" stroke-width="1.1" d="M214.2 206.9 211.9 206.8 212.0 213.5 213.4 214.2 217.1 212.9 217.8 210.0Z"/>
<path fill="#37a5f0" stroke-width="1.1" d="M222.9 208.4 219.0 209.3 217.8 210.0 217.1 212.9 220.7 216.5 224.3 213.6Z"/>
<path fill="#3a9ff1" stroke-width="1.1" d="M224.0 206.9 224.0 206.9 222.9 208.4 224.3 213.6 226.3 213.9 228.7 209.6Z"/>
<path fill="#47ee85" stroke-width="1.1" d="M228.7 209.6 226.3 213.9 228.9 216.0 231.9 209.0Z"/>
<path fill="#63f06e" stroke-width="1.1" d="M228.9 216.0 230.2 218.2 237.0 212.6 232.5 208.7 231.9 209.0Z"/>
<path fill="#3e95f2" stroke-width="1.1" d="M206.2 219.2 207.7 219.2 209.2 217.9 208.9 213.8 206.9 213.2 205.2 217.8Z"/>
<path fill="#467ced" stroke-width="1.1" d="M212.0 213.5 208.9 213.8 209.2 217.9 212.6 219.4 213.5 219.3 213.4 214.2Z"/>
<path fill="#434bb9" stroke-width="1.1" d="M217.1 212.9 213.4 214.2 213.5 219.3 216.0 221.5 220.7 221.8 220.7 216.5Z"/>
<path fill="#38a4f0" stroke-width="1.1" d="M226.3 213.9 224.3 213.6 220.7 216.5 220.7 221.8 222.8 224.2 226.4 225.7 229.9 222.1 230.2 218.2 228.9 216.0Z"/>
<path fill="#418ef3" stroke-width="1.1" d="M204.9 221.6 205.6 221.1 206.2 219.2 205.2 217.8 203.9 221.5Z"/>
<path fill="#466fe2" stroke-width="1.1" d="M209.2 217.9 207.7 219.2 209.5 221.7 212.6 219.4Z"/>
<path fill="#4bef80" stroke-width="1.1" d="M229.9 222.1 236.4 222.3 237.0 212.6 237.0 212.6 230.2 218.2Z"/>
<path fill="#74f160" stroke-width="1.1" d="M236.4 222.3 236.9 222.5 238.3 213.0 238.3 212.4 237.0 212.6Z"/>
<path fill="#418ef3" stroke-width="1.1" d="M209.5 221.7 207.7 219.2 206.2 219.2 205.6 221.1 208.7 223.3 209.1 223.0Z"/>
<path fill="#4678ea" stroke-width="1.1" d="M216.0 221.5 213.5 219.3 212.6 219.4 209.5 221.7 209.1 223.0 212.6 224.3 215.7 221.8Z"/>
<path fill="#4682f2" stroke-width="1.1" d="M204.1 227.0 204.7 226.5 204.9 221.6 203.9 221.5 202.5 225.2Z"/>
<path fill="#4092f3" stroke-width="1.1" d="M208.7 223.3 205.6 221.1 204.9 221.6 204.7 226.5 207.7 225.3Z"/>
<path fill="#4666db" stroke-width="1.1" d="M212.6 224.3 209.1 223.0 208.7 223.3 207.7 225.3 211.5 228.4 211.9 228.5Z"/>
<path fill="#4679eb" stroke-width="1.1" d="M202.5 225.2 200.6 230.5 201.3 230.9 203.4 229.6 204.1 227.0Z"/>
<path fill="#455ed3" stroke-width="1.1" d="M214.3 229.0 215.7 221.8 212.6 224.3 211.9 228.5 212.2 228.7Z"/>
<path fill="#1ed5c1" stroke-width="1.1" d="M220.7 221.8 216.0 221.5 215.7 221.8 214.3 229.0 216.1 229.5 222.8 224.2Z"/>
<path fill="#b0e93a" stroke-width="1.1" d="M236.4 222.3 229.9 222.1 226.4 225.7 228.4 232.8 235.1 235.5 236.9 222.5Z"/>
<path fill="#4676e8" stroke-width="1.1" d="M207.7 225.3 204.7 226.5 204.1 227.0 203.4 229.6 206.3 230.9 211.5 228.4Z"/>
<path fill="#3d99f2" stroke-width="1.1" d="M201.3 230.9 200.6 230.5 199.5 233.5 201.0 232.6Z"/>
<path fill="#4488f4" stroke-width="1.1" d="M211.9 228.5 211.5 228.4 206.3 230.9 208.8 234.7 210.0 235.6 210.8 235.6 212.2 228.7Z"/>
<path fill="#3c9bf2" stroke-width="1.1" d="M214.3 229.0 212.2 228.7 210.8 235.6 211.8 236.2 215.0 235.0 216.5 231.8 216.1 229.5Z"/>
<path fill="#21dfaf" stroke-width="1.1" d="M222.8 224.2 216.1 229.5 216.5 231.8 225.6 235.2 228.4 232.8 226.4 225.7Z"/>
<path fill="#3f93f3" stroke-width="1.1" d="M203.8 235.5 208.8 234.7 206.3 230.9 203.4 229.6 201.3 230.9 201.0 232.6 201.7 234.3Z"/>
<path fill="#1dd0c9" stroke-width="1.1" d="M215.0 235.0 220.9 238.7 224.7 236.3 225.6 235.2 216.5 231.8Z"/>
<path fill="#4685f4" stroke-width="1.1" d="M201.0 232.6 199.5 233.5 197.4 239.2 198.4 240.0 200.3 239.0 200.9 238.1 201.7 234.3Z"/>
<path fill="#4679ea" stroke-width="1.1" d="M200.9 238.1 205.5 238.9 203.8 235.5 201.7 234.3Z"/>
<path fill="#4453c4" stroke-width="1.1" d="M205.5 238.9 205.8 239.2 206.4 239.2 210.0 235.6 208.8 234.7 203.8 235.5Z"/>
<path fill="#4091f3" stroke-width="1.1" d="M200.3 239.0 203.8 241.6 205.8 239.2 205.5 238.9 200.9 238.1Z"/>
<path fill="#467eef" stroke-width="1.1" d="M210.8 235.6 210.0 235.6 206.4 239.2 208.8 242.7 211.0 240.5 212.1 237.5 211.8 236.2Z"/>
<path fill="#1ccdce" stroke-width="1.1" d="M212.1 237.5 218.0 243.3 220.9 238.7 215.0 235.0 211.8 236.2Z"/>
<path fill="#4092f3" stroke-width="1.1" d="M198.3 243.1 198.3 243.0 198.4 240.0 197.4 239.2 196.0 243.0 195.8 244.2Z"/>
<path fill="#4680f0" stroke-width="1.1" d="M198.4 240.0 198.3 243.0 203.5 243.5 203.8 241.6 200.3 239.0Z"/>
<path fill="#438af4" stroke-width="1.1" d="M206.4 239.2 205.8 239.2 203.8 241.6 203.5 243.5 203.7 243.7 205.3 245.1 208.8 242.8 208.8 242.7Z"/>
<path fill="#1ccdcf" stroke-width="1.1" d="M208.8 242.7 208.8 242.8 212.8 246.7 213.4 246.8 216.3 246.0 211.0 240.5Z"/>
<path fill="#1ccbd1" stroke-width="1.1" d="M211.0 240.5 216.3 246.0 217.5 245.9 218.0 243.3 212.1 237.5Z"/>
<path fill="#5cf073" stroke-width="1.1" d="M228.4 232.8 225.6 235.2 224.7 236.3 226.1 242.8 231.4 244.5 234.2 241.3 235.1 235.5Z"/>
<path fill="#5a58b8" stroke-width="1.1" d="M203.7 243.7 203.5 243.5 198.3 243.0 198.3 243.1 199.4 245.8 200.3 246.3 201.0 246.0 201.1 246.6Z"/>
<path fill="#1dd0c9" stroke-width="1.1" d="M217.5 245.9 218.4 246.9 222.6 250.4 226.1 242.8 224.7 236.3 220.9 238.7 218.0 243.3Z"/>
<path fill="#55f078" stroke-width="1.1" d="M222.6 250.4 222.8 250.7 229.2 251.9 231.4 244.5 226.1 242.8Z"/>
<path fill="#5a58b8" stroke-width="1.1" d="M199.4 245.8 198.3 243.1 195.8 244.2 195.6 246.0 197.4 247.8 198.7 247.2Z"/>
<path fill="#5a58b8" stroke-width="0.6" d="M202.3 249.4 201.1 247.0 201.4 250.6ZM199.4 245.8 198.7 247.2 200.3 246.3Z"/>
<path fill="#5a58b8" stroke-width="1.1" d="M202.3 249.4 205.6 248.0 205.3 245.1 203.7 243.7 201.1 246.6 201.1 247.0Z"/>
<path fill="#5a58b8" stroke-width="1.1" d="M208.8 242.8 205.3 245.1 205.6 248.0 206.3 248.3 212.8 246.7Z"/>
<path fill="#9bed44" stroke-width="0.6" d="M231.4 244.5 229.2 251.9 232.3 254.4 234.0 255.1 234.0 243.0 234.2 241.3Z"/>
<path fill="#5a58b8" stroke-width="0.6" d="M195.6 246.0 194.5 254.2 196.7 256.9 196.7 256.9 197.0 256.7 197.0 248.0 197.4 247.8Z"/>
<path fill="#5a58b8" stroke-width="0.6" d="M206.3 248.3 207.0 250.4 210.5 253.7 213.4 246.8 212.8 246.7Z"/>
<path fill="#5a58b8" stroke-width="0.6" d="M207.0 250.4 206.3 248.3 205.6 248.0 202.3 249.4 201.4 250.6 201.8 254.7 203.7 254.4Z"/>
<path fill="#34abef" stroke-width="0.6" d="M218.4 246.9 217.5 245.9 216.3 246.0 213.4 246.8 210.5 253.7 210.8 255.2 212.6 255.2Z"/>
<path fill="#3d98f2" stroke-width="0.6" d="M221.3 253.5 222.8 250.7 222.6 250.4 218.4 246.9 212.6 255.2 214.8 255.6Z"/>
<path fill="#5a58b8" stroke-width="0.6" d="M196.2 257.7 196.7 256.9 194.5 254.2 194.1 257.2Z"/>
<path fill="#5a58b8" stroke-width="0.6" d="M210.8 255.2 210.5 253.7 207.0 250.4 203.7 254.4 210.4 255.8Z"/>
<path fill="#5a58b8" stroke-width="0.6" d="M195.4 259.3 195.8 258.9 196.2 257.7 194.1 257.2 193.8 259.3Z"/>
<path fill="#5a58b8" stroke-width="0.6" d="M203.7 254.4 201.8 254.7 202.1 257.9 209.1 259.6 209.8 258.5 210.4 255.8Z"/>
<path fill="#34abef" stroke-width="0.6" d="M221.2 261.3 221.3 253.5 214.8 255.6 216.8 261.3Z"/>
<path fill="#4587f4" stroke-width="0.6" d="M216.8 261.3 214.8 255.6 212.6 255.2 210.8 255.2 210.4 255.8 209.8 258.5 216.7 261.4Z"/>
<path fill="#77f15e" stroke-width="0.6" d="M223.0 263.3 232.3 254.4 229.2 251.9 222.8 250.7 221.3 253.5 221.2 261.3Z"/>
<path fill="#5a58b8" stroke-width="0.6" d="M195.4 259.3 193.8 259.3 193.4 262.5Z"/>
<path fill="#5a58b8" stroke-width="0.6" d="M202.3 260.4 202.8 266.1 203.8 266.3 207.0 265.4 207.9 263.9ZM196.7 256.9 196.7 256.9 196.2 257.7 195.8 258.9 197.0 260.4 197.0 257.1Z"/>
<path fill="#5a58b8" stroke-width="0.6" d="M207.9 263.9 208.6 263.2 209.1 259.6 202.1 257.9 202.3 260.4ZM196.7 256.9 197.0 257.1 197.0 256.7Z"/>
<path fill="#4685f4" stroke-width="0.6" d="M209.8 258.5 209.1 259.6 208.6 263.2 213.9 264.9 216.7 261.4Z"/>
<path fill="#50f07c" stroke-width="0.6" d="M234.0 264.2 234.0 255.1 232.3 254.4 223.0 263.3 223.6 265.3 232.1 265.8Z"/>
<path fill="#3f93f3" stroke-width="0.6" d="M213.9 264.9 215.0 268.1 222.0 268.6 223.6 265.3 223.0 263.3 221.2 261.3 216.8 261.3 216.7 261.4Z"/>
<path fill="#5a58b8" stroke-width="0.6" d="M195.8 258.9 195.4 259.3 193.4 262.5 193.0 265.5 194.7 270.9 197.0 270.6 197.0 260.4Z"/>
<path fill="#37a4f0" stroke-width="0.6" d="M208.6 263.2 207.9 263.9 207.0 265.4 209.2 270.1 209.8 270.4 213.0 270.7 215.0 268.1 213.9 264.9Z"/>
<path fill="#5a58b8" stroke-width="0.6" d="M191.9 275.0 192.4 274.9 194.7 270.9 193.0 265.5 192.0 273.0 191.7 275.0Z"/>
<path fill="#5a58b8" stroke-width="0.6" d="M202.8 266.1 203.0 268.0 202.6 273.8 202.6 273.8 203.4 273.3 203.8 266.3Z"/>
<path fill="#5a58b8" stroke-width="0.6" d="M207.0 265.4 203.8 266.3 203.4 273.3 204.8 273.1 209.2 270.1Z"/>
<path fill="#51f07b" stroke-width="0.6" d="M222.5 272.0 226.2 277.0 226.5 277.3 228.2 277.6 232.0 267.5 232.1 265.8 223.6 265.3 222.0 268.6Z"/>
<path fill="#2ce4a2" stroke-width="0.6" d="M234.0 270.0 234.0 264.2 232.1 265.8 232.0 267.5Z"/>
<path fill="#22c3d8" stroke-width="0.6" d="M214.5 274.7 215.7 275.0 222.5 272.0 222.0 268.6 215.0 268.1 213.0 270.7Z"/>
<path fill="#57f077" stroke-width="0.6" d="M232.0 267.5 228.2 277.6 231.6 279.8 234.0 279.2 234.0 273.0 234.0 270.0Z"/>
<path fill="#5a58b8" stroke-width="0.6" d="M202.6 273.8 202.6 273.8 202.6 274.0ZM194.7 270.9 192.4 274.9 197.0 278.8 197.0 270.6Z"/>
<path fill="#5a58b8" stroke-width="0.6" d="M204.8 273.1 207.7 275.3 209.4 275.5 209.8 270.4 209.2 270.1Z"/>
<path fill="#37a4f0" stroke-width="0.6" d="M209.4 275.5 211.4 277.5 214.5 274.7 213.0 270.7 209.8 270.4Z"/>
<path fill="#5a58b8" stroke-width="0.6" d="M202.6 273.8 202.6 274.0 202.0 282.0 203.6 284.2 207.7 275.3 204.8 273.1 203.4 273.3Z"/>
<path fill="#5a58b8" stroke-width="0.6" d="M207.7 275.3 203.6 284.2 207.6 290.8 208.6 290.3 211.4 277.5 209.4 275.5Z"/>
<path fill="#3b9df1" stroke-width="0.6" d="M217.2 278.0 226.2 277.0 222.5 272.0 215.7 275.0Z"/>
<path fill="#21c5d6" stroke-width="0.6" d="M211.4 277.5 208.6 290.3 215.7 289.3 215.9 288.8 217.2 278.0 215.7 275.0 214.5 274.7Z"/>
<path fill="#21c5d7" stroke-width="0.6" d="M217.2 278.0 215.9 288.8 226.5 277.3 226.2 277.0Z"/>
<path fill="#5a58b8" stroke-width="0.6" d="M190.4 285.3 197.0 280.3 197.0 278.8 192.4 274.9 191.9 275.0 191.7 275.5 190.3 285.2Z"/>
<path fill="#5a58b8" stroke-width="0.6" d="M190.2 288.1 190.4 285.3 190.3 285.2 189.9 288.3Z"/>
<path fill="#5a58b8" stroke-width="0.6" d="M197.0 291.8 197.0 280.3 190.4 285.3 190.2 288.1ZM201.2 294.1 204.9 294.8 207.6 290.8 203.6 284.2 202.0 282.0 201.1 294.0Z"/>
<path fill="#3feb8e" stroke-width="0.6" d="M226.5 277.3 215.9 288.8 215.7 289.3 229.7 296.0 231.6 279.8 228.2 277.6Z"/>
<path fill="#6bf167" stroke-width="0.6" d="M231.6 279.8 229.7 296.0 231.8 298.8 236.5 297.3 234.0 288.0 234.0 279.2Z"/>
<path fill="#5a58b8" stroke-width="0.6" d="M190.2 288.1 189.9 288.3 189.0 295.0 187.8 298.5 198.4 295.0 197.0 295.0 197.0 291.8ZM201.2 294.1 201.1 294.0 201.1 294.1Z"/>
<path fill="#1ccdce" stroke-width="0.6" d="M225.6 315.4 227.4 315.0 231.8 298.8 229.7 296.0 215.7 289.3 208.6 290.3 207.6 290.8 204.9 294.8 205.5 310.5 205.8 311.6 207.2 312.6 207.7 312.7 208.0 311.0 212.0 309.0 211.5 313.3Z"/>
<path fill="#1dcbd1" stroke-width="0.6" d="M205.5 310.5 204.9 294.8 201.2 294.1 201.1 294.1 201.0 295.0 198.4 295.0 187.8 298.5 186.5 302.5Z"/>
<path fill="#4ff07d" stroke-width="0.6" d="M231.8 298.8 227.4 315.0 238.7 322.4 243.9 322.0 244.0 321.0 238.0 303.0 236.5 297.3Z"/>
<path fill="#43ec89" stroke-width="0.6" d="M192.0 318.4 205.8 311.6 205.5 310.5 186.5 302.5 183.0 313.0 181.9 318.5Z"/>
<path fill="#3cea90" stroke-width="0.6" d="M207.2 312.6 205.8 311.6 192.0 318.4 192.9 322.9 201.3 332.4 205.3 324.3 207.1 313.5Z"/>
<path fill="#1fc8d4" stroke-width="0.6" d="M185.2 341.2 192.8 342.1 192.9 322.9 192.0 318.4 181.9 318.5 181.3 321.5Z"/>
<path fill="#2ae3a4" stroke-width="0.6" d="M201.3 332.4 192.9 322.9 192.8 342.1 193.2 342.3 200.1 337.7Z"/>
<path fill="#32aded" stroke-width="0.6" d="M213.3 331.7 210.3 323.1 209.5 329.9 211.9 331.9ZM207.1 313.5 205.3 324.3 205.5 324.6 207.4 314.3Z"/>
<path fill="#37a4f0" stroke-width="0.6" d="M207.2 312.6 207.1 313.5 207.4 314.3 207.7 312.7ZM213.3 331.7 218.9 333.2 225.6 315.4 211.5 313.3 210.3 323.1Z"/>
<path fill="#26e1a8" stroke-width="0.6" d="M174.7 345.7 185.2 341.2 181.3 321.5 180.0 328.0 174.0 343.0 173.4 345.3Z"/>
<path fill="#1fd7bd" stroke-width="0.6" d="M205.3 324.3 201.3 332.4 200.1 337.7 203.0 337.8 205.5 324.6Z"/>
<path fill="#30b1e9" stroke-width="0.6" d="M211.9 331.9 209.5 329.9 209.0 334.2Z"/>
<path fill="#39a1f1" stroke-width="0.6" d="M219.6 338.1 218.9 333.2 213.3 331.7 211.9 331.9 209.0 334.2 208.5 339.1Z"/>
<path fill="#88f052" stroke-width="0.6" d="M219.6 338.1 222.6 342.3 237.1 329.6 238.7 322.4 227.4 315.0 225.6 315.4 218.9 333.2Z"/>
<path fill="#27e2a7" stroke-width="0.6" d="M240.6 346.4 242.0 343.0 243.9 322.0 238.7 322.4 237.1 329.6Z"/>
<path fill="#38e894" stroke-width="0.6" d="M223.6 350.3 227.9 353.9 240.0 347.9 240.6 346.4 237.1 329.6 222.6 342.3Z"/>
<path fill="#81f157" stroke-width="0.6" d="M212.0 351.3 212.7 351.8 223.6 350.3 222.6 342.3 219.6 338.1 208.5 339.1 208.4 339.7Z"/>
<path fill="#22e0ad" stroke-width="0.6" d="M200.1 337.7 193.2 342.3 195.3 346.7 199.5 347.8 203.0 338.0 203.0 337.8ZM212.0 351.3 208.4 339.7 208.0 343.0 205.6 349.5Z"/>
<path fill="#29e2a6" stroke-width="0.6" d="M193.2 342.3 192.8 342.1 185.2 341.2 174.7 345.7 176.6 353.6 183.3 356.6 194.8 354.7 195.1 354.5 195.3 346.7Z"/>
<path fill="#5ff070" stroke-width="0.6" d="M201.1 365.5 207.1 361.8 212.7 351.8 212.0 351.3 205.6 349.5 200.3 364.1ZM195.3 346.7 195.1 354.5 196.3 356.7 199.5 347.8Z"/>
<path fill="#1dd0c9" stroke-width="0.6" d="M176.4 355.2 176.6 353.6 174.7 345.7 173.4 345.3 169.0 363.0 170.2 365.6Z"/>
<path fill="#1dd0c8" stroke-width="0.6" d="M194.8 354.7 183.3 356.6 186.8 361.6Z"/>
<path fill="#1fd9b9" stroke-width="0.6" d="M228.2 356.8 235.9 358.9 236.0 358.0 240.0 347.9 227.9 353.9Z"/>
<path fill="#1dd0c9" stroke-width="0.6" d="M186.8 361.6 183.3 356.6 176.6 353.6 176.4 355.2 180.7 362.8 186.1 365.1Z"/>
<path fill="#3be992" stroke-width="0.6" d="M195.1 354.5 194.8 354.7 186.8 361.6 186.1 365.1 188.0 369.1 197.3 371.5 199.5 371.3 201.1 365.5 200.3 364.1 200.0 365.0 194.0 363.0 196.3 356.7Z"/>
<path fill="#21dfae" stroke-width="0.6" d="M216.2 365.3 226.5 362.5 227.4 361.2 228.0 359.5 228.2 356.8 227.9 353.9 223.6 350.3 212.7 351.8 207.1 361.8Z"/>
<path fill="#6cf167" stroke-width="0.6" d="M228.2 356.8 228.0 359.5 235.6 363.4 235.9 358.9Z"/>
<path fill="#1dd1c7" stroke-width="0.6" d="M175.3 371.1 180.7 362.8 176.4 355.2 170.2 365.6 171.8 369.0Z"/>
<path fill="#1ec9d3" stroke-width="0.6" d="M180.7 362.8 175.3 371.1 178.3 374.3 188.0 369.1 186.1 365.1Z"/>
<path fill="#1fd7bd" stroke-width="0.6" d="M216.2 365.3 207.1 361.8 201.1 365.5 199.5 371.3 203.1 376.3 209.4 377.8 213.5 372.8Z"/>
<path fill="#3feb8d" stroke-width="0.6" d="M225.3 369.2 226.5 362.5 216.2 365.3 213.5 372.8Z"/>
<path fill="#79f15d" stroke-width="0.6" d="M228.0 359.5 227.4 361.2 235.1 370.8 235.6 363.4Z"/>
<path fill="#42ec8a" stroke-width="0.6" d="M225.6 380.7 234.8 374.1 235.0 373.0 235.1 370.8 227.4 361.2 226.5 362.5 225.3 369.2Z"/>
<path fill="#56f077" stroke-width="0.6" d="M209.4 377.8 213.5 380.7 225.3 381.7 225.6 380.7 225.3 369.2 213.5 372.8Z"/>
<path fill="#1fd7bd" stroke-width="0.6" d="M178.0 391.3 178.2 390.8 178.3 374.3 175.3 371.1 171.8 369.0 176.0 378.0 176.0 391.7Z"/>
<path fill="#1ccece" stroke-width="0.6" d="M178.3 374.3 178.2 390.8 197.3 371.5 188.0 369.1Z"/>
<path fill="#8df04e" stroke-width="0.6" d="M225.6 380.7 225.3 381.7 231.4 390.8 234.8 374.1Z"/>
<path fill="#101418" stroke-width="0.6" d="M199.5 371.3 197.3 371.5 178.2 390.8 178.0 391.3 184.0 395.1 198.2 390.1 203.1 376.3Z"/>
<path fill="#4ff07d" stroke-width="0.6" d="M203.1 376.3 198.2 390.1 206.7 396.6 211.5 395.3 213.5 380.7 209.4 377.8Z"/>
<path fill="#25e1a9" stroke-width="0.6" d="M225.3 381.7 213.5 380.7 211.5 395.3 222.7 399.3 229.3 398.7 231.0 393.0 231.4 390.8Z"/>
<path fill="#95ee48" stroke-width="0.6" d="M206.7 396.6 198.2 390.1 184.0 395.1 185.6 399.5 193.1 406.1 204.7 400.9 206.1 398.6Z"/>
<path fill="#1dd1c8" stroke-width="0.6" d="M213.5 409.3 222.7 399.3 211.5 395.3 206.7 396.6 206.1 398.6Z"/>
<path fill="#1ccfcc" stroke-width="0.6" d="M174.8 397.4 170.0 416.0 172.0 416.0Z"/>
<path fill="#3be991" stroke-width="0.6" d="M193.1 406.1 196.2 413.4 205.3 409.5 204.7 400.9Z"/>
<path fill="#1ec9d2" stroke-width="0.6" d="M204.7 400.9 205.3 409.5 212.1 412.5 213.5 409.3 206.1 398.6Z"/>
<path fill="#1ec9d3" stroke-width="0.6" d="M178.0 391.3 176.0 391.7 176.0 393.0 174.8 397.4 172.0 416.0 172.1 416.0 181.6 410.7 185.6 399.5 184.0 395.1Z"/>
<path fill="#2ee4a0" stroke-width="0.6" d="M181.6 410.7 184.4 414.8 196.0 415.2 196.2 413.4 193.1 406.1 185.6 399.5Z"/>
<path fill="#2de4a1" stroke-width="0.6" d="M213.5 409.3 212.1 412.5 213.1 416.0 224.0 416.0 229.3 398.7 222.7 399.3Z"/>
<path fill="#2be3a4" stroke-width="0.6" d="M212.1 412.5 205.3 409.5 196.2 413.4 196.0 415.2 196.1 416.0 213.1 416.0Z"/>
<path fill="#1fd7bd" stroke-width="0.6" d="M184.4 414.8 181.6 410.7 172.1 416.0 184.3 416.0Z"/>
<path fill="#32e69b" stroke-width="0.6" d="M184.3 416.0 196.1 416.0 196.0 415.2 184.4 414.8Z"/>
</g>
<path fill="#0c0c14" d="M182.3 334.7 182.3 334.9 183.6 332.8 183.1 336.0ZM181.5 378.4 180.9 380.9 177.5 379.7 179.0 379.0ZM179.5 371.5 176.5 373.1 179.5 370.3 178.4 371.9ZM181.1 406.5 181.2 405.8 180.6 403.5 180.4 406.2ZM179.8 319.3 181.1 316.7 182.9 319.4 180.3 317.3ZM178.9 308.7 178.8 306.2 179.5 306.2 176.9 308.0ZM197.7 326.1 200.0 325.0 200.1 325.2 197.8 323.6ZM171.6 388.9 168.5 387.4 170.6 387.5 171.4 389.7ZM190.0 412.4 190.4 410.0 187.6 413.4 190.9 411.5ZM175.5 321.3 174.8 321.7 174.0 321.8 173.4 322.6ZM166.6 359.4 165.6 358.9 166.3 358.4 164.5 357.5ZM179.5 336.4 178.0 336.2 180.5 336.6 181.0 338.9ZM178.8 339.0 180.1 342.3 181.2 340.3 179.8 340.5ZM160.9 359.0 159.0 358.4 162.7 361.8 161.1 358.1ZM187.1 340.6 187.5 342.1 188.0 338.5 186.7 338.7ZM170.8 379.2 173.0 381.7 170.6 379.3 171.3 381.8ZM170.2 402.3 169.2 402.1 168.7 401.9 169.1 401.6ZM186.0 383.8 188.5 383.4 186.8 383.6 185.4 384.0ZM175.3 398.0 172.6 396.9 171.9 397.1 172.8 399.5ZM178.5 325.7 178.4 323.8 181.7 327.3 179.7 326.2ZM203.5 313.2 201.1 312.6 202.6 314.3 200.2 314.2ZM188.4 340.5 189.6 343.2 188.2 339.8 192.2 342.6ZM205.2 315.0 206.6 314.9 204.9 311.6 202.9 314.2ZM167.4 354.8 169.4 354.9 169.8 356.8 167.8 357.7ZM195.7 398.6 192.4 399.5 195.7 397.1 194.9 397.0ZM183.4 410.4 186.8 411.7 187.0 410.5 184.4 410.3ZM188.4 308.9 189.5 312.3 189.7 308.7 189.7 310.6ZM180.7 354.7 181.6 355.6 180.9 356.3 181.8 354.6ZM195.7 397.3 194.8 394.4 197.0 397.1 195.4 394.4ZM197.8 347.2 196.4 346.5 197.7 347.3 195.1 347.6ZM199.5 310.1 199.6 307.7 200.2 309.4 201.4 311.2ZM178.2 346.3 175.3 346.6 176.2 349.1 177.8 348.3ZM182.2 303.7 181.0 307.5 182.8 307.2 183.6 305.4ZM177.6 393.4 175.6 393.2 179.1 392.6 178.4 393.0ZM183.1 307.2 181.5 306.3 185.3 306.0 184.5 308.5ZM180.9 389.5 178.6 389.3 181.8 387.1 180.5 389.4ZM184.0 305.9 184.5 303.9 185.5 305.3 186.8 303.0ZM179.7 372.5 180.4 372.2 181.2 370.8 182.6 371.8ZM183.8 407.5 184.9 409.5 184.6 409.4 186.0 406.2ZM189.1 415.8 191.1 413.6 190.0 413.2 188.1 411.8ZM182.4 349.5 180.6 350.0 180.7 348.3 180.9 351.2ZM169.3 357.8 168.7 359.4 170.7 358.1 168.9 358.1ZM170.2 404.9 171.4 402.7 169.9 403.7 172.1 404.1ZM171.4 352.5 172.0 349.7 175.2 349.2 174.9 350.0ZM166.6 350.9 167.2 352.3 167.9 351.1 166.9 352.9ZM204.0 319.0 203.3 320.6 204.6 318.3 206.1 321.6ZM180.7 299.3 180.1 301.0 179.3 298.4 180.6 300.6ZM198.2 323.6 198.1 325.4 196.1 324.0 197.4 323.2ZM174.5 304.5 177.3 303.5 175.5 304.5 176.7 302.1ZM179.8 317.4 179.3 316.9 177.7 318.2 180.2 317.1ZM195.4 351.3 192.2 349.4 195.2 348.4 195.7 350.6ZM176.2 323.6 175.7 323.1 172.6 321.3 176.2 323.9ZM176.3 370.1 179.7 371.8 180.1 371.9 179.2 372.7ZM177.2 353.0 179.0 353.1 178.3 353.6 178.7 356.5ZM184.9 394.8 186.2 393.6 186.6 394.6 184.2 391.9ZM190.9 370.4 191.0 370.6 189.9 370.4 189.4 368.1ZM198.3 297.7 198.3 300.1 197.8 298.9 197.5 297.5ZM191.5 349.0 192.0 350.5 191.5 349.9 190.7 347.9ZM182.5 330.2 182.0 328.5 180.9 328.2 179.1 330.1ZM161.0 363.9 162.6 362.1 161.9 360.5 161.1 362.4ZM194.2 381.4 196.1 381.9 193.6 383.6 192.6 381.0ZM196.9 322.4 194.1 322.1 195.4 323.1 195.8 324.3ZM189.4 372.7 186.8 371.8 186.2 370.8 187.3 369.8ZM174.8 377.0 172.1 379.3 174.6 377.3 172.3 378.2ZM183.1 415.1 183.7 412.1 180.8 414.5 182.3 412.0ZM201.2 306.3 202.9 303.9 201.9 303.2 202.3 305.0ZM164.0 407.3 160.6 409.8 160.7 410.2 162.2 407.7ZM183.1 410.7 182.2 413.0 183.6 412.5 182.4 411.4ZM193.4 312.5 196.1 313.1 195.8 313.1 193.7 309.7ZM183.4 311.7 185.2 309.7 185.9 311.2 183.4 307.8ZM178.0 334.9 180.0 331.9 181.1 331.5 181.8 331.6ZM171.4 378.5 173.2 381.4 171.5 378.2 171.9 379.1ZM180.6 408.4 182.2 408.9 181.9 406.0 180.1 409.5ZM196.4 376.4 197.6 379.0 198.2 376.8 197.3 375.5ZM203.7 337.2 203.4 337.9 201.7 336.7 203.3 337.6ZM180.6 389.7 177.4 388.9 177.2 388.3 176.7 390.5ZM178.5 331.7 176.7 332.1 177.6 331.5 176.2 331.5ZM197.7 380.0 196.4 379.2 195.6 379.6 198.5 380.3ZM179.0 362.2 178.1 363.8 178.7 364.5 180.7 362.5ZM186.3 411.5 188.4 413.2 188.5 414.0 189.9 414.3ZM172.3 325.3 170.2 324.2 170.8 325.3 171.0 323.2ZM187.2 389.0 191.3 389.5 187.4 390.6 187.9 388.8ZM164.0 408.9 166.0 406.7 164.5 408.3 166.1 407.1ZM181.3 394.7 182.4 392.5 184.1 392.9 183.9 391.7ZM177.4 391.4 175.2 394.8 177.0 394.6 178.1 391.8ZM165.4 407.7 166.0 408.7 165.9 407.2 162.9 407.1ZM194.8 384.8 195.5 386.3 193.6 384.2 194.5 387.5ZM193.5 405.9 193.9 405.9 193.9 408.9 191.5 408.5ZM196.3 316.9 195.7 315.5 196.7 316.7 195.0 314.5ZM168.4 384.4 171.1 383.8 171.4 381.2 171.3 380.7ZM164.7 395.9 165.0 396.2 167.5 397.0 168.8 397.3ZM176.8 405.1 178.0 404.5 178.2 403.6 176.3 402.4ZM186.5 404.8 184.1 404.7 184.9 404.6 182.8 407.3ZM163.1 412.2 164.7 411.2 160.9 415.2 164.1 411.0ZM168.5 390.3 168.7 386.2 169.3 387.4 169.4 388.0ZM201.8 312.3 205.2 315.7 202.4 313.1 202.2 315.6ZM182.4 393.4 182.1 394.5 181.7 396.3 183.4 395.6ZM203.9 334.1 201.6 332.8 202.4 331.7 204.2 333.0ZM176.0 356.7 172.6 358.4 174.1 357.2 175.2 356.6ZM185.9 377.7 189.8 381.0 186.1 381.0 187.5 379.8ZM199.8 321.8 197.3 323.4 198.1 324.4 199.0 324.7ZM187.1 357.6 186.3 357.7 185.4 356.6 186.2 358.7ZM192.6 368.5 192.5 365.5 191.3 368.0 191.2 368.3ZM168.9 357.5 168.9 358.6 169.4 358.4 166.0 359.0ZM192.5 314.7 193.5 313.7 189.4 313.2 189.8 313.4ZM171.1 359.2 173.6 358.5 171.4 359.8 174.3 357.5ZM187.5 394.1 191.4 391.9 189.6 392.8 189.6 393.4ZM191.6 343.6 191.1 342.0 191.1 345.4 192.1 341.5ZM196.8 343.6 200.9 345.2 199.8 346.5 198.9 344.4ZM191.9 383.5 190.5 384.9 192.7 383.2 193.0 384.1ZM166.1 387.2 166.8 384.4 167.4 387.7 165.8 384.6ZM184.0 300.0 184.0 298.0 184.3 300.8 185.3 300.2ZM184.1 318.9 184.0 319.9 180.8 320.8 183.1 320.0ZM183.1 328.1 180.1 329.4 180.0 330.9 182.4 330.2ZM188.2 381.0 187.9 381.6 188.5 381.4 190.4 382.3ZM171.5 399.8 173.0 399.9 169.9 398.9 170.5 398.2ZM202.6 338.1 201.3 338.5 200.4 338.4 203.3 337.9ZM185.0 389.0 183.1 391.9 181.9 390.3 185.6 392.4ZM166.7 392.3 164.4 394.9 167.7 392.2 167.4 394.3ZM192.9 337.7 193.9 335.4 193.7 335.3 190.5 337.6ZM200.9 300.4 197.6 302.9 198.3 304.1 199.3 300.1ZM186.5 410.1 187.9 411.6 185.4 409.5 184.1 412.5ZM185.1 320.6 185.4 323.3 185.6 321.2 185.1 320.9ZM193.8 305.8 196.6 307.0 194.9 304.9 196.5 306.6ZM174.3 341.7 173.7 340.6 174.7 341.3 175.2 341.5ZM175.2 374.7 176.3 374.6 176.0 372.1 175.7 372.7ZM176.3 360.5 179.3 362.8 177.1 363.3 178.9 363.2ZM191.8 360.0 190.8 362.5 188.9 359.8 188.8 360.3ZM187.6 406.0 185.4 407.0 186.5 407.0 189.3 404.9ZM175.3 317.5 174.5 317.0 173.3 313.6 175.7 315.1ZM168.3 399.4 164.5 402.9 164.5 400.5 165.5 402.9ZM177.8 310.4 180.3 312.0 178.0 309.1 177.1 311.4ZM175.6 354.3 172.6 354.4 175.4 355.9 174.6 357.9ZM197.4 347.8 194.4 348.0 198.1 348.7 196.5 347.7ZM167.5 344.8 168.4 345.8 166.8 345.4 167.7 343.5ZM186.0 335.0 186.2 336.7 188.2 334.4 185.9 334.9ZM166.0 348.2 168.1 348.9 166.6 348.5 169.8 347.7ZM187.1 301.1 186.4 298.7 187.3 298.5 187.7 300.4ZM180.0 307.1 184.0 306.1 183.7 306.3 181.5 305.7ZM174.7 404.6 175.1 404.9 176.7 401.6 176.7 403.3ZM169.5 369.9 172.3 368.4 171.2 369.9 170.5 370.2ZM203.5 325.4 202.2 327.1 200.5 327.2 201.5 328.1ZM180.0 384.6 181.4 384.7 180.8 384.9 181.6 385.7ZM170.4 412.1 170.8 412.5 172.0 414.2 170.3 413.7ZM175.7 356.3 175.0 359.6 173.2 358.1 174.7 358.6ZM197.6 303.7 196.8 299.5 197.2 301.3 196.1 302.3ZM182.9 315.4 180.1 319.7 181.2 317.3 181.4 318.8ZM197.2 382.0 193.5 381.5 195.0 382.4 193.3 381.0ZM191.6 406.5 192.6 406.4 191.2 408.0 192.8 409.0ZM196.4 390.0 195.7 390.1 197.8 388.8 197.2 392.3ZM177.6 390.5 176.4 392.3 176.5 391.8 178.7 390.6ZM167.9 363.5 167.0 363.7 167.7 366.8 169.4 365.9ZM186.9 376.1 183.5 373.7 186.8 376.2 186.9 374.1ZM178.5 386.5 178.8 387.8 177.3 384.8 180.3 387.6ZM175.1 379.7 175.1 379.8 173.0 382.9 176.6 380.5ZM179.1 304.5 179.5 308.5 175.6 306.8 178.0 307.0ZM170.7 386.6 173.0 384.8 173.2 384.5 173.0 387.6ZM167.2 409.5 167.7 406.4 165.2 406.8 165.4 408.4ZM189.1 324.9 190.6 324.3 189.8 327.6 190.9 327.4ZM172.4 341.1 171.6 339.1 172.7 341.5 172.4 338.4ZM191.1 362.8 191.7 362.3 194.5 362.2 191.3 363.9ZM180.1 347.2 181.6 346.2 180.7 345.3 183.0 347.0ZM186.3 326.2 183.3 324.4 184.3 325.4 184.4 324.8ZM173.7 383.5 173.8 380.5 177.7 383.2 176.9 382.1ZM184.5 313.5 181.9 311.7 181.9 312.6 184.1 313.9ZM188.6 400.1 190.4 402.4 188.7 400.3 188.8 399.0ZM208.5 301.1 205.3 302.4 209.0 299.9 208.1 301.2ZM180.1 345.8 181.5 348.2 180.8 347.4 182.4 348.6ZM190.0 313.1 190.8 315.7 189.8 313.2 191.0 312.4ZM179.9 317.5 181.0 315.4 177.6 315.4 177.2 316.9Z"/>
</svg><div class="a" style="left:763px;top:457px;width:7px;height:414px;background:rgba(240,244,250,0.45)"></div>
<div class="a" style="left:766px;top:352px;width:2px;height:519px;background:#9dbde6"></div>
<!-- map controls left map -->
<div class="a" style="left:114px;top:464px;width:23px;height:65px;background:#fff;border-radius:3px;box-shadow:0 0 0 1px rgba(0,0,0,0.12)"></div>
<div class="a" style="left:117px;top:486px;width:17px;height:1px;background:#e6e6e6"></div>
<div class="a" style="left:117px;top:507px;width:17px;height:1px;background:#e6e6e6"></div>
<svg class="a" style="left:120px;top:470px" width="11" height="11"><path d="M5.5 1 V10 M1 5.5 H10" stroke="#111" stroke-width="2"/></svg>
<svg class="a" style="left:120px;top:492px" width="11" height="11"><path d="M1 5.5 H10" stroke="#111" stroke-width="2"/></svg>
<svg class="a" style="left:121px;top:511px" width="9" height="14"><path d="M4.5 0.5 L8 7 H1Z" fill="#222"/><path d="M4.5 13.5 L8 7 H1Z" fill="#ccc"/></svg>
<div class="a" style="left:114px;top:536px;width:23px;height:22px;background:#fff;border-radius:3px;box-shadow:0 0 0 1px rgba(0,0,0,0.12)"></div>
<svg class="a" style="left:118px;top:540px" width="15" height="14"><path d="M1 5 V1 H5 M1 1 L5.5 5.5 M14 5 V1 H10 M14 1 L9.5 5.5 M1 9 V13 H5 M1 13 L5.5 8.5 M14 9 V13 H10 M14 13 L9.5 8.5" fill="none" stroke="#111" stroke-width="1.8"/></svg>
<div class="a" style="left:114px;top:565px;width:23px;height:22px;background:#fff;border-radius:3px;box-shadow:0 0 0 1px rgba(0,0,0,0.12)"></div>
<svg class="a" style="left:119px;top:569px" width="13" height="13"><path d="M3 1 H10 V4.5 H3Z" fill="#111"/><rect x="0.5" y="4.5" width="12" height="5" rx="1.5" fill="#111"/><rect x="3" y="7.5" width="7" height="4.5" fill="#fff" stroke="#111" stroke-width="1.2"/></svg>
<!-- right controls of left map -->
<div class="a" style="left:737px;top:464px;width:23px;height:65px;background:#fff;border-radius:3px;box-shadow:0 0 0 1px rgba(0,0,0,0.12)"></div>
<div class="a" style="left:740px;top:486px;width:17px;height:1px;background:#e6e6e6"></div>
<div class="a" style="left:740px;top:507px;width:17px;height:1px;background:#e6e6e6"></div>
<svg class="a" style="left:743px;top:470px" width="11" height="11"><path d="M5.5 1 V10 M1 5.5 H10" stroke="#111" stroke-width="2"/></svg>
<svg class="a" style="left:743px;top:492px" width="11" height="11"><path d="M1 5.5 H10" stroke="#111" stroke-width="2"/></svg>
<svg class="a" style="left:744px;top:511px" width="9" height="14"><path d="M4.5 0.5 L8 7 H1Z" fill="#222"/><path d="M4.5 13.5 L8 7 H1Z" fill="#ccc"/></svg>
<div class="a" style="left:737px;top:536px;width:23px;height:22px;background:#fff;border-radius:3px;box-shadow:0 0 0 1px rgba(0,0,0,0.12)"></div>
<svg class="a" style="left:741px;top:540px" width="15" height="14"><path d="M1 5 V1 H5 M1 1 L5.5 5.5 M14 5 V1 H10 M14 1 L9.5 5.5 M1 9 V13 H5 M1 13 L5.5 8.5 M14 9 V13 H10 M14 13 L9.5 8.5" fill="none" stroke="#111" stroke-width="1.8"/></svg>
<div class="a" style="left:737px;top:565px;width:23px;height:22px;background:#fff;border-radius:3px;box-shadow:0 0 0 1px rgba(0,0,0,0.12)"></div>
<svg class="a" style="left:742px;top:569px" width="13" height="13"><path d="M3 1 H10 V4.5 H3Z" fill="#111"/><rect x="0.5" y="4.5" width="12" height="5" rx="1.5" fill="#111"/><rect x="3" y="7.5" width="7" height="4.5" fill="#fff" stroke="#111" stroke-width="1.2"/></svg>
<!-- right map controls -->
<div class="a" style="left:1396px;top:464px;width:23px;height:65px;background:#fff;border-radius:3px;box-shadow:0 0 0 1px rgba(0,0,0,0.12)"></div>
<div class="a" style="left:1399px;top:486px;width:17px;height:1px;background:#e6e6e6"></div>
<div class="a" style="left:1399px;top:507px;width:17px;height:1px;background:#e6e6e6"></div>
<svg class="a" style="left:1402px;top:470px" width="11" height="11"><path d="M5.5 1 V10 M1 5.5 H10" stroke="#111" stroke-width="2"/></svg>
<svg class="a" style="left:1402px;top:492px" width="11" height="11"><path d="M1 5.5 H10" stroke="#111" stroke-width="2"/></svg>
<svg class="a" style="left:1403px;top:511px" width="9" height="14"><path d="M4.5 0.5 L8 7 H1Z" fill="#222"/><path d="M4.5 13.5 L8 7 H1Z" fill="#ccc"/></svg>
<div class="a" style="left:1396px;top:536px;width:23px;height:22px;background:#fff;border-radius:3px;box-shadow:0 0 0 1px rgba(0,0,0,0.12)"></div>
<svg class="a" style="left:1400px;top:540px" width="15" height="14"><path d="M1 5 V1 H5 M1 1 L5.5 5.5 M14 5 V1 H10 M14 1 L9.5 5.5 M1 9 V13 H5 M1 13 L5.5 8.5 M14 9 V13 H10 M14 13 L9.5 8.5" fill="none" stroke="#111" stroke-width="1.8"/></svg>
<div class="a" style="left:1396px;top:565px;width:23px;height:22px;background:#fff;border-radius:3px;box-shadow:0 0 0 1px rgba(0,0,0,0.12)"></div>
<svg class="a" style="left:1401px;top:569px" width="13" height="13"><path d="M3 1 H10 V4.5 H3Z" fill="#111"/><rect x="0.5" y="4.5" width="12" height="5" rx="1.5" fill="#111"/><rect x="3" y="7.5" width="7" height="4.5" fill="#fff" stroke="#111" stroke-width="1.2"/></svg>
<!-- scale bars -->
<div class="a" style="left:115px;top:847px;width:58px;height:15px;border:1.5px solid #333;border-top:none;background:rgba(255,255,255,0.75)"></div>
<div class="a tx" style="left:119px;top:851px;font-size:6.5px;color:#444">300 km</div>
<div class="a" style="left:774px;top:847px;width:58px;height:15px;border:1.5px solid #333;border-top:none;background:rgba(255,255,255,0.75)"></div>
<div class="a tx" style="left:778px;top:851px;font-size:6.5px;color:#444">300 km</div>
<!-- attributions -->
<div class="a" style="left:598px;top:856px;width:168px;height:14px;background:rgba(255,255,255,0.7)"></div>
<div class="a tx" style="left:601px;top:859px;font-size:8.5px;color:#333;transform:scaleX(1.03)">© OpenStreetMap contributors © CARTO</div>
<div class="a" style="left:1256px;top:856px;width:169px;height:14px;background:rgba(255,255,255,0.7)"></div>
<div class="a tx" style="left:1260px;top:859px;font-size:8.5px;color:#333;transform:scaleX(1.03)">© OpenStreetMap contributors © CARTO</div>
<!-- swipe -->
<div class="a" style="left:437px;top:457px;width:2px;height:414px;background:rgba(255,255,255,0.85)"></div>
<div class="a" style="left:417px;top:644px;width:41px;height:41px;border-radius:50%;background:#2f7fce"></div>
<svg class="a" style="left:425px;top:657px" width="25" height="14"><path d="M8 2 L2 7 L8 12Z" fill="#fff"/><path d="M16 2 L22 7 L16 12Z" fill="#fff"/></svg>
<!-- hand cursor -->
<svg class="a" style="left:362px;top:681px" width="15" height="15" viewBox="0 0 15 15"><path d="M4 13 C2 11 1 9 1.5 8 C2 7.5 3 8 4 9 V3 a1 1 0 0 1 2 0 V7 V2 a1 1 0 0 1 2 0 V7 V2.5 a1 1 0 0 1 2 0 V7 V4 a1 1 0 0 1 2 0 V10 C12 12.5 11 14 9 14 H6Z" fill="#fff" stroke="#222" stroke-width="1"/></svg>
<div class="a tx" style="left:96.2px;top:85.4px;font-size:18.10px;color:#ffffff;transform:scaleX(0.9789);">Capacitación: "Guía metodológica para la consideración del cambio climático en el SEIA"</div>
<div class="a tx" style="left:1494.0px;top:87.3px;font-size:13.80px;color:#7f85f5;transform:scaleX(0.9423);">¿Necesitas ayuda?</div>
<div class="a tx" style="left:1660.0px;top:86.3px;font-size:14.00px;color:#ffffff;font-weight:bold;transform:scaleX(0.9203);">Abandonar</div>
<div class="a tx" style="left:455.0px;top:15.6px;font-size:14.00px;color:#8c8c8c;transform:scaleX(0.9179);">Buscar</div>
<div class="a tx" style="left:9.6px;top:81.1px;font-size:10.00px;color:#d0d0d0;transform:scaleX(0.9956);">Actividad</div>
<div class="a tx" style="left:20.0px;top:137.1px;font-size:10.00px;color:#7f85f5;transform:scaleX(0.9467);">Chat</div>
<div class="a tx" style="left:12.6px;top:193.5px;font-size:10.00px;color:#d0d0d0;transform:scaleX(0.9657);">Equipos</div>
<div class="a tx" style="left:6.7px;top:249.0px;font-size:10.00px;color:#d0d0d0;transform:scaleX(0.9509);">Calendario</div>
<div class="a tx" style="left:9.6px;top:304.5px;font-size:10.00px;color:#d0d0d0;transform:scaleX(0.9410);">Llamadas</div>
<div class="a tx" style="left:11.9px;top:361.0px;font-size:10.00px;color:#d0d0d0;transform:scaleX(0.9463);">Archivos</div>
<div class="a tx" style="left:2.8px;top:473.4px;font-size:10.00px;color:#d0d0d0;transform:scaleX(0.9705);">Aplicaciones</div>
<div class="a tx" style="left:16.5px;top:1017.1px;font-size:10.00px;color:#d0d0d0;transform:scaleX(0.9614);">Ayuda</div>
<div class="a tx" style="left:84.7px;top:1051.4px;font-size:16.00px;color:#333333;transform:scaleX(0.9012);">Escribe aquí para buscar</div>
<div class="a tx" style="left:1765.3px;top:1052.4px;font-size:12.00px;color:#ffffff;transform:scaleX(0.7537);">ESP</div>
<div class="a tx" style="left:1815.0px;top:1043.1px;font-size:12.00px;color:#ffffff;transform:scaleX(0.8922);">11:04</div>
<div class="a tx" style="left:1799.0px;top:1061.3px;font-size:12.00px;color:#ffffff;transform:scaleX(0.9366);">21-02-2023</div>
<div class="a tx" style="left:169.4px;top:152.5px;font-size:10.00px;color:#222222;transform:scaleX(0.9297);opacity:0.95">https://arclim.mma.gob.cl/featu</div>
<div class="a tx" style="left:346.0px;top:152.5px;font-size:10.00px;color:#333333;transform:scaleX(0.8520);">Inicio - SIMBIO</div>
<div class="a tx" style="left:249.8px;top:178.4px;font-size:10.50px;color:#7a7a7a;transform:scaleX(0.9753);">https://<span style="color:#1a1a1a">arclim.mma.gob.cl</span>/features/explorador_amenazas_v2/</div>
<div class="a tx" style="left:147.3px;top:214.8px;font-size:9.00px;color:#6a6a6a;font-weight:bold;transform:scaleX(0.9601);">Ministerio del</div>
<div class="a tx" style="left:147.8px;top:224.8px;font-size:9.00px;color:#6a6a6a;font-weight:bold;transform:scaleX(0.9654);">Medio</div>
<div class="a tx" style="left:147.8px;top:234.7px;font-size:9.00px;color:#6a6a6a;font-weight:bold;transform:scaleX(0.9557);">Ambiente</div>
<div class="a tx" style="left:239.7px;top:219.6px;font-size:17.40px;color:#5a5a5a;transform:scaleX(0.8779);">RCLIM</div>
<div class="a tx" style="left:311.3px;top:221.3px;font-size:13.20px;color:#555555;transform:scaleX(0.9096);">EXPLORADOR DE AMENAZAS CLIMÁTICAS</div>
<div class="a tx" style="left:1142.3px;top:209.6px;font-size:21.00px;color:#7ab0c6;transform:scaleX(0.8505);">(CR)</div>
<div class="a tx" style="left:1181.0px;top:211.3px;font-size:9.00px;color:#7ab0c6;transform:scaleX(1.1963);">2</div>
<div class="a tx" style="left:1194.4px;top:227.4px;font-size:7.50px;color:#a8a8a8;transform:scaleX(0.9136);">Center for Climate</div>
<div class="a tx" style="left:1194.4px;top:235.6px;font-size:7.50px;color:#a8a8a8;transform:scaleX(0.8874);">and Resilience Research</div>
<div class="a tx" style="left:1331.4px;top:209.9px;font-size:17.40px;color:#757575;font-weight:bold;transform:scaleX(1.0942);">Centro <span style="color:#8a9fb8">UC</span></div>
<div class="a tx" style="left:1331.4px;top:227.3px;font-size:16.80px;color:#858585;transform:scaleX(0.8387);">Cambio Global</div>
<div class="a tx" style="left:1448.3px;top:223.1px;font-size:10.50px;color:#5e90cf;transform:scaleX(0.9610);">Login</div>
<div class="a tx" style="left:285.7px;top:267.3px;font-size:11.60px;color:#d6d2e6;transform:scaleX(0.9765);">Capa Geográfica</div>
<div class="a tx" style="left:279.4px;top:291.9px;font-size:19.50px;color:#ffffff;transform:scaleX(1.0004);">Comunas</div>
<div class="a tx" style="left:754.8px;top:267.6px;font-size:11.60px;color:#e0d2de;transform:scaleX(0.9732);">Amenaza Climática</div>
<div class="a tx" style="left:603.3px;top:291.5px;font-size:19.50px;color:#ffffff;transform:scaleX(1.0466);">Promedio de la temperatura máxima diaria</div>
<div class="a tx" style="left:1229.2px;top:267.6px;font-size:11.60px;color:#f2dcd0;transform:scaleX(0.9833);">Estación del año</div>
<div class="a tx" style="left:1238.8px;top:292.3px;font-size:19.50px;color:#ffffff;transform:scaleX(1.0045);">Anual</div>
<div class="a tx" style="left:355.6px;top:331.2px;font-size:14.50px;color:#ffffff;transform:scaleX(0.8875);">HISTÓRICO</div>
<div class="a tx" style="left:465.6px;top:331.2px;font-size:14.50px;color:#ffffff;transform:scaleX(0.8805);">FUTURO</div>
<div class="a tx" style="left:1062.8px;top:331.0px;font-size:14.50px;color:#ffffff;transform:scaleX(0.9711);">Δ CAMBIO</div>
<div class="a tx" style="left:1439.5px;top:348.2px;font-size:10.00px;color:#dfeaff;transform:scaleX(0.9394);">DATOS</div>
<div class="a tx" style="left:1446.0px;top:409.1px;font-size:7.00px;color:#d6e6fb;transform:scaleX(0.9829);">XLSX</div>
<div class="a tx" style="left:1437.6px;top:469.6px;font-size:7.50px;color:#d6e6fb;transform:scaleX(1.0062);">GeoJSON</div>
<div class="a tx" style="left:1435.8px;top:528.0px;font-size:7.50px;color:#d6e6fb;transform:scaleX(0.9697);">ARCHIVOS</div>
<div class="a tx" style="left:1424.0px;top:540.1px;font-size:7.50px;color:#d6e6fb;transform:scaleX(1.0424);">CONSOLIDADOS</div>
<div class="a tx" style="left:1432.0px;top:574.2px;font-size:11.00px;color:#eef4ff;transform:scaleX(0.8076);">GRÁFICOS</div>
<div class="a tx" style="left:1446.0px;top:637.0px;font-size:7.00px;color:#dde0ff;transform:scaleX(0.8565);">SERIE</div>
<div class="a tx" style="left:1442.3px;top:696.0px;font-size:7.00px;color:#d6e6fb;transform:scaleX(1.0324);">ANUAL</div>
<div class="a tx" style="left:1432.0px;top:754.9px;font-size:7.50px;color:#d6e6fb;transform:scaleX(0.9515);">FRECUENCIA</div>
<div class="a tx" style="left:177.7px;top:371.0px;font-size:7.50px;color:#9a9a9a;transform:scaleX(1.0387);">Tipo visualización</div>
<div class="a tx" style="left:182.3px;top:419.1px;font-size:8.00px;color:#707070;font-weight:bold;transform:scaleX(0.9808);">Polígono con</div>
<div class="a tx" style="left:196.2px;top:431.0px;font-size:8.00px;color:#707070;font-weight:bold;transform:scaleX(0.9805);">borde</div>
<div class="a tx" style="left:310.6px;top:366.3px;font-size:11.90px;color:#555555;font-weight:bold;transform:scaleX(0.9879);">Promedio de la temperatura máxima diaria [Año completo]</div>
<div class="a tx" style="left:358.4px;top:398.8px;font-size:13.80px;color:#1a1a1a;transform:scaleX(0.8464);">10</div>
<div class="a tx" style="left:565.0px;top:398.8px;font-size:13.80px;color:#1a1a1a;transform:scaleX(0.9115);">25</div>
<div class="a tx" style="left:386.5px;top:428.4px;font-size:8.50px;color:#8a8a8a;transform:scaleX(0.9505);">10</div>
<div class="a tx" style="left:442.0px;top:428.4px;font-size:8.50px;color:#8a8a8a;transform:scaleX(0.9505);">15</div>
<div class="a tx" style="left:496.0px;top:428.4px;font-size:8.50px;color:#8a8a8a;transform:scaleX(0.9505);">20</div>
<div class="a tx" style="left:551.7px;top:428.4px;font-size:8.50px;color:#8a8a8a;transform:scaleX(0.9505);">25</div>
<div class="a tx" style="left:337.0px;top:428.8px;font-size:8.00px;color:#9a9a9a;transform:scaleX(0.9697);">Min</div>
<div class="a tx" style="left:595.6px;top:428.8px;font-size:8.00px;color:#9a9a9a;transform:scaleX(1.0182);">Max</div>
<div class="a tx" style="left:468.0px;top:442.0px;font-size:10.00px;color:#808080;transform:scaleX(0.9791);">°C</div>
<div class="a tx" style="left:836.7px;top:371.0px;font-size:7.50px;color:#9a9a9a;transform:scaleX(1.0387);">Tipo visualización</div>
<div class="a tx" style="left:841.3px;top:419.1px;font-size:8.00px;color:#707070;font-weight:bold;transform:scaleX(0.9808);">Polígono con</div>
<div class="a tx" style="left:855.2px;top:431.0px;font-size:8.00px;color:#707070;font-weight:bold;transform:scaleX(0.9805);">borde</div>
<div class="a tx" style="left:969.6px;top:366.3px;font-size:11.90px;color:#555555;font-weight:bold;transform:scaleX(0.9879);">Promedio de la temperatura máxima diaria [Año completo]</div>
<div class="a tx" style="left:1024.8px;top:398.8px;font-size:13.80px;color:#1a1a1a;transform:scaleX(0.5463);">1</div>
<div class="a tx" style="left:1224.9px;top:398.8px;font-size:13.80px;color:#1a1a1a;transform:scaleX(0.7935);">2</div>
<div class="a tx" style="left:1045.6px;top:428.4px;font-size:8.50px;color:#8a8a8a;transform:scaleX(0.6337);">1</div>
<div class="a tx" style="left:1074.5px;top:428.4px;font-size:8.50px;color:#8a8a8a;transform:scaleX(0.8624);">1.2</div>
<div class="a tx" style="left:1110.0px;top:428.4px;font-size:8.50px;color:#8a8a8a;transform:scaleX(0.8454);">1.4</div>
<div class="a tx" style="left:1145.8px;top:428.4px;font-size:8.50px;color:#8a8a8a;transform:scaleX(0.8624);">1.6</div>
<div class="a tx" style="left:1181.8px;top:428.4px;font-size:8.50px;color:#8a8a8a;transform:scaleX(0.8624);">1.8</div>
<div class="a tx" style="left:1216.2px;top:428.4px;font-size:8.50px;color:#8a8a8a;transform:scaleX(1.0139);">2</div>
<div class="a tx" style="left:996.3px;top:428.8px;font-size:8.00px;color:#9a9a9a;transform:scaleX(1.0628);">Min</div>
<div class="a tx" style="left:1254.6px;top:428.8px;font-size:8.00px;color:#9a9a9a;transform:scaleX(0.9851);">Max</div>
<div class="a tx" style="left:1127.8px;top:442.0px;font-size:10.00px;color:#808080;transform:scaleX(0.8189);">°C</div>
<div class="a tx" style="left:647.9px;top:877.6px;font-size:9.00px;color:#5590d6;transform:scaleX(0.9652);">Explorador de Amenazas - Ministerio de Medio Ambiente - <i>2020</i></div>
<div class="a tx" style="left:145.0px;top:912.3px;font-size:8.50px;color:#333333;font-weight:bold;transform:scaleX(0.8947);">17°C</div>
<div class="a tx" style="left:145.0px;top:923.4px;font-size:9.00px;color:#555555;transform:scaleX(1.0065);">Mayorm. nublado</div>
<div class="a tx" style="left:656.0px;top:917.9px;font-size:9.00px;color:#333333;transform:scaleX(1.0112);">Búsqueda</div>
<div class="a tx" style="left:1485.0px;top:912.3px;font-size:8.50px;color:#555555;transform:scaleX(1.0174);">11:04</div>
<div class="a tx" style="left:1461.0px;top:923.8px;font-size:8.50px;color:#555555;transform:scaleX(1.0349);">21-02-2023</div><svg id="video" class="a" width="353" height="199" viewBox="0 0 353 199">
<defs>
<linearGradient id="sky" x1="0" y1="0" x2="0" y2="1"><stop offset="0" stop-color="#bad4f4"/><stop offset="0.55" stop-color="#cde0f5"/><stop offset="1" stop-color="#d6e6f4"/></linearGradient>
<radialGradient id="face" cx="0.5" cy="0.45" r="0.6"><stop offset="0" stop-color="#e2b4a4"/><stop offset="0.65" stop-color="#cf9888"/><stop offset="1" stop-color="#a87060"/></radialGradient>
<linearGradient id="hair" x1="0" y1="0" x2="0" y2="1"><stop offset="0" stop-color="#3c2420"/><stop offset="0.5" stop-color="#5a2e26"/><stop offset="1" stop-color="#4a2622"/></linearGradient>
</defs>
<rect width="353" height="199" fill="url(#sky)"/>
<ellipse cx="60" cy="60" rx="70" ry="25" fill="#d6e5f6" opacity="0.6"/>
<ellipse cx="300" cy="70" rx="60" ry="22" fill="#d8e6f6" opacity="0.6"/>
<!-- SEA logo -->
<g fill="none" stroke="#1d5a80" stroke-width="2.3" stroke-linecap="round">
<path d="M14 13 H6 a3 3 0 0 0 0 6 H11 a3 3 0 0 1 0 6 H3"/>
<path d="M29 13 H20 a3 3 0 0 0 -3 3 V22 a3 3 0 0 0 3 3 H29 M18 19 H27"/>
<path d="M31 25 L36 13 L41 25"/>
</g>
<path d="M37 24 C38 15 44 11 51 11 C50 18 45 23 37 24Z" fill="#4aa02c"/><path d="M39 22 L48 13" stroke="#d8f0c0" stroke-width="0.8"/>
<rect x="2" y="27" width="48" height="1" fill="#4a7090" opacity="0.7"/><rect x="2" y="29" width="24" height="1.3" fill="#3a60a8"/><rect x="26" y="29" width="24" height="1.3" fill="#d04040"/>
<!-- left illustrations -->
<g>
<g stroke="#a08ac8" stroke-width="2.2" stroke-linecap="round" fill="none"><path d="M8 100 L1 92 M8 100 L4 89 M8 100 L10 89 M8 100 L16 91 M8 100 L19 98 M8 100 L0 104 M8 100 L2 108 M8 100 L14 106"/></g>
<path d="M6.5 101 H10 L10.5 153 H6Z" fill="#b0a4cc"/>
<path d="M20 155 V126 C20 119 27 119 27 126 V140 C31 139 31 122 35 122 C39 122 38 140 33 146 L27 150 V155Z M19 150 C13 146 10 130 14 127 C18 126 18 138 21 143Z" fill="#2f8a3a"/>
<path d="M30 152 L31 138 C31 134 34 133 36 134 L38 128 L41 129 L40 137 L52 138 C54 138 55 140 55 142 L54 152 L51 152 L50 145 L37 145 L35 152Z" fill="#f2573a"/>
<circle cx="58" cy="114" r="19" fill="none" stroke="#9a80c0" stroke-width="1" stroke-dasharray="2 1.3"/>
<circle cx="58" cy="114" r="15" fill="none" stroke="#a890c8" stroke-width="0.8" stroke-dasharray="1.5 1.5"/>
<path d="M57 152 L58 124 L50 110 M58 130 L67 112 M58 122 L62 104" stroke="#8a62b0" stroke-width="3" fill="none"/>
<path d="M70 136 L86 124 L101 136 V155 H70Z" fill="#2f6ad0"/>
<path d="M72 136 H86 V155 H72Z" fill="#a8ccf4"/><path d="M72 139.5 H86 M72 143 H86 M72 146.5 H86 M72 150 H86" stroke="#3a78d8" stroke-width="1.2"/>
<rect x="77" y="143" width="4" height="12" fill="#2f6ad0"/>
<rect x="89" y="141" width="8" height="7" fill="#d0e4f8"/>
<path d="M107 153 V121 C107 112 117 112 117 121 V133 C121 131 121 117 125 117 C129 117 129 133 123 139 L117 144 V153Z M105 148 C100 143 100 127 103 125 C107 125 107 135 109 139Z" fill="#9ccc56"/>
</g>
<!-- right illustrations -->
<g>
<path d="M250 150 V124 C250 116 258 116 258 124 V150Z M247 140 C244 136 244 128 247 127 C250 127 250 134 251 137Z" fill="#8cc850"/>
<path d="M279 83 C268 90 264 104 266 112 C270 118 276 118 279 116 C282 118 289 118 293 112 C295 104 290 90 279 83Z" fill="#4a8a5a"/>
<path d="M270 95 L288 95 M267 103 L291 103 M267 110 L291 110" stroke="#7ab48a" stroke-width="1"/>
<rect x="277.8" y="86" width="2.6" height="69" fill="#2a6a36"/>
<circle cx="268.5" cy="121" r="2.8" fill="#e8b8a0"/><path d="M262 124 H275 L276 140 H261Z" fill="#e8402a"/><path d="M263 140 H274 V153 H263Z" fill="#f2f2f2"/>
<circle cx="289" cy="121" r="2.8" fill="#e8b8a0"/><path d="M284 124 H294 L297 153 H281Z" fill="#e8402a"/>
<circle cx="309" cy="128" r="2.8" fill="#e8b8a0"/><path d="M304 131 H314 V140 H304Z" fill="#f4f0f0"/><path d="M303 140 H315 V154 H303Z" fill="#e8402a"/>
<path d="M318 154 V121 C318 118 322 117 326 118" stroke="#5a7ab8" stroke-width="1.8" fill="none"/>
<path d="M323 140 L338 127 L353 140 V155 H323Z" fill="#2f68d0"/><rect x="328" y="142" width="6" height="6" fill="#d0e4f8"/><rect x="342" y="142" width="6" height="6" fill="#d0e4f8"/>
<path d="M309 102 C316 108 324 112 334 110 L353 103 V113 C340 116 328 117 318 113 C313 111 310 107 309 102Z" fill="#f0a06a"/>
<path d="M326 81 C322 90 318 97 319 102 C320 107 332 108 334 102 C335 97 330 90 326 81Z" fill="#3a5ad8"/>
</g>
<!-- ground -->
<path d="M0 153 C40 149 80 151 120 152 C200 153 280 150 353 152 V199 H0Z" fill="#4ea03a"/>
<path d="M0 158 H353 M0 164 H353 M0 169 H353" stroke="#2f7a2a" stroke-width="1.4"/>
<path d="M59 163 l3 -2 3 2 3 -2 3 2 3 -2 3 2 3 -2 3 2 3 -2 3 2 3 -2" fill="none" stroke="#f0e040" stroke-width="1.6"/>
<path d="M268 163 l3 -2 3 2 3 -2 3 2 3 -2 3 2 3 -2 3 2" fill="none" stroke="#f0e040" stroke-width="1.6"/>
<rect x="0" y="172.5" width="353" height="19.5" fill="#8a5cac"/>
<path d="M0 177 H353 M0 183 H353 M0 188 H353" stroke="#a078c0" stroke-width="1.2"/>
<rect x="0" y="192" width="353" height="7" fill="#6e4438"/>
<path d="M0 195 H353" stroke="#c07040" stroke-width="1"/>
<!-- woman -->
<path d="M196 34 C178 33 163 42 155 54 C146 66 141 80 138 95 C135 110 134 122 128 134 C122 146 116 156 108 166 C100 176 94 188 91 199 H292 C287 188 279 178 270 170 C260 160 254 148 252 130 C250 112 248 92 242 76 C236 60 226 46 214 39 C208 35 202 34 196 34Z" fill="#4e2822"/>
<path d="M150 70 C140 90 142 110 134 130 C128 146 118 160 110 175 M146 110 C140 135 132 160 122 199 M230 64 C240 90 240 120 244 140 C250 158 262 172 280 192 M244 140 C250 165 262 182 272 199" stroke="#6e3a2e" stroke-width="4" fill="none" opacity="0.55"/>
<path d="M138 120 C132 140 124 158 112 172 M238 104 C242 130 250 155 268 176" stroke="#2e1814" stroke-width="3" fill="none" opacity="0.5"/>
<path d="M172 134 C173 146 173 156 171 166 C169 178 167 190 166 199 H216 C216 186 217 170 220 156 L220 134Z" fill="#b27a6a"/>
<path d="M217 152 C224 168 236 184 250 199 H214 C213 184 214 166 217 152Z" fill="#141012"/>
<path d="M220 146 L230 150 L250 192 L244 199 L236 199 L219 160Z" fill="#d8b2b0"/>
<path d="M236 156 C252 162 272 178 292 199 H248 C244 186 240 172 236 156Z" fill="#5a2a2e"/>
<path d="M91 199 C98 186 110 174 128 166 C140 160 156 162 164 176 L168 199Z" fill="#3c2222"/>
<path d="M188 54 C205 54 219 66 221 86 C223 104 218 122 208 134 C200 142 190 144 182 140 C170 134 160 120 157 104 C154 86 162 56 188 54Z" fill="url(#face)"/>
<path d="M150 80 C156 58 176 50 192 52 C210 53 222 62 226 78 C218 64 204 58 190 59 C174 60 160 66 150 80Z" fill="#4e2822"/>
<g fill="none" stroke="#b88480" stroke-width="1.8"><path d="M152 88 C154 80 176 78 181 86 C184 96 178 104 166 104 C156 104 150 98 152 88Z"/><path d="M184 84 C188 76 214 74 219 82 C222 92 214 100 200 100 C188 100 182 94 184 84Z"/></g>
<ellipse cx="168" cy="92" rx="4" ry="2.6" fill="#3e2a2a"/><ellipse cx="202" cy="88" rx="4.5" ry="2.6" fill="#3e2a2a"/>
<path d="M182 96 C184 104 184 110 186 112 C190 113 193 112 194 110" fill="none" stroke="#a86c60" stroke-width="1.2"/>
<path d="M175 120 C182 116 192 116 198 119 C192 123 181 123 175 120Z" fill="#9a5652"/>
<path d="M218 122 L222 123 L227 140 L223 148 L219 140Z" fill="#e0dade"/>
</svg>
</body></html>
